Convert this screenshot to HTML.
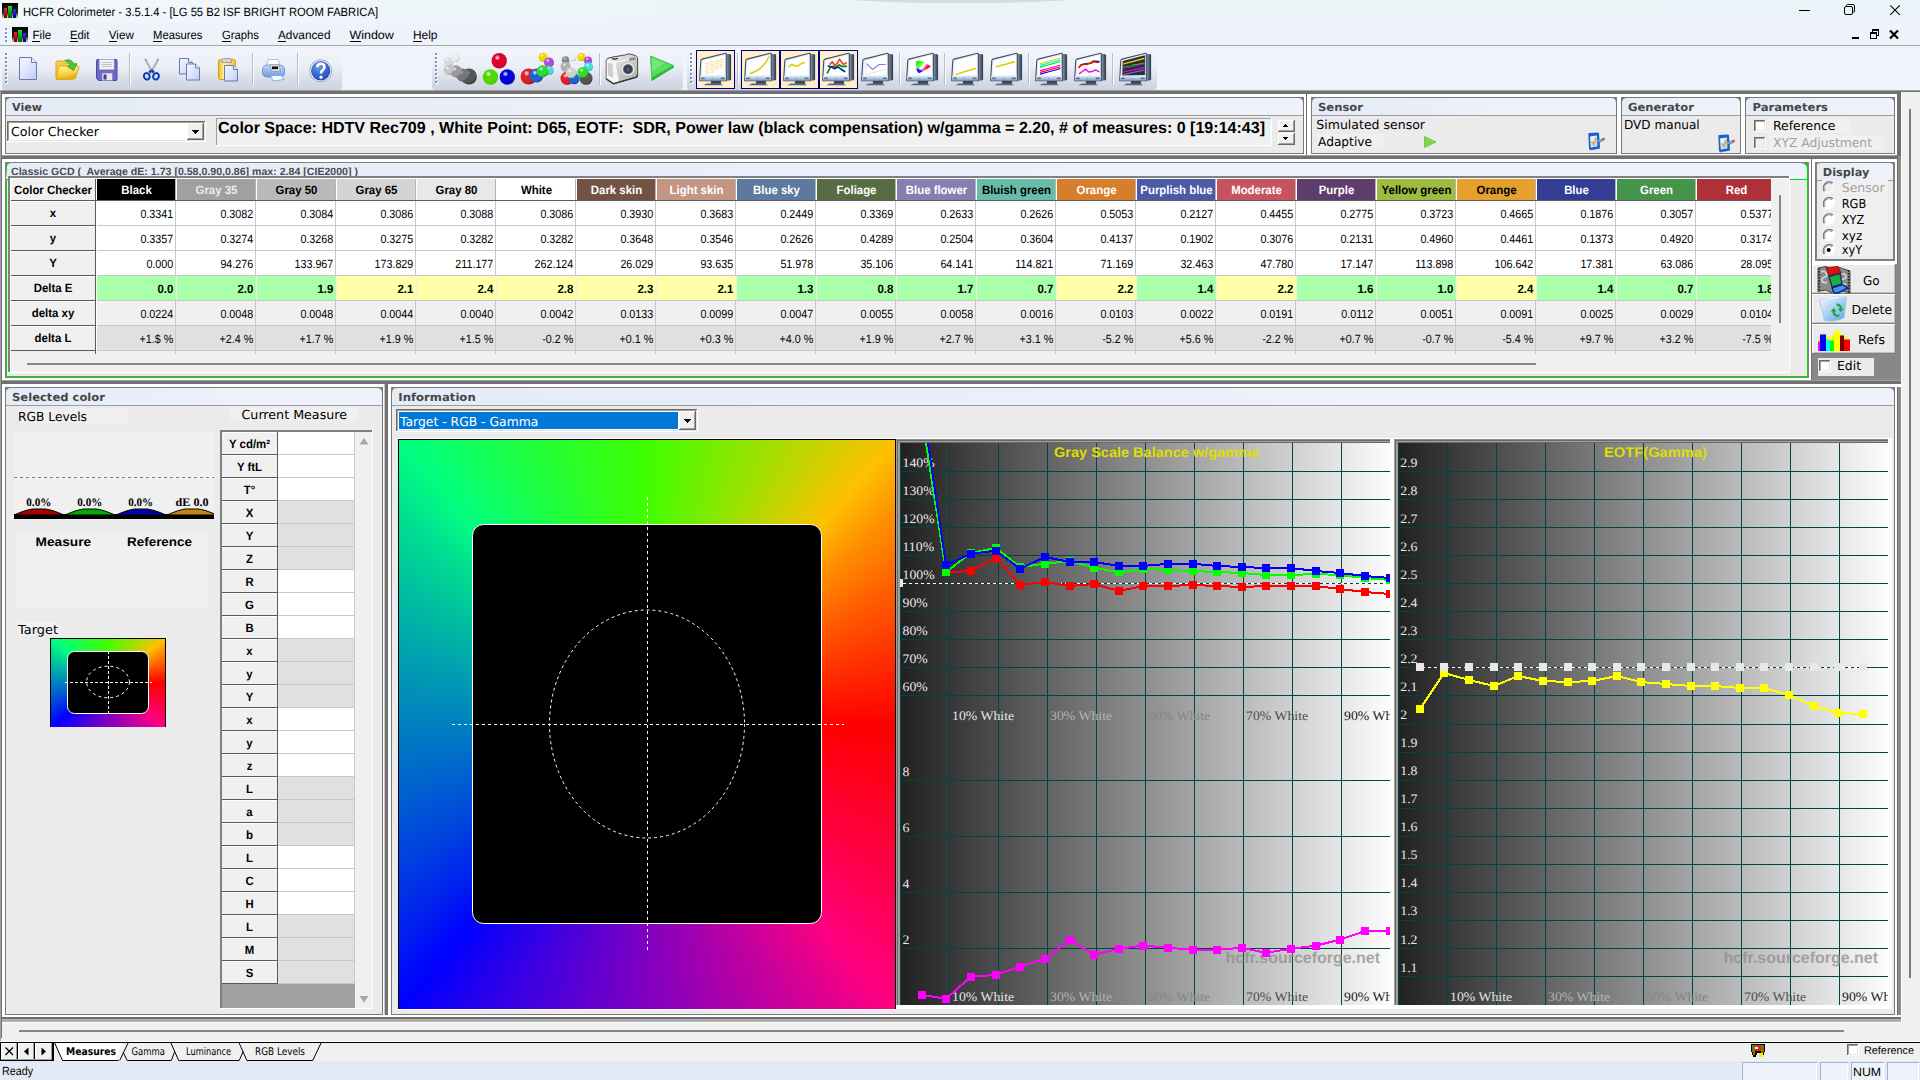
<!DOCTYPE html>
<html><head><meta charset="utf-8"><title>HCFR Colorimeter</title>
<style>
html,body{margin:0;padding:0;background:#f0f0f0;overflow:hidden}
svg{display:block}
text{white-space:pre}
</style></head><body>
<svg width="1920" height="1080" viewBox="0 0 1920 1080" shape-rendering="crispEdges" text-rendering="geometricPrecision">
<defs>
<linearGradient id="gTitle" x1="0" x2="1" y1="0" y2="0"><stop offset="0" stop-color="#f2f7fa"/><stop offset="0.5" stop-color="#eaf4f7"/><stop offset="1" stop-color="#ebf4f8"/></linearGradient>
<linearGradient id="gi2_3" x1="0" x2="0" y1="0" y2="1"><stop offset="0" stop-color="#000"/><stop offset="0.6" stop-color="#222"/><stop offset="1" stop-color="#fff"/></linearGradient>
<linearGradient id="gb2_3_0" x1="0" x2="0" y1="0" y2="1"><stop offset="0" stop-color="#ff2020"/><stop offset="1" stop-color="#700000"/></linearGradient>
<linearGradient id="gb2_3_1" x1="0" x2="0" y1="0" y2="1"><stop offset="0" stop-color="#20e020"/><stop offset="1" stop-color="#006000"/></linearGradient>
<linearGradient id="gb2_3_2" x1="0" x2="0" y1="0" y2="1"><stop offset="0" stop-color="#3030ff"/><stop offset="1" stop-color="#000080"/></linearGradient>
<linearGradient id="gi12_27" x1="0" x2="0" y1="0" y2="1"><stop offset="0" stop-color="#000"/><stop offset="0.6" stop-color="#222"/><stop offset="1" stop-color="#fff"/></linearGradient>
<linearGradient id="gb12_27_0" x1="0" x2="0" y1="0" y2="1"><stop offset="0" stop-color="#ff2020"/><stop offset="1" stop-color="#700000"/></linearGradient>
<linearGradient id="gb12_27_1" x1="0" x2="0" y1="0" y2="1"><stop offset="0" stop-color="#20e020"/><stop offset="1" stop-color="#006000"/></linearGradient>
<linearGradient id="gb12_27_2" x1="0" x2="0" y1="0" y2="1"><stop offset="0" stop-color="#3030ff"/><stop offset="1" stop-color="#000080"/></linearGradient>
<linearGradient id="gTb" x1="0" x2="0" y1="0" y2="1"><stop offset="0" stop-color="#f2f5fb"/><stop offset="0.45" stop-color="#eaeef6"/><stop offset="0.8" stop-color="#d6dbe6"/><stop offset="1" stop-color="#cdd3df"/></linearGradient>
<linearGradient id="gPage" x1="0" y1="0" x2="1" y2="1"><stop offset="0" stop-color="#f4f7ff"/><stop offset="0.5" stop-color="#dfe6fb"/><stop offset="1" stop-color="#b9cdf6"/></linearGradient>
<linearGradient id="gFold" x1="0" y1="0" x2="0.3" y2="1"><stop offset="0" stop-color="#fff3a8"/><stop offset="0.6" stop-color="#f9d84a"/><stop offset="1" stop-color="#e8ad10"/></linearGradient>
<linearGradient id="gClip" x1="0" y1="0" x2="1" y2="0"><stop offset="0" stop-color="#e8b820"/><stop offset="0.3" stop-color="#fdf0a0"/><stop offset="1" stop-color="#f0c840"/></linearGradient>
<linearGradient id="gPrn" x1="0" y1="0" x2="0" y2="1"><stop offset="0" stop-color="#c8d8f8"/><stop offset="1" stop-color="#6f98e0"/></linearGradient>
<radialGradient id="gHelp" cx="0.4" cy="0.3" r="0.8"><stop offset="0" stop-color="#6f9ae8"/><stop offset="0.6" stop-color="#2f62c8"/><stop offset="1" stop-color="#1f48a8"/></radialGradient>
<radialGradient id="gs0" cx="0.38" cy="0.3" r="0.75"><stop offset="0" stop-color="#fff"/><stop offset="0.25" stop-color="#555"/><stop offset="0.75" stop-color="#555"/><stop offset="1" stop-color="#2a2a2a"/></radialGradient>
<radialGradient id="gs1" cx="0.38" cy="0.3" r="0.75"><stop offset="0" stop-color="#fff"/><stop offset="0.25" stop-color="#777"/><stop offset="0.75" stop-color="#777"/><stop offset="1" stop-color="#444"/></radialGradient>
<radialGradient id="gs2" cx="0.38" cy="0.3" r="0.75"><stop offset="0" stop-color="#fff"/><stop offset="0.25" stop-color="#9a9a9a"/><stop offset="0.75" stop-color="#9a9a9a"/><stop offset="1" stop-color="#666"/></radialGradient>
<radialGradient id="gs3" cx="0.38" cy="0.3" r="0.75"><stop offset="0" stop-color="#fff"/><stop offset="0.25" stop-color="#c8c8c8"/><stop offset="0.75" stop-color="#c8c8c8"/><stop offset="1" stop-color="#888"/></radialGradient>
<radialGradient id="gs4" cx="0.38" cy="0.3" r="0.75"><stop offset="0" stop-color="#fff"/><stop offset="0.25" stop-color="#d8d8d8"/><stop offset="0.75" stop-color="#d8d8d8"/><stop offset="1" stop-color="#999"/></radialGradient>
<radialGradient id="gs5" cx="0.38" cy="0.3" r="0.75"><stop offset="0" stop-color="#fff"/><stop offset="0.25" stop-color="#ececec"/><stop offset="0.75" stop-color="#ececec"/><stop offset="1" stop-color="#aaa"/></radialGradient>
<radialGradient id="gs6" cx="0.38" cy="0.3" r="0.75"><stop offset="0" stop-color="#fff"/><stop offset="0.25" stop-color="#dc0030"/><stop offset="0.75" stop-color="#dc0030"/><stop offset="1" stop-color="#c00028"/></radialGradient>
<radialGradient id="gs7" cx="0.38" cy="0.3" r="0.75"><stop offset="0" stop-color="#fff"/><stop offset="0.25" stop-color="#50d800"/><stop offset="0.75" stop-color="#50d800"/><stop offset="1" stop-color="#40c000"/></radialGradient>
<radialGradient id="gs8" cx="0.38" cy="0.3" r="0.75"><stop offset="0" stop-color="#fff"/><stop offset="0.25" stop-color="#0000d8"/><stop offset="0.75" stop-color="#0000d8"/><stop offset="1" stop-color="#0000a8"/></radialGradient>
<radialGradient id="gs9" cx="0.38" cy="0.3" r="0.75"><stop offset="0" stop-color="#fff"/><stop offset="0.25" stop-color="#e02020"/><stop offset="0.75" stop-color="#e02020"/><stop offset="1" stop-color="#801010"/></radialGradient>
<radialGradient id="gs10" cx="0.38" cy="0.3" r="0.75"><stop offset="0" stop-color="#fff"/><stop offset="0.25" stop-color="#2060d8"/><stop offset="0.75" stop-color="#2060d8"/><stop offset="1" stop-color="#103890"/></radialGradient>
<radialGradient id="gs11" cx="0.38" cy="0.3" r="0.75"><stop offset="0" stop-color="#fff"/><stop offset="0.25" stop-color="#f0d800"/><stop offset="0.75" stop-color="#f0d800"/><stop offset="1" stop-color="#b09000"/></radialGradient>
<radialGradient id="gs12" cx="0.38" cy="0.3" r="0.75"><stop offset="0" stop-color="#fff"/><stop offset="0.25" stop-color="#b050d8"/><stop offset="0.75" stop-color="#b050d8"/><stop offset="1" stop-color="#703098"/></radialGradient>
<radialGradient id="gs13" cx="0.38" cy="0.3" r="0.75"><stop offset="0" stop-color="#fff"/><stop offset="0.25" stop-color="#40e0e0"/><stop offset="0.75" stop-color="#40e0e0"/><stop offset="1" stop-color="#20a0a0"/></radialGradient>
<radialGradient id="gs14" cx="0.38" cy="0.3" r="0.75"><stop offset="0" stop-color="#fff"/><stop offset="0.25" stop-color="#30d830"/><stop offset="0.75" stop-color="#30d830"/><stop offset="1" stop-color="#109010"/></radialGradient>
<radialGradient id="gs15" cx="0.38" cy="0.3" r="0.75"><stop offset="0" stop-color="#fff"/><stop offset="0.25" stop-color="#888"/><stop offset="0.75" stop-color="#888"/><stop offset="1" stop-color="#555"/></radialGradient>
<radialGradient id="gs16" cx="0.38" cy="0.3" r="0.75"><stop offset="0" stop-color="#fff"/><stop offset="0.25" stop-color="#b0b0b0"/><stop offset="0.75" stop-color="#b0b0b0"/><stop offset="1" stop-color="#777"/></radialGradient>
<radialGradient id="gs17" cx="0.38" cy="0.3" r="0.75"><stop offset="0" stop-color="#fff"/><stop offset="0.25" stop-color="#d0d0d0"/><stop offset="0.75" stop-color="#d0d0d0"/><stop offset="1" stop-color="#8a8a8a"/></radialGradient>
<radialGradient id="gs18" cx="0.38" cy="0.3" r="0.75"><stop offset="0" stop-color="#fff"/><stop offset="0.25" stop-color="#eee"/><stop offset="0.75" stop-color="#eee"/><stop offset="1" stop-color="#aaa"/></radialGradient>
<linearGradient id="gCam" x1="0" y1="0" x2="1" y2="1"><stop offset="0" stop-color="#f4f4f4"/><stop offset="0.5" stop-color="#d0d0d0"/><stop offset="1" stop-color="#a8a8a8"/></linearGradient>
<linearGradient id="gMonB" x1="0" y1="0" x2="0" y2="1"><stop offset="0" stop-color="#e8f0fa"/><stop offset="1" stop-color="#7f9fc8"/></linearGradient>
<linearGradient id="gMonR" x1="0" y1="0" x2="1" y2="0"><stop offset="0" stop-color="#8fa6c2"/><stop offset="1" stop-color="#2c3644"/></linearGradient>
<linearGradient id="gCie" x1="0" y1="0" x2="1" y2="1"><stop offset="0" stop-color="#00e000"/><stop offset="0.35" stop-color="#60ff40"/><stop offset="0.5" stop-color="#fff"/><stop offset="0.7" stop-color="#ff2080"/><stop offset="1" stop-color="#ff0000"/></linearGradient>
<linearGradient id="gHdr" x1="0" x2="1" y1="0" y2="0"><stop offset="0" stop-color="#e4ecf7"/><stop offset="0.6" stop-color="#ecf1fa"/><stop offset="1" stop-color="#eef3fb"/></linearGradient>
<linearGradient id="gCfg" x1="0" y1="0" x2="1" y2="1"><stop offset="0" stop-color="#ffffff"/><stop offset="1" stop-color="#a8d4fb"/></linearGradient>
<linearGradient id="gBin" x1="0" y1="0" x2="1" y2="1"><stop offset="0" stop-color="#f4faff"/><stop offset="0.5" stop-color="#a8d0f4"/><stop offset="1" stop-color="#5fa0e0"/></linearGradient>
<linearGradient id="gCh1" gradientUnits="userSpaceOnUse" x1="900" x2="1390" y1="0" y2="0"><stop offset="0" stop-color="#212121"/><stop offset="1" stop-color="#fcfcfc"/></linearGradient>
<linearGradient id="gCh2" gradientUnits="userSpaceOnUse" x1="1398" x2="1888" y1="0" y2="0"><stop offset="0" stop-color="#212121"/><stop offset="1" stop-color="#fcfcfc"/></linearGradient>
</defs>
<rect x="0" y="0" width="1920" height="1080" fill="#f0f0f0"/>
<rect x="0" y="0" width="1920" height="23" fill="url(#gTitle)"/>
<rect x="0" y="23" width="1920" height="23" fill="#eef2fa"/>
<ellipse cx="961" cy="-1.5" rx="112" ry="4.5" fill="#b8bcc0" opacity="0.45" shape-rendering="geometricPrecision"/>
<rect x="0" y="45" width="1920" height="1" fill="#a8a8a8"/>
<rect x="0" y="46" width="1920" height="44" fill="#eff3fa"/>
<rect x="2" y="3" width="16" height="16" fill="url(#gi2_3)"/>
<rect x="4.0" y="8.0" width="3.4" height="10.0" fill="url(#gb2_3_0)"/>
<rect x="8.3" y="6.0" width="3.4" height="12.0" fill="url(#gb2_3_1)"/>
<rect x="12.6" y="9.0" width="3.4" height="9.0" fill="url(#gb2_3_2)"/>
<text x="23" y="16" font-family="'Liberation Sans', sans-serif" font-size="12" fill="#000" textLength="355.0" lengthAdjust="spacingAndGlyphs">HCFR Colorimeter - 3.5.1.4 - [LG 55 B2 ISF BRIGHT ROOM FABRICA]</text>
<g stroke="#000" stroke-width="1" fill="none" shape-rendering="geometricPrecision">
<path d="M1799 10.5H1810"/>
<rect x="1844.5" y="6.5" width="8" height="8" rx="1.5"/><path d="M1846.5 6.5V5.5a1 1 0 0 1 1-1H1853a1.5 1.5 0 0 1 1.5 1.5V11a1 1 0 0 1-1 1H1852.5"/>
<path d="M1890.3 5.3L1899.8 14.8M1899.8 5.3L1890.3 14.8" stroke-width="1.1"/>
</g>
<rect x="1852" y="37" width="7" height="2" fill="#000"/>
<g fill="none" stroke="#000" shape-rendering="crispEdges"><path d="M1872.5 32.5V30.5H1878.5V35.5H1876.5" stroke-width="1"/><rect x="1870.5" y="33.5" width="6" height="5"/><path d="M1870 33H1877M1872 30H1879" stroke-width="2"/></g>
<path d="M1890 30.5L1898 38.5M1898 30.5L1890 38.5" stroke="#000" stroke-width="2.2" shape-rendering="geometricPrecision"/>
<rect x="6" y="29" width="2" height="2" fill="#fff"/>
<rect x="5" y="28" width="2" height="2" fill="#7b94b6"/>
<rect x="6" y="33" width="2" height="2" fill="#fff"/>
<rect x="5" y="32" width="2" height="2" fill="#7b94b6"/>
<rect x="6" y="37" width="2" height="2" fill="#fff"/>
<rect x="5" y="36" width="2" height="2" fill="#7b94b6"/>
<rect x="6" y="41" width="2" height="2" fill="#fff"/>
<rect x="5" y="40" width="2" height="2" fill="#7b94b6"/>
<rect x="12" y="27" width="16" height="16" fill="url(#gi12_27)"/>
<rect x="14.0" y="32.0" width="3.4" height="10.0" fill="url(#gb12_27_0)"/>
<rect x="18.3" y="30.0" width="3.4" height="12.0" fill="url(#gb12_27_1)"/>
<rect x="22.6" y="33.0" width="3.4" height="9.0" fill="url(#gb12_27_2)"/>
<text x="32.5" y="39" font-family="'Liberation Sans', sans-serif" font-size="12" fill="#000" textLength="18.8" lengthAdjust="spacingAndGlyphs">File</text>
<rect x="32" y="41" width="8" height="1" fill="#000"/>
<text x="70" y="39" font-family="'Liberation Sans', sans-serif" font-size="12" fill="#000" textLength="19.5" lengthAdjust="spacingAndGlyphs">Edit</text>
<rect x="70" y="41" width="8" height="1" fill="#000"/>
<text x="108.8" y="39" font-family="'Liberation Sans', sans-serif" font-size="12" fill="#000" textLength="25.0" lengthAdjust="spacingAndGlyphs">View</text>
<rect x="109" y="41" width="8" height="1" fill="#000"/>
<text x="153" y="39" font-family="'Liberation Sans', sans-serif" font-size="12" fill="#000" textLength="49.5" lengthAdjust="spacingAndGlyphs">Measures</text>
<rect x="153" y="41" width="9" height="1" fill="#000"/>
<text x="222" y="39" font-family="'Liberation Sans', sans-serif" font-size="12" fill="#000" textLength="36.8" lengthAdjust="spacingAndGlyphs">Graphs</text>
<rect x="222" y="41" width="9" height="1" fill="#000"/>
<text x="278" y="39" font-family="'Liberation Sans', sans-serif" font-size="12" fill="#000" textLength="52.5" lengthAdjust="spacingAndGlyphs">Advanced</text>
<rect x="278" y="41" width="8" height="1" fill="#000"/>
<text x="349.5" y="39" font-family="'Liberation Sans', sans-serif" font-size="12" fill="#000" textLength="44.3" lengthAdjust="spacingAndGlyphs">Window</text>
<rect x="350" y="41" width="11" height="1" fill="#000"/>
<text x="413" y="39" font-family="'Liberation Sans', sans-serif" font-size="12" fill="#000" textLength="24.5" lengthAdjust="spacingAndGlyphs">Help</text>
<rect x="413" y="41" width="9" height="1" fill="#000"/>
<path d="M2 48H338Q342 48 342 52V86Q342 90 338 90H5Q2 90 2 87Z" fill="url(#gTb)" shape-rendering="geometricPrecision"/>
<rect x="6" y="54" width="2" height="2" fill="#fff"/>
<rect x="5" y="53" width="2" height="2" fill="#7b94b6"/>
<rect x="6" y="58" width="2" height="2" fill="#fff"/>
<rect x="5" y="57" width="2" height="2" fill="#7b94b6"/>
<rect x="6" y="62" width="2" height="2" fill="#fff"/>
<rect x="5" y="61" width="2" height="2" fill="#7b94b6"/>
<rect x="6" y="66" width="2" height="2" fill="#fff"/>
<rect x="5" y="65" width="2" height="2" fill="#7b94b6"/>
<rect x="6" y="70" width="2" height="2" fill="#fff"/>
<rect x="5" y="69" width="2" height="2" fill="#7b94b6"/>
<rect x="6" y="74" width="2" height="2" fill="#fff"/>
<rect x="5" y="73" width="2" height="2" fill="#7b94b6"/>
<rect x="6" y="78" width="2" height="2" fill="#fff"/>
<rect x="5" y="77" width="2" height="2" fill="#7b94b6"/>
<rect x="6" y="82" width="2" height="2" fill="#fff"/>
<rect x="5" y="81" width="2" height="2" fill="#7b94b6"/>
<path d="M432 48H679Q683 48 683 52V86Q683 90 679 90H435Q432 90 432 87Z" fill="url(#gTb)" shape-rendering="geometricPrecision"/>
<rect x="436" y="54" width="2" height="2" fill="#fff"/>
<rect x="435" y="53" width="2" height="2" fill="#7b94b6"/>
<rect x="436" y="58" width="2" height="2" fill="#fff"/>
<rect x="435" y="57" width="2" height="2" fill="#7b94b6"/>
<rect x="436" y="62" width="2" height="2" fill="#fff"/>
<rect x="435" y="61" width="2" height="2" fill="#7b94b6"/>
<rect x="436" y="66" width="2" height="2" fill="#fff"/>
<rect x="435" y="65" width="2" height="2" fill="#7b94b6"/>
<rect x="436" y="70" width="2" height="2" fill="#fff"/>
<rect x="435" y="69" width="2" height="2" fill="#7b94b6"/>
<rect x="436" y="74" width="2" height="2" fill="#fff"/>
<rect x="435" y="73" width="2" height="2" fill="#7b94b6"/>
<rect x="436" y="78" width="2" height="2" fill="#fff"/>
<rect x="435" y="77" width="2" height="2" fill="#7b94b6"/>
<rect x="436" y="82" width="2" height="2" fill="#fff"/>
<rect x="435" y="81" width="2" height="2" fill="#7b94b6"/>
<path d="M687 48H1153Q1157 48 1157 52V86Q1157 90 1153 90H690Q687 90 687 87Z" fill="url(#gTb)" shape-rendering="geometricPrecision"/>
<rect x="691" y="54" width="2" height="2" fill="#fff"/>
<rect x="690" y="53" width="2" height="2" fill="#7b94b6"/>
<rect x="691" y="58" width="2" height="2" fill="#fff"/>
<rect x="690" y="57" width="2" height="2" fill="#7b94b6"/>
<rect x="691" y="62" width="2" height="2" fill="#fff"/>
<rect x="690" y="61" width="2" height="2" fill="#7b94b6"/>
<rect x="691" y="66" width="2" height="2" fill="#fff"/>
<rect x="690" y="65" width="2" height="2" fill="#7b94b6"/>
<rect x="691" y="70" width="2" height="2" fill="#fff"/>
<rect x="690" y="69" width="2" height="2" fill="#7b94b6"/>
<rect x="691" y="74" width="2" height="2" fill="#fff"/>
<rect x="690" y="73" width="2" height="2" fill="#7b94b6"/>
<rect x="691" y="78" width="2" height="2" fill="#fff"/>
<rect x="690" y="77" width="2" height="2" fill="#7b94b6"/>
<rect x="691" y="82" width="2" height="2" fill="#fff"/>
<rect x="690" y="81" width="2" height="2" fill="#7b94b6"/>
<rect x="129" y="53" width="1" height="32" fill="#b8bccb"/>
<rect x="130" y="53" width="1" height="32" fill="#fbfcff"/>
<rect x="252" y="53" width="1" height="32" fill="#b8bccb"/>
<rect x="253" y="53" width="1" height="32" fill="#fbfcff"/>
<rect x="297" y="53" width="1" height="32" fill="#b8bccb"/>
<rect x="298" y="53" width="1" height="32" fill="#fbfcff"/>
<rect x="599" y="53" width="1" height="32" fill="#b8bccb"/>
<rect x="600" y="53" width="1" height="32" fill="#fbfcff"/>
<rect x="737" y="53" width="1" height="32" fill="#b8bccb"/>
<rect x="738" y="53" width="1" height="32" fill="#fbfcff"/>
<rect x="899" y="53" width="1" height="32" fill="#b8bccb"/>
<rect x="900" y="53" width="1" height="32" fill="#fbfcff"/>
<rect x="944" y="53" width="1" height="32" fill="#b8bccb"/>
<rect x="945" y="53" width="1" height="32" fill="#fbfcff"/>
<rect x="1028" y="53" width="1" height="32" fill="#b8bccb"/>
<rect x="1029" y="53" width="1" height="32" fill="#fbfcff"/>
<rect x="1112" y="53" width="1" height="32" fill="#b8bccb"/>
<rect x="1113" y="53" width="1" height="32" fill="#fbfcff"/>
<g shape-rendering="geometricPrecision">
<path d="M19.5 57.5H31.5L36.5 62.5V79.5H19.5Z" fill="url(#gPage)" stroke="#6b78b4" stroke-width="1"/>
<path d="M31.5 57.5V62.5H36.5" fill="#eef2ff" stroke="#6b78b4" stroke-width="1"/>
<path d="M56 62.5Q56 61 57.5 61H63L65 63H74Q75.5 63 75.5 64.5V78H56Z" fill="#f5cf45" stroke="#d9a514" stroke-width="1"/>
<path d="M56.3 79.5L58.5 67.5Q58.8 66 60.5 66H77.5Q79.3 66 78.9 67.6L75.5 77.5Q75 79 73.5 79.2Z" fill="url(#gFold)" stroke="#dba915" stroke-width="1"/>
<path d="M64.5 60.5Q71.5 58 74 64.5L77 63.5L73.5 70.5L67.5 66.5L70.5 65.7Q69 62 64.5 60.5Z" fill="#4fc63c" stroke="#2e9a22" stroke-width="0.8"/>
<path d="M96.5 60.5Q96.5 59.5 97.5 59.5H116Q117 59.5 117 60.5V79.5Q117 80.5 116 80.5H98.5L96.5 78.5Z" fill="#6a68c8" stroke="#4a48a8" stroke-width="1"/>
<rect x="99.5" y="59.5" width="14.5" height="10" fill="#f4f4f6" stroke="#b8b8c8" stroke-width="0.6"/>
<path d="M101.5 62.5H112M101.5 64.5H112M101.5 66.5H112" stroke="#b0b0b8" stroke-width="0.8"/>
<rect x="102" y="73" width="10.5" height="7.5" fill="#e9e9ee" stroke="#8080a0" stroke-width="0.6"/><rect x="103.5" y="74.5" width="3" height="5" fill="#3b3aa0"/>
<path d="M145.5 59.5L153 73M158 59.5L150.5 73" stroke="#8d98aa" stroke-width="1.8" stroke-linecap="round"/>
<path d="M146.5 60L152 71M157 60L151.5 71" stroke="#e8ecf2" stroke-width="0.6"/>
<ellipse cx="146.8" cy="76.3" rx="2.8" ry="3.3" fill="none" stroke="#0b3db8" stroke-width="2" transform="rotate(-25 146.8 76.3)"/><ellipse cx="156" cy="76.3" rx="2.8" ry="3.3" fill="none" stroke="#0b3db8" stroke-width="2" transform="rotate(25 156 76.3)"/>
<path d="M149 72.5L151.7 70M154 72.5L151.7 70" stroke="#0b3db8" stroke-width="2"/>
<path d="M179.5 58.5H188.5L192.5 62.5V74.0H179.5Z" fill="url(#gPage)" stroke="#6b78b4" stroke-width="1"/>
<path d="M188.5 58.5V62.5H192.5" fill="#eef2ff" stroke="#6b78b4" stroke-width="1"/>
<path d="M186.5 64.0H195.5L199.5 68.0V80.0H186.5Z" fill="url(#gPage)" stroke="#6b78b4" stroke-width="1"/>
<path d="M195.5 64.0V68.0H199.5" fill="#eef2ff" stroke="#6b78b4" stroke-width="1"/>
<rect x="218.5" y="59.5" width="17" height="20" rx="2" fill="url(#gClip)" stroke="#d8a010" stroke-width="1"/>
<path d="M222 62.5V60Q222 58.5 223.5 58.5H230Q231.5 58.5 231.5 60V62.5Z" fill="#d6d6da" stroke="#909098" stroke-width="0.8"/>
<path d="M224.5 65.5H233.5L237.5 69.5V81.0H224.5Z" fill="url(#gPage)" stroke="#6b78b4" stroke-width="1"/>
<path d="M233.5 65.5V69.5H237.5" fill="#eef2ff" stroke="#6b78b4" stroke-width="1"/>
<path d="M266.5 67L268 59.5H278L280 67Z" fill="#fff" stroke="#a8b0c8" stroke-width="0.8"/>
<path d="M262.5 70Q262.5 65 268 65H279Q284.5 65 284.5 70V73Q284.5 77 279 77H268Q262.5 77 262.5 73Z" fill="url(#gPrn)" stroke="#5f86d0" stroke-width="0.8"/>
<path d="M270 64.5H279L280.5 71.5H271.5Z" fill="#d8d8d8" stroke="#888" stroke-width="0.5"/><rect x="272" y="66.5" width="6" height="2.6" fill="#111"/>
<path d="M270.5 75.5H281.5L284 79.5L273 81Z" fill="#f4faff" stroke="#58a8e8" stroke-width="0.8"/>
<circle cx="320.7" cy="70.8" r="11" fill="#fff" stroke="#8890a8" stroke-width="0.8"/><circle cx="320.7" cy="70.8" r="9.7" fill="url(#gHelp)"/>
<path d="M317.3 67.3Q317.3 63.8 320.9 63.8Q324.5 63.8 324.5 67Q324.5 69 322.5 70.3Q321 71.3 321 73.4" fill="none" stroke="#fff" stroke-width="2.6"/><circle cx="321" cy="77.2" r="1.6" fill="#fff"/>
<circle cx="468.9" cy="76.5" r="8" fill="url(#gs0)"/>
<circle cx="462.5" cy="75" r="6.5" fill="url(#gs1)"/>
<circle cx="456" cy="71.3" r="6" fill="url(#gs2)"/>
<circle cx="448.6" cy="70" r="5" fill="url(#gs3)"/>
<circle cx="448.6" cy="62" r="4.7" fill="url(#gs4)"/>
<circle cx="455.2" cy="57.2" r="4.5" fill="url(#gs5)"/>
<circle cx="499.2" cy="60.8" r="7.7" fill="url(#gs6)"/>
<circle cx="490.4" cy="77" r="7.7" fill="url(#gs7)"/>
<circle cx="507.3" cy="77" r="7.7" fill="url(#gs8)"/>
<circle cx="528.6" cy="76.5" r="8" fill="url(#gs9)"/>
<circle cx="536.5" cy="75.5" r="7" fill="url(#gs10)"/>
<circle cx="543" cy="57.2" r="4.5" fill="url(#gs11)"/>
<circle cx="549" cy="62.4" r="5" fill="url(#gs12)"/>
<circle cx="549.2" cy="70.5" r="4.5" fill="url(#gs13)"/>
<circle cx="542.6" cy="71.3" r="6" fill="url(#gs14)"/>
<circle cx="586" cy="78.3" r="6.5" fill="url(#gs0)"/>
<circle cx="567" cy="78.3" r="6.5" fill="url(#gs9)"/>
<circle cx="574" cy="78.8" r="5.5" fill="url(#gs10)"/>
<circle cx="565.6" cy="60" r="3.8" fill="url(#gs15)"/>
<circle cx="565.6" cy="66.8" r="5" fill="url(#gs16)"/>
<circle cx="571.2" cy="72.7" r="5.5" fill="url(#gs17)"/>
<circle cx="572.6" cy="57" r="4" fill="url(#gs18)"/>
<circle cx="581.5" cy="57" r="4" fill="url(#gs11)"/>
<circle cx="588" cy="60.5" r="4" fill="url(#gs12)"/>
<circle cx="588.5" cy="66.8" r="4.5" fill="url(#gs13)"/>
<circle cx="583" cy="72.4" r="5.5" fill="url(#gs14)"/>
<path d="M606.2 60.5L607.5 58.3L613 57L625.5 54.9L628 53.9L630.5 54.2L635 55.3L637.6 57.2V75L636.5 77.2L613.5 83.8L606.2 78.8Z" fill="url(#gCam)" stroke="#4a4a4a" stroke-width="1"/>
<path d="M606.7 60.5L615.6 62.3L619 81.5L613.5 83.3L606.7 78.5Z" fill="#f6f6f6"/>
<path d="M608.3 63.3L612 64L612.6 77L608.6 75.2Z" fill="#cfcfcf" stroke="#b4b4b4" stroke-width="0.5"/>
<path d="M607 60.3L616 62.2L637.2 57.3" fill="none" stroke="#fdfdfd" stroke-width="1.1"/>
<path d="M612 58.2Q614.5 60 617.8 58.2" fill="none" stroke="#2a2a2a" stroke-width="1.1"/>
<path d="M629 58.2L635.5 57L635.8 59.6L629.5 60.8Z" fill="#8a8a8a"/>
<path d="M616.5 66L618.3 66.3M616.8 69L618.6 69.3M617.2 72L619 72.3M617.6 75L619.4 75.3" stroke="#bdbdbd" stroke-width="0.8"/>
<path d="M606.2 78.8L613.5 83.8L636.5 77.2L637.6 75" fill="none" stroke="#3a3a3a" stroke-width="1.5"/>
<circle cx="628" cy="69.2" r="6.6" fill="#ececec" stroke="#bcbcbc" stroke-width="0.5"/><circle cx="628" cy="69.2" r="5" fill="#5a5a5a"/><circle cx="628" cy="69.2" r="4.1" fill="#2c2c2c" stroke="#7a7a7a" stroke-width="0.5"/><circle cx="628" cy="69.2" r="2.7" fill="#3a3a40" stroke="#6a6a6a" stroke-width="0.4"/><circle cx="628" cy="69.4" r="1.6" fill="#1670f0"/>
<path d="M650.5 56L673.5 65.5L652 80.5Z" fill="#58dc60" stroke="#3cc848" stroke-width="1" stroke-linejoin="round"/><path d="M651.5 77.5L673.5 65.5L674 67.5L652 80.8Z" fill="#28b838"/><path d="M652 58L664 63L652.5 72Z" fill="#8cec90" opacity="0.6"/>
<rect x="696.5" y="50.5" width="38" height="38" fill="#ffeec8" stroke="#000080" stroke-width="1" shape-rendering="crispEdges"/>
<g transform="translate(699.3,53)">
<path d="M4 32.3L7.5 30.6H20.5L24 32.3Z" fill="#56677c"/><path d="M11.8 27.5H21.5L22 30.8H11.5Z" fill="#3a4656"/>
<path d="M26.5 0.8L31.2 1.2Q31.8 1.3 31.8 2V26.2Q31.8 27 31 27.2L26.5 28Z" fill="url(#gMonR)"/>
<path d="M1.5 7.5Q1.7 6.4 2.8 6.1L26.2 0.3Q27 0.2 27 1V27.8H1Q0.2 27.8 0.4 26.8Z" fill="#e9eff8" stroke="#3f4f62" stroke-width="1.1"/>
<path d="M0.8 22.8H26.6V27.4H0.6Z" fill="url(#gMonB)"/>
<rect x="2" y="24.6" width="3.4" height="1.5" fill="#5a6a80"/><rect x="21.5" y="24.6" width="3.8" height="1.5" fill="#5a6a80"/><rect x="12.6" y="24.8" width="1.2" height="1.2" fill="#8a9ab0"/>
<path d="M3.4 7.9L25.6 2.3V21.9L3 22.6Z" fill="#fff"/>
<g transform="matrix(22.4,-5.6,0,14.6,3.3,7.9)" fill="none" stroke-linecap="round" stroke-linejoin="round">
<rect x="0.12" y="0.2" width="0.17" height="0.1" fill="#fbe3a8" stroke="none"/><rect x="0.12" y="0.37" width="0.17" height="0.1" fill="#fbe3a8" stroke="none"/><rect x="0.12" y="0.54" width="0.17" height="0.1" fill="#fbe3a8" stroke="none"/><rect x="0.12" y="0.71" width="0.17" height="0.1" fill="#fbe3a8" stroke="none"/><rect x="0.12" y="0.8800000000000001" width="0.17" height="0.1" fill="#fbe3a8" stroke="none"/><rect x="0.32999999999999996" y="0.2" width="0.17" height="0.1" fill="#fbe3a8" stroke="none"/><rect x="0.32999999999999996" y="0.37" width="0.17" height="0.1" fill="#fbe3a8" stroke="none"/><rect x="0.32999999999999996" y="0.54" width="0.17" height="0.1" fill="#fbe3a8" stroke="none"/><rect x="0.32999999999999996" y="0.71" width="0.17" height="0.1" fill="#fbe3a8" stroke="none"/><rect x="0.32999999999999996" y="0.8800000000000001" width="0.17" height="0.1" fill="#fbe3a8" stroke="none"/><rect x="0.54" y="0.2" width="0.17" height="0.1" fill="#fbe3a8" stroke="none"/><rect x="0.54" y="0.37" width="0.17" height="0.1" fill="#fbe3a8" stroke="none"/><rect x="0.54" y="0.54" width="0.17" height="0.1" fill="#fbe3a8" stroke="none"/><rect x="0.54" y="0.71" width="0.17" height="0.1" fill="#fbe3a8" stroke="none"/><rect x="0.75" y="0.2" width="0.17" height="0.1" fill="#fbe3a8" stroke="none"/><rect x="0.75" y="0.37" width="0.17" height="0.1" fill="#fbe3a8" stroke="none"/><rect x="0.75" y="0.54" width="0.17" height="0.1" fill="#fbe3a8" stroke="none"/><rect x="0.75" y="0.71" width="0.17" height="0.1" fill="#fbe3a8" stroke="none"/>
</g></g>
<rect x="741.5" y="50.5" width="38" height="38" fill="#ffeec8" stroke="#000080" stroke-width="1" shape-rendering="crispEdges"/>
<g transform="translate(744.3,53)">
<path d="M4 32.3L7.5 30.6H20.5L24 32.3Z" fill="#56677c"/><path d="M11.8 27.5H21.5L22 30.8H11.5Z" fill="#3a4656"/>
<path d="M26.5 0.8L31.2 1.2Q31.8 1.3 31.8 2V26.2Q31.8 27 31 27.2L26.5 28Z" fill="url(#gMonR)"/>
<path d="M1.5 7.5Q1.7 6.4 2.8 6.1L26.2 0.3Q27 0.2 27 1V27.8H1Q0.2 27.8 0.4 26.8Z" fill="#e9eff8" stroke="#3f4f62" stroke-width="1.1"/>
<path d="M0.8 22.8H26.6V27.4H0.6Z" fill="url(#gMonB)"/>
<rect x="2" y="24.6" width="3.4" height="1.5" fill="#5a6a80"/><rect x="21.5" y="24.6" width="3.8" height="1.5" fill="#5a6a80"/><rect x="12.6" y="24.8" width="1.2" height="1.2" fill="#8a9ab0"/>
<path d="M3.4 7.9L25.6 2.3V21.9L3 22.6Z" fill="#fff"/>
<g transform="matrix(22.4,-5.6,0,14.6,3.3,7.9)" fill="none" stroke-linecap="round" stroke-linejoin="round">
<path d="M0.1 0.92Q0.7 0.85 0.95 0.1" stroke="#d8d000" stroke-width="1.6" vector-effect="non-scaling-stroke"/>
</g></g>
<rect x="780.5" y="50.5" width="38" height="38" fill="#ffeec8" stroke="#000080" stroke-width="1" shape-rendering="crispEdges"/>
<g transform="translate(783.3,53)">
<path d="M4 32.3L7.5 30.6H20.5L24 32.3Z" fill="#56677c"/><path d="M11.8 27.5H21.5L22 30.8H11.5Z" fill="#3a4656"/>
<path d="M26.5 0.8L31.2 1.2Q31.8 1.3 31.8 2V26.2Q31.8 27 31 27.2L26.5 28Z" fill="url(#gMonR)"/>
<path d="M1.5 7.5Q1.7 6.4 2.8 6.1L26.2 0.3Q27 0.2 27 1V27.8H1Q0.2 27.8 0.4 26.8Z" fill="#e9eff8" stroke="#3f4f62" stroke-width="1.1"/>
<path d="M0.8 22.8H26.6V27.4H0.6Z" fill="url(#gMonB)"/>
<rect x="2" y="24.6" width="3.4" height="1.5" fill="#5a6a80"/><rect x="21.5" y="24.6" width="3.8" height="1.5" fill="#5a6a80"/><rect x="12.6" y="24.8" width="1.2" height="1.2" fill="#8a9ab0"/>
<path d="M3.4 7.9L25.6 2.3V21.9L3 22.6Z" fill="#fff"/>
<g transform="matrix(22.4,-5.6,0,14.6,3.3,7.9)" fill="none" stroke-linecap="round" stroke-linejoin="round">
<path d="M0.1 0.45Q0.2 0.25 0.32 0.42T0.55 0.5T0.8 0.42" stroke="#d8d000" stroke-width="1.6" vector-effect="non-scaling-stroke"/>
</g></g>
<rect x="819.5" y="50.5" width="38" height="38" fill="#ffeec8" stroke="#000080" stroke-width="1" shape-rendering="crispEdges"/>
<g transform="translate(822.3,53)">
<path d="M4 32.3L7.5 30.6H20.5L24 32.3Z" fill="#56677c"/><path d="M11.8 27.5H21.5L22 30.8H11.5Z" fill="#3a4656"/>
<path d="M26.5 0.8L31.2 1.2Q31.8 1.3 31.8 2V26.2Q31.8 27 31 27.2L26.5 28Z" fill="url(#gMonR)"/>
<path d="M1.5 7.5Q1.7 6.4 2.8 6.1L26.2 0.3Q27 0.2 27 1V27.8H1Q0.2 27.8 0.4 26.8Z" fill="#e9eff8" stroke="#3f4f62" stroke-width="1.1"/>
<path d="M0.8 22.8H26.6V27.4H0.6Z" fill="url(#gMonB)"/>
<rect x="2" y="24.6" width="3.4" height="1.5" fill="#5a6a80"/><rect x="21.5" y="24.6" width="3.8" height="1.5" fill="#5a6a80"/><rect x="12.6" y="24.8" width="1.2" height="1.2" fill="#8a9ab0"/>
<path d="M3.4 7.9L25.6 2.3V21.9L3 22.6Z" fill="#fff"/>
<g transform="matrix(22.4,-5.6,0,14.6,3.3,7.9)" fill="none" stroke-linecap="round" stroke-linejoin="round">
<path d="M0.08 0.85L0.2 0.55L0.32 0.5L0.45 0.62L0.6 0.5L0.75 0.68L0.92 0.72" stroke="#1a8a1a" stroke-width="1.8" vector-effect="non-scaling-stroke"/><path d="M0.12 0.4L0.25 0.5L0.4 0.68L0.55 0.62L0.7 0.85L0.85 1.05" stroke="#1030a0" stroke-width="1.8" vector-effect="non-scaling-stroke"/><path d="M0.2 0.3L0.3 0.18L0.42 0.5L0.55 0.3L0.62 0.12L0.8 0.55L0.92 0.5" stroke="#e85020" stroke-width="1.8" vector-effect="non-scaling-stroke"/>
</g></g>
<g transform="translate(861.3,53)">
<path d="M4 32.3L7.5 30.6H20.5L24 32.3Z" fill="#56677c"/><path d="M11.8 27.5H21.5L22 30.8H11.5Z" fill="#3a4656"/>
<path d="M26.5 0.8L31.2 1.2Q31.8 1.3 31.8 2V26.2Q31.8 27 31 27.2L26.5 28Z" fill="url(#gMonR)"/>
<path d="M1.5 7.5Q1.7 6.4 2.8 6.1L26.2 0.3Q27 0.2 27 1V27.8H1Q0.2 27.8 0.4 26.8Z" fill="#e9eff8" stroke="#3f4f62" stroke-width="1.1"/>
<path d="M0.8 22.8H26.6V27.4H0.6Z" fill="url(#gMonB)"/>
<rect x="2" y="24.6" width="3.4" height="1.5" fill="#5a6a80"/><rect x="21.5" y="24.6" width="3.8" height="1.5" fill="#5a6a80"/><rect x="12.6" y="24.8" width="1.2" height="1.2" fill="#8a9ab0"/>
<path d="M3.4 7.9L25.6 2.3V21.9L3 22.6Z" fill="#fff"/>
<g transform="matrix(22.4,-5.6,0,14.6,3.3,7.9)" fill="none" stroke-linecap="round" stroke-linejoin="round">
<path d="M0.1 0.25L0.35 0.72L0.65 0.5L0.92 0.6" stroke="#8878e0" stroke-width="1.1" vector-effect="non-scaling-stroke"/><path d="M0.06 0.1V0.95H0.95" stroke="#d8d8d8" stroke-width="0.7" vector-effect="non-scaling-stroke"/>
</g></g>
<g transform="translate(906.3,53)">
<path d="M4 32.3L7.5 30.6H20.5L24 32.3Z" fill="#56677c"/><path d="M11.8 27.5H21.5L22 30.8H11.5Z" fill="#3a4656"/>
<path d="M26.5 0.8L31.2 1.2Q31.8 1.3 31.8 2V26.2Q31.8 27 31 27.2L26.5 28Z" fill="url(#gMonR)"/>
<path d="M1.5 7.5Q1.7 6.4 2.8 6.1L26.2 0.3Q27 0.2 27 1V27.8H1Q0.2 27.8 0.4 26.8Z" fill="#e9eff8" stroke="#3f4f62" stroke-width="1.1"/>
<path d="M0.8 22.8H26.6V27.4H0.6Z" fill="url(#gMonB)"/>
<rect x="2" y="24.6" width="3.4" height="1.5" fill="#5a6a80"/><rect x="21.5" y="24.6" width="3.8" height="1.5" fill="#5a6a80"/><rect x="12.6" y="24.8" width="1.2" height="1.2" fill="#8a9ab0"/>
<path d="M3.4 7.9L25.6 2.3V21.9L3 22.6Z" fill="#fff"/>
<g transform="matrix(22.4,-5.6,0,14.6,3.3,7.9)" fill="none" stroke-linecap="round" stroke-linejoin="round">
<path d="M0.3 0.12Q0.25 0.5 0.42 1.0L0.95 0.75Q0.6 0.15 0.3 0.12Z" fill="url(#gCie)" stroke="none"/><path d="M0.3 0.6Q0.3 0.85 0.42 1.0L0.6 0.92Z" fill="#2020ff" stroke="none"/><path d="M0.95 0.75L0.75 0.62L0.7 0.87Z" fill="#ff1010" stroke="none"/>
</g></g>
<g transform="translate(951.3,53)">
<path d="M4 32.3L7.5 30.6H20.5L24 32.3Z" fill="#56677c"/><path d="M11.8 27.5H21.5L22 30.8H11.5Z" fill="#3a4656"/>
<path d="M26.5 0.8L31.2 1.2Q31.8 1.3 31.8 2V26.2Q31.8 27 31 27.2L26.5 28Z" fill="url(#gMonR)"/>
<path d="M1.5 7.5Q1.7 6.4 2.8 6.1L26.2 0.3Q27 0.2 27 1V27.8H1Q0.2 27.8 0.4 26.8Z" fill="#e9eff8" stroke="#3f4f62" stroke-width="1.1"/>
<path d="M0.8 22.8H26.6V27.4H0.6Z" fill="url(#gMonB)"/>
<rect x="2" y="24.6" width="3.4" height="1.5" fill="#5a6a80"/><rect x="21.5" y="24.6" width="3.8" height="1.5" fill="#5a6a80"/><rect x="12.6" y="24.8" width="1.2" height="1.2" fill="#8a9ab0"/>
<path d="M3.4 7.9L25.6 2.3V21.9L3 22.6Z" fill="#fff"/>
<g transform="matrix(22.4,-5.6,0,14.6,3.3,7.9)" fill="none" stroke-linecap="round" stroke-linejoin="round">
<path d="M0.08 0.95L0.92 0.88" stroke="#d8d000" stroke-width="1.6" vector-effect="non-scaling-stroke"/>
</g></g>
<g transform="translate(990.3,53)">
<path d="M4 32.3L7.5 30.6H20.5L24 32.3Z" fill="#56677c"/><path d="M11.8 27.5H21.5L22 30.8H11.5Z" fill="#3a4656"/>
<path d="M26.5 0.8L31.2 1.2Q31.8 1.3 31.8 2V26.2Q31.8 27 31 27.2L26.5 28Z" fill="url(#gMonR)"/>
<path d="M1.5 7.5Q1.7 6.4 2.8 6.1L26.2 0.3Q27 0.2 27 1V27.8H1Q0.2 27.8 0.4 26.8Z" fill="#e9eff8" stroke="#3f4f62" stroke-width="1.1"/>
<path d="M0.8 22.8H26.6V27.4H0.6Z" fill="url(#gMonB)"/>
<rect x="2" y="24.6" width="3.4" height="1.5" fill="#5a6a80"/><rect x="21.5" y="24.6" width="3.8" height="1.5" fill="#5a6a80"/><rect x="12.6" y="24.8" width="1.2" height="1.2" fill="#8a9ab0"/>
<path d="M3.4 7.9L25.6 2.3V21.9L3 22.6Z" fill="#fff"/>
<g transform="matrix(22.4,-5.6,0,14.6,3.3,7.9)" fill="none" stroke-linecap="round" stroke-linejoin="round">
<path d="M0.12 0.45L0.92 0.42" stroke="#d8d000" stroke-width="1.6" vector-effect="non-scaling-stroke"/>
</g></g>
<g transform="translate(1035.3,53)">
<path d="M4 32.3L7.5 30.6H20.5L24 32.3Z" fill="#56677c"/><path d="M11.8 27.5H21.5L22 30.8H11.5Z" fill="#3a4656"/>
<path d="M26.5 0.8L31.2 1.2Q31.8 1.3 31.8 2V26.2Q31.8 27 31 27.2L26.5 28Z" fill="url(#gMonR)"/>
<path d="M1.5 7.5Q1.7 6.4 2.8 6.1L26.2 0.3Q27 0.2 27 1V27.8H1Q0.2 27.8 0.4 26.8Z" fill="#e9eff8" stroke="#3f4f62" stroke-width="1.1"/>
<path d="M0.8 22.8H26.6V27.4H0.6Z" fill="url(#gMonB)"/>
<rect x="2" y="24.6" width="3.4" height="1.5" fill="#5a6a80"/><rect x="21.5" y="24.6" width="3.8" height="1.5" fill="#5a6a80"/><rect x="12.6" y="24.8" width="1.2" height="1.2" fill="#8a9ab0"/>
<path d="M3.4 7.9L25.6 2.3V21.9L3 22.6Z" fill="#fff"/>
<g transform="matrix(22.4,-5.6,0,14.6,3.3,7.9)" fill="none" stroke-linecap="round" stroke-linejoin="round">
<path d="M0.08 0.22L0.5 0.2L0.95 0.18" stroke="#e0d000" stroke-width="1.2" vector-effect="non-scaling-stroke"/><path d="M0.08 0.34L0.5 0.32L0.95 0.30000000000000004" stroke="#00f0f0" stroke-width="1.2" vector-effect="non-scaling-stroke"/><path d="M0.08 0.46L0.5 0.44L0.95 0.42000000000000004" stroke="#00e800" stroke-width="1.2" vector-effect="non-scaling-stroke"/><path d="M0.08 0.7L0.5 0.6799999999999999L0.95 0.6599999999999999" stroke="#ff00e0" stroke-width="1.2" vector-effect="non-scaling-stroke"/><path d="M0.08 0.82L0.5 0.7999999999999999L0.95 0.7799999999999999" stroke="#ff0000" stroke-width="1.2" vector-effect="non-scaling-stroke"/><path d="M0.08 0.94L0.5 0.9199999999999999L0.95 0.8999999999999999" stroke="#0000ff" stroke-width="1.2" vector-effect="non-scaling-stroke"/>
</g></g>
<g transform="translate(1074.3,53)">
<path d="M4 32.3L7.5 30.6H20.5L24 32.3Z" fill="#56677c"/><path d="M11.8 27.5H21.5L22 30.8H11.5Z" fill="#3a4656"/>
<path d="M26.5 0.8L31.2 1.2Q31.8 1.3 31.8 2V26.2Q31.8 27 31 27.2L26.5 28Z" fill="url(#gMonR)"/>
<path d="M1.5 7.5Q1.7 6.4 2.8 6.1L26.2 0.3Q27 0.2 27 1V27.8H1Q0.2 27.8 0.4 26.8Z" fill="#e9eff8" stroke="#3f4f62" stroke-width="1.1"/>
<path d="M0.8 22.8H26.6V27.4H0.6Z" fill="url(#gMonB)"/>
<rect x="2" y="24.6" width="3.4" height="1.5" fill="#5a6a80"/><rect x="21.5" y="24.6" width="3.8" height="1.5" fill="#5a6a80"/><rect x="12.6" y="24.8" width="1.2" height="1.2" fill="#8a9ab0"/>
<path d="M3.4 7.9L25.6 2.3V21.9L3 22.6Z" fill="#fff"/>
<g transform="matrix(22.4,-5.6,0,14.6,3.3,7.9)" fill="none" stroke-linecap="round" stroke-linejoin="round">
<path d="M0.08 0.42L0.25 0.32L0.5 0.36L0.7 0.28L0.95 0.42" stroke="#00d000" stroke-width="1.5" vector-effect="non-scaling-stroke"/><path d="M0.3 0.33L0.45 0.38M0.68 0.3L0.95 0.4" stroke="#0000ff" stroke-width="1.5" vector-effect="non-scaling-stroke"/><path d="M0.06 0.48L0.15 0.32L0.35 0.36L0.6 0.4L0.72 0.32L0.9 0.45" stroke="#ff0000" stroke-width="1.5" vector-effect="non-scaling-stroke"/><path d="M0.08 0.9L0.2 0.82L0.35 0.7L0.5 0.95L0.65 0.98L0.8 0.92L0.95 1.1" stroke="#ff00e0" stroke-width="1.4" vector-effect="non-scaling-stroke"/>
</g></g>
<g transform="translate(1119.3,53)">
<path d="M4 32.3L7.5 30.6H20.5L24 32.3Z" fill="#56677c"/><path d="M11.8 27.5H21.5L22 30.8H11.5Z" fill="#3a4656"/>
<path d="M26.5 0.8L31.2 1.2Q31.8 1.3 31.8 2V26.2Q31.8 27 31 27.2L26.5 28Z" fill="url(#gMonR)"/>
<path d="M1.5 7.5Q1.7 6.4 2.8 6.1L26.2 0.3Q27 0.2 27 1V27.8H1Q0.2 27.8 0.4 26.8Z" fill="#e9eff8" stroke="#3f4f62" stroke-width="1.1"/>
<path d="M0.8 22.8H26.6V27.4H0.6Z" fill="url(#gMonB)"/>
<rect x="2" y="24.6" width="3.4" height="1.5" fill="#5a6a80"/><rect x="21.5" y="24.6" width="3.8" height="1.5" fill="#5a6a80"/><rect x="12.6" y="24.8" width="1.2" height="1.2" fill="#8a9ab0"/>
<path d="M3.4 7.9L25.6 2.3V21.9L3 22.6Z" fill="#2a2c34"/>
<g transform="matrix(22.4,-5.6,0,14.6,3.3,7.9)" fill="none" stroke-linecap="round" stroke-linejoin="round">
<path d="M0.05 0.22L0.95 0.2" stroke="#e0d000" stroke-width="1.3" vector-effect="non-scaling-stroke"/><path d="M0.05 0.52L0.2 0.45L0.35 0.5L0.5 0.42L0.65 0.52L0.8 0.48L0.95 0.52" stroke="#00c000" stroke-width="1.2" vector-effect="non-scaling-stroke"/><path d="M0.05 0.45L0.25 0.52L0.45 0.55L0.7 0.5L0.95 0.58" stroke="#e86020" stroke-width="1.2" vector-effect="non-scaling-stroke"/><path d="M0.05 0.5L0.95 0.6" stroke="#2040d0" stroke-width="1.0" vector-effect="non-scaling-stroke"/><path d="M0.05 0.78L0.95 0.82" stroke="#ff00e0" stroke-width="1.2" vector-effect="non-scaling-stroke"/><path d="M0.05 0.95L0.95 1.0" stroke="#7070e0" stroke-width="1.2" vector-effect="non-scaling-stroke"/>
</g></g>
</g>
<rect x="0" y="90" width="1920" height="1" fill="#a0a0a0"/>
<rect x="0" y="91" width="1920" height="3" fill="#707070"/>
<rect x="0" y="94" width="1920" height="948" fill="#ebebeb"/>
<rect x="2" y="94" width="1895" height="923" fill="#fff"/>
<rect x="0" y="91" width="1" height="951" fill="#a0a0a0"/>
<rect x="1" y="91" width="1" height="949" fill="#707070"/>
<rect x="2" y="94" width="3" height="946" fill="#fff"/>
<rect x="4" y="96" width="1301" height="59" fill="#fff"/>
<path d="M5 102Q5 97 10 97H1299Q1304 97 1304 102V154H5Z" fill="#7a7a7a" shape-rendering="geometricPrecision"/>
<path d="M5 97h6l-6 6zM1304 97h-6l6 6z" fill="#7a7a7a" shape-rendering="geometricPrecision"/>
<path d="M6 103Q6 98 11 98H1298Q1303 98 1303 103V115H6Z" fill="url(#gHdr)" shape-rendering="geometricPrecision"/>
<rect x="6" y="115" width="1297" height="1" fill="#9c9c9c"/>
<rect x="6" y="116" width="1297" height="37" fill="#ebebeb"/>
<text x="12" y="111" font-family="'DejaVu Sans', sans-serif" font-size="11" font-weight="bold" fill="#464646" textLength="30.0" lengthAdjust="spacingAndGlyphs">View</text>
<rect x="1310" y="96" width="308" height="59" fill="#fff"/>
<path d="M1311 102Q1311 97 1316 97H1612Q1617 97 1617 102V154H1311Z" fill="#7a7a7a" shape-rendering="geometricPrecision"/>
<path d="M1311 97h6l-6 6zM1617 97h-6l6 6z" fill="#7a7a7a" shape-rendering="geometricPrecision"/>
<path d="M1312 103Q1312 98 1317 98H1611Q1616 98 1616 103V115H1312Z" fill="url(#gHdr)" shape-rendering="geometricPrecision"/>
<rect x="1312" y="115" width="304" height="1" fill="#9c9c9c"/>
<rect x="1312" y="116" width="304" height="37" fill="#ebebeb"/>
<text x="1318" y="111" font-family="'DejaVu Sans', sans-serif" font-size="11" font-weight="bold" fill="#464646" textLength="45.0" lengthAdjust="spacingAndGlyphs">Sensor</text>
<rect x="1620" y="96" width="122" height="59" fill="#fff"/>
<path d="M1621 102Q1621 97 1626 97H1736Q1741 97 1741 102V154H1621Z" fill="#7a7a7a" shape-rendering="geometricPrecision"/>
<path d="M1621 97h6l-6 6zM1741 97h-6l6 6z" fill="#7a7a7a" shape-rendering="geometricPrecision"/>
<path d="M1622 103Q1622 98 1627 98H1735Q1740 98 1740 103V115H1622Z" fill="url(#gHdr)" shape-rendering="geometricPrecision"/>
<rect x="1622" y="115" width="118" height="1" fill="#9c9c9c"/>
<rect x="1622" y="116" width="118" height="37" fill="#ebebeb"/>
<text x="1628" y="111" font-family="'DejaVu Sans', sans-serif" font-size="11" font-weight="bold" fill="#464646" textLength="66.0" lengthAdjust="spacingAndGlyphs">Generator</text>
<rect x="1744" y="96" width="152" height="59" fill="#fff"/>
<path d="M1745 102Q1745 97 1750 97H1890Q1895 97 1895 102V154H1745Z" fill="#7a7a7a" shape-rendering="geometricPrecision"/>
<path d="M1745 97h6l-6 6zM1895 97h-6l6 6z" fill="#7a7a7a" shape-rendering="geometricPrecision"/>
<path d="M1746 103Q1746 98 1751 98H1889Q1894 98 1894 103V115H1746Z" fill="url(#gHdr)" shape-rendering="geometricPrecision"/>
<rect x="1746" y="115" width="148" height="1" fill="#9c9c9c"/>
<rect x="1746" y="116" width="148" height="37" fill="#ebebeb"/>
<text x="1752.5" y="111" font-family="'DejaVu Sans', sans-serif" font-size="11" font-weight="bold" fill="#464646" textLength="75.5" lengthAdjust="spacingAndGlyphs">Parameters</text>
<rect x="1306" y="94" width="1" height="61" fill="#696969"/>
<rect x="2" y="155" width="1899" height="1" fill="#a0a0a0"/>
<rect x="2" y="156" width="1899" height="3" fill="#707070"/>
<rect x="2" y="159" width="1899" height="3" fill="#fff"/>
<rect x="1897" y="94" width="4" height="62" fill="#707070"/>
<rect x="1897" y="156" width="1" height="863" fill="#696969"/>
<rect x="1898" y="156" width="3" height="866" fill="#8c8c8c"/>
<rect x="1901" y="92" width="19" height="950" fill="#f0f0f0"/>
<rect x="1901" y="92" width="1" height="930" fill="#fff"/>
<rect x="1909" y="109" width="2" height="869" fill="#7c7c7c"/>
<rect x="7" y="121" width="199" height="21" fill="#fff"/>
<rect x="7" y="121" width="199" height="1" fill="#696969"/>
<rect x="7" y="121" width="1" height="21" fill="#696969"/>
<rect x="8" y="122" width="197" height="1" fill="#a0a0a0"/>
<rect x="8" y="122" width="1" height="19" fill="#a0a0a0"/>
<rect x="7" y="141" width="199" height="1" fill="#fff"/>
<rect x="205" y="121" width="1" height="21" fill="#fff"/>
<rect x="8" y="140" width="197" height="1" fill="#e3e3e3"/>
<rect x="204" y="122" width="1" height="19" fill="#e3e3e3"/>
<rect x="187" y="123" width="17" height="17" fill="#f0f0f0"/>
<rect x="187" y="123" width="17" height="1" fill="#fff"/>
<rect x="187" y="123" width="1" height="17" fill="#fff"/>
<rect x="187" y="139" width="17" height="1" fill="#696969"/>
<rect x="203" y="123" width="1" height="17" fill="#696969"/>
<rect x="188" y="138" width="15" height="1" fill="#a0a0a0"/>
<rect x="202" y="124" width="1" height="15" fill="#a0a0a0"/>
<rect x="192" y="130" width="7" height="1" fill="#000"/>
<rect x="193" y="131" width="5" height="1" fill="#000"/>
<rect x="194" y="132" width="3" height="1" fill="#000"/>
<rect x="195" y="133" width="1" height="1" fill="#000"/>
<text x="11" y="136" font-family="'DejaVu Sans', sans-serif" font-size="12.5" fill="#000" textLength="88.0" lengthAdjust="spacingAndGlyphs">Color Checker</text>
<rect x="216" y="118" width="1056" height="28" fill="#f0f0f0"/>
<rect x="216" y="118" width="1056" height="1" fill="#a0a0a0"/>
<rect x="216" y="118" width="1" height="28" fill="#a0a0a0"/>
<rect x="216" y="145" width="1056" height="1" fill="#fff"/>
<rect x="1271" y="118" width="1" height="28" fill="#fff"/>
<text x="218" y="133" font-family="'Liberation Sans', sans-serif" font-size="16" font-weight="bold" fill="#000" textLength="1047.0" lengthAdjust="spacingAndGlyphs">Color Space: HDTV Rec709 , White Point: D65, EOTF:  SDR, Power law (black compensation) w/gamma = 2.20, # of measures: 0 [19:14:43]</text>
<rect x="1278" y="120" width="17" height="12" fill="#f0f0f0"/>
<rect x="1278" y="120" width="16" height="1" fill="#fff"/>
<rect x="1278" y="120" width="1" height="11" fill="#fff"/>
<rect x="1278" y="131" width="17" height="1" fill="#696969"/>
<rect x="1294" y="120" width="1" height="12" fill="#696969"/>
<rect x="1279" y="130" width="15" height="1" fill="#a0a0a0"/>
<rect x="1293" y="121" width="1" height="10" fill="#a0a0a0"/>
<rect x="1278" y="133" width="17" height="12" fill="#f0f0f0"/>
<rect x="1278" y="133" width="16" height="1" fill="#fff"/>
<rect x="1278" y="133" width="1" height="11" fill="#fff"/>
<rect x="1278" y="144" width="17" height="1" fill="#696969"/>
<rect x="1294" y="133" width="1" height="12" fill="#696969"/>
<rect x="1279" y="143" width="15" height="1" fill="#a0a0a0"/>
<rect x="1293" y="134" width="1" height="10" fill="#a0a0a0"/>
<rect x="1285" y="124" width="1" height="1" fill="#000"/>
<rect x="1284" y="125" width="3" height="1" fill="#000"/>
<rect x="1283" y="126" width="5" height="1" fill="#000"/>
<rect x="1283" y="137" width="5" height="1" fill="#000"/>
<rect x="1284" y="138" width="3" height="1" fill="#000"/>
<rect x="1285" y="139" width="1" height="1" fill="#000"/>
<text x="1316.3" y="128.7" font-family="'DejaVu Sans', sans-serif" font-size="12.5" fill="#000" textLength="108.7" lengthAdjust="spacingAndGlyphs">Simulated sensor</text>
<rect x="1317" y="134" width="67" height="14" fill="#f0f0f0"/>
<text x="1318" y="145.8" font-family="'DejaVu Sans', sans-serif" font-size="12.5" fill="#000" textLength="54.0" lengthAdjust="spacingAndGlyphs">Adaptive</text>
<path d="M1424.5 136.5L1436 142L1424.5 147.5Z" fill="#86d44a" stroke="#6fbf3a" stroke-width="0.8" shape-rendering="geometricPrecision"/>
<g shape-rendering="geometricPrecision" transform="translate(1588,132.2)"><path d="M1 2.2L11 0.8L12.2 16.4L2 18.2Z" fill="#1c2c48" opacity="0.55"/><path d="M0.3 1.6Q0.3 1 1 0.9L10 0.2Q10.8 0.2 10.9 1L11.6 15.6Q11.6 16.4 10.8 16.5L1.8 17.6Q1 17.6 1 16.8Z" fill="#1b62d0"/><path d="M2.1 4.3L8.9 3.4L9.5 14.3L2.8 15.3Z" fill="url(#gCfg)"/><path d="M3.6 9.2L5.8 12.4L8 5.2" stroke="#d9ad3a" stroke-width="1.7" fill="none"/><path d="M9 10.2L15 7.6" stroke="#1c2c48" stroke-width="2.6" opacity="0.45"/><path d="M8.8 9.6L15 7" stroke="#6aa8f0" stroke-width="1.9"/><circle cx="15.5" cy="6.9" r="1.4" fill="#d2492c"/></g>
<g shape-rendering="geometricPrecision" transform="translate(1718,134.2)"><path d="M1 2.2L11 0.8L12.2 16.4L2 18.2Z" fill="#1c2c48" opacity="0.55"/><path d="M0.3 1.6Q0.3 1 1 0.9L10 0.2Q10.8 0.2 10.9 1L11.6 15.6Q11.6 16.4 10.8 16.5L1.8 17.6Q1 17.6 1 16.8Z" fill="#1b62d0"/><path d="M2.1 4.3L8.9 3.4L9.5 14.3L2.8 15.3Z" fill="url(#gCfg)"/><path d="M3.6 9.2L5.8 12.4L8 5.2" stroke="#d9ad3a" stroke-width="1.7" fill="none"/><path d="M9 10.2L15 7.6" stroke="#1c2c48" stroke-width="2.6" opacity="0.45"/><path d="M8.8 9.6L15 7" stroke="#6aa8f0" stroke-width="1.9"/><circle cx="15.5" cy="6.9" r="1.4" fill="#d2492c"/></g>
<text x="1624" y="128.7" font-family="'DejaVu Sans', sans-serif" font-size="12.5" fill="#000" textLength="75.7" lengthAdjust="spacingAndGlyphs">DVD manual</text>
<rect x="1769" y="118" width="81" height="15" fill="#f0f0f0"/>
<rect x="1769" y="135" width="115" height="15" fill="#f0f0f0"/>
<rect x="1754" y="120" width="12" height="12" fill="#fff"/>
<rect x="1754" y="120" width="12" height="1" fill="#696969"/>
<rect x="1754" y="120" width="1" height="12" fill="#696969"/>
<rect x="1755" y="121" width="10" height="1" fill="#a0a0a0"/>
<rect x="1755" y="121" width="1" height="10" fill="#a0a0a0"/>
<rect x="1754" y="131" width="12" height="1" fill="#fff"/>
<rect x="1765" y="120" width="1" height="12" fill="#fff"/>
<rect x="1755" y="130" width="10" height="1" fill="#e3e3e3"/>
<rect x="1764" y="121" width="1" height="10" fill="#e3e3e3"/>
<rect x="1754" y="137" width="12" height="12" fill="#f0f0f0"/>
<rect x="1754" y="137" width="12" height="1" fill="#696969"/>
<rect x="1754" y="137" width="1" height="12" fill="#696969"/>
<rect x="1755" y="138" width="10" height="1" fill="#a0a0a0"/>
<rect x="1755" y="138" width="1" height="10" fill="#a0a0a0"/>
<rect x="1754" y="148" width="12" height="1" fill="#fff"/>
<rect x="1765" y="137" width="1" height="12" fill="#fff"/>
<rect x="1755" y="147" width="10" height="1" fill="#e3e3e3"/>
<rect x="1764" y="138" width="1" height="10" fill="#e3e3e3"/>
<text x="1773" y="129.7" font-family="'DejaVu Sans', sans-serif" font-size="12.5" fill="#000" textLength="62.5" lengthAdjust="spacingAndGlyphs">Reference</text>
<text x="1773" y="146.7" font-family="'DejaVu Sans', sans-serif" font-size="12.5" fill="#a0a0a0" textLength="99.0" lengthAdjust="spacingAndGlyphs">XYZ Adjustment</text>
<rect x="4" y="161" width="1806" height="218" fill="#fff"/>
<path d="M5 167Q5 162 10 162H1804Q1809 162 1809 167V378H5Z" fill="#808080" shape-rendering="geometricPrecision"/>
<path d="M5 162h6l-6 6zM1809 162h-6l6 6z" fill="#808080" shape-rendering="geometricPrecision"/>
<path d="M6 168Q6 163 11 163H1803Q1808 163 1808 168V377H6Z" fill="#00e000" shape-rendering="geometricPrecision"/>
<path d="M7 169Q6 163 12 163H1801Q1807 164 1807 169V179H6Z" fill="url(#gHdr)" shape-rendering="geometricPrecision"/>
<rect x="5" y="168" width="1" height="11" fill="#808080"/>
<rect x="6" y="179" width="1802" height="1" fill="#00e000"/>
<rect x="7" y="180" width="1800" height="196" fill="#ebebeb"/>
<text x="11" y="174.6" font-family="'Liberation Sans', sans-serif" font-size="10.5" font-weight="bold" fill="#4a4a50" textLength="347.0" lengthAdjust="spacingAndGlyphs">Classic GCD (  Average dE: 1.73 [0.58,0.90,0.86] max: 2.84 [CIE2000] )</text>
<rect x="8" y="176" width="1782" height="197" fill="#f0f0f0"/>
<rect x="8" y="176" width="1782" height="2" fill="#808080"/>
<rect x="8" y="176" width="2" height="196" fill="#808080"/>
<rect x="10" y="178" width="1780" height="1" fill="#fff"/>
<rect x="10" y="178" width="1" height="194" fill="#fff"/>
<rect x="8" y="372" width="1782" height="1" fill="#fff"/>
<rect x="1789" y="176" width="1" height="197" fill="#fff"/>
<clipPath id="clipGrid"><rect x="11" y="179" width="1760" height="175"/></clipPath>
<g clip-path="url(#clipGrid)">
<rect x="11" y="179" width="84" height="176" fill="#f0f0f0"/>
<rect x="95" y="179" width="1" height="176" fill="#5a5a5a"/>
<rect x="96" y="179" width="1" height="176" fill="#fff"/>
<text x="53" y="194" font-family="'Liberation Sans', sans-serif" font-size="12" font-weight="bold" fill="#000" text-anchor="middle" textLength="78.0" lengthAdjust="spacingAndGlyphs">Color Checker</text>
<rect x="11" y="200" width="1761" height="1" fill="#5a5a5a"/>
<text x="53" y="217.2" font-family="'Liberation Sans', sans-serif" font-size="12" font-weight="bold" fill="#000" text-anchor="middle" textLength="6.3" lengthAdjust="spacingAndGlyphs">x</text>
<rect x="11" y="225" width="84" height="1" fill="#5a5a5a"/>
<rect x="11" y="201" width="84" height="1" fill="#fff"/>
<rect x="97" y="201" width="1680" height="24" fill="#fff"/>
<rect x="97" y="225" width="1675" height="1" fill="#c8c8c8"/>
<text x="53" y="242.2" font-family="'Liberation Sans', sans-serif" font-size="12" font-weight="bold" fill="#000" text-anchor="middle" textLength="6.3" lengthAdjust="spacingAndGlyphs">y</text>
<rect x="11" y="250" width="84" height="1" fill="#5a5a5a"/>
<rect x="11" y="226" width="84" height="1" fill="#fff"/>
<rect x="97" y="226" width="1680" height="24" fill="#fff"/>
<rect x="97" y="250" width="1675" height="1" fill="#c8c8c8"/>
<text x="53" y="267.2" font-family="'Liberation Sans', sans-serif" font-size="12" font-weight="bold" fill="#000" text-anchor="middle" textLength="7.6" lengthAdjust="spacingAndGlyphs">Y</text>
<rect x="11" y="275" width="84" height="1" fill="#5a5a5a"/>
<rect x="11" y="251" width="84" height="1" fill="#fff"/>
<rect x="97" y="251" width="1680" height="24" fill="#fff"/>
<rect x="97" y="275" width="1675" height="1" fill="#c8c8c8"/>
<text x="53" y="292.2" font-family="'Liberation Sans', sans-serif" font-size="12" font-weight="bold" fill="#000" text-anchor="middle" textLength="38.7" lengthAdjust="spacingAndGlyphs">Delta E</text>
<rect x="11" y="300" width="84" height="1" fill="#5a5a5a"/>
<rect x="11" y="276" width="84" height="1" fill="#fff"/>
<rect x="97" y="300" width="1675" height="1" fill="#c8c8c8"/>
<text x="53" y="317.2" font-family="'Liberation Sans', sans-serif" font-size="12" font-weight="bold" fill="#000" text-anchor="middle" textLength="42.5" lengthAdjust="spacingAndGlyphs">delta xy</text>
<rect x="11" y="325" width="84" height="1" fill="#5a5a5a"/>
<rect x="11" y="301" width="84" height="1" fill="#fff"/>
<rect x="97" y="301" width="1680" height="24" fill="#f0f0f0"/>
<rect x="97" y="325" width="1675" height="1" fill="#c8c8c8"/>
<text x="53" y="342.2" font-family="'Liberation Sans', sans-serif" font-size="12" font-weight="bold" fill="#000" text-anchor="middle" textLength="36.8" lengthAdjust="spacingAndGlyphs">delta L</text>
<rect x="11" y="350" width="84" height="1" fill="#5a5a5a"/>
<rect x="11" y="326" width="84" height="1" fill="#fff"/>
<rect x="97" y="326" width="1680" height="24" fill="#e0e0e0"/>
<rect x="97" y="350" width="1675" height="1" fill="#c8c8c8"/>
<rect x="97" y="351" width="1680" height="4" fill="#f0f0f0"/>
<rect x="97" y="179" width="78" height="21" fill="#000"/>
<rect x="175" y="179" width="1" height="21" fill="#b4b4b4"/>
<rect x="176" y="179" width="1" height="21" fill="#fff"/>
<text x="136.5" y="194" font-family="'Liberation Sans', sans-serif" font-size="12" font-weight="bold" fill="#fff" text-anchor="middle" textLength="30.5" lengthAdjust="spacingAndGlyphs">Black</text>
<rect x="175" y="201" width="1" height="154" fill="#c8c8c8"/>
<text x="173.3" y="217.5" font-family="'Liberation Sans', sans-serif" font-size="12" fill="#000" text-anchor="end" textLength="32.9" lengthAdjust="spacingAndGlyphs">0.3341</text>
<text x="173.3" y="242.5" font-family="'Liberation Sans', sans-serif" font-size="12" fill="#000" text-anchor="end" textLength="32.9" lengthAdjust="spacingAndGlyphs">0.3357</text>
<text x="173.3" y="267.5" font-family="'Liberation Sans', sans-serif" font-size="12" fill="#000" text-anchor="end" textLength="26.9" lengthAdjust="spacingAndGlyphs">0.000</text>
<rect x="97" y="276" width="79" height="24" fill="#aaffaa"/>
<text x="173.3" y="292.5" font-family="'Liberation Sans', sans-serif" font-size="12" font-weight="bold" fill="#000" text-anchor="end" textLength="15.9" lengthAdjust="spacingAndGlyphs">0.0</text>
<text x="173.3" y="317.5" font-family="'Liberation Sans', sans-serif" font-size="12" fill="#000" text-anchor="end" textLength="32.9" lengthAdjust="spacingAndGlyphs">0.0224</text>
<text x="173.3" y="342.5" font-family="'Liberation Sans', sans-serif" font-size="12" fill="#000" text-anchor="end" textLength="33.7" lengthAdjust="spacingAndGlyphs">+1.$ %</text>
<rect x="177" y="179" width="78" height="21" fill="#a0a0a0"/>
<rect x="255" y="179" width="1" height="21" fill="#b4b4b4"/>
<rect x="256" y="179" width="1" height="21" fill="#fff"/>
<text x="216.5" y="194" font-family="'Liberation Sans', sans-serif" font-size="12" font-weight="bold" fill="#ececec" text-anchor="middle" textLength="41.9" lengthAdjust="spacingAndGlyphs">Gray 35</text>
<rect x="255" y="201" width="1" height="154" fill="#c8c8c8"/>
<text x="253.3" y="217.5" font-family="'Liberation Sans', sans-serif" font-size="12" fill="#000" text-anchor="end" textLength="32.9" lengthAdjust="spacingAndGlyphs">0.3082</text>
<text x="253.3" y="242.5" font-family="'Liberation Sans', sans-serif" font-size="12" fill="#000" text-anchor="end" textLength="32.9" lengthAdjust="spacingAndGlyphs">0.3274</text>
<text x="253.3" y="267.5" font-family="'Liberation Sans', sans-serif" font-size="12" fill="#000" text-anchor="end" textLength="32.9" lengthAdjust="spacingAndGlyphs">94.276</text>
<rect x="177" y="276" width="79" height="24" fill="#aaffaa"/>
<text x="253.3" y="292.5" font-family="'Liberation Sans', sans-serif" font-size="12" font-weight="bold" fill="#000" text-anchor="end" textLength="15.9" lengthAdjust="spacingAndGlyphs">2.0</text>
<text x="253.3" y="317.5" font-family="'Liberation Sans', sans-serif" font-size="12" fill="#000" text-anchor="end" textLength="32.9" lengthAdjust="spacingAndGlyphs">0.0048</text>
<text x="253.3" y="342.5" font-family="'Liberation Sans', sans-serif" font-size="12" fill="#000" text-anchor="end" textLength="33.7" lengthAdjust="spacingAndGlyphs">+2.4 %</text>
<rect x="257" y="179" width="78" height="21" fill="#bababa"/>
<rect x="335" y="179" width="1" height="21" fill="#b4b4b4"/>
<rect x="336" y="179" width="1" height="21" fill="#fff"/>
<text x="296.5" y="194" font-family="'Liberation Sans', sans-serif" font-size="12" font-weight="bold" fill="#000" text-anchor="middle" textLength="41.9" lengthAdjust="spacingAndGlyphs">Gray 50</text>
<rect x="335" y="201" width="1" height="154" fill="#c8c8c8"/>
<text x="333.3" y="217.5" font-family="'Liberation Sans', sans-serif" font-size="12" fill="#000" text-anchor="end" textLength="32.9" lengthAdjust="spacingAndGlyphs">0.3084</text>
<text x="333.3" y="242.5" font-family="'Liberation Sans', sans-serif" font-size="12" fill="#000" text-anchor="end" textLength="32.9" lengthAdjust="spacingAndGlyphs">0.3268</text>
<text x="333.3" y="267.5" font-family="'Liberation Sans', sans-serif" font-size="12" fill="#000" text-anchor="end" textLength="38.8" lengthAdjust="spacingAndGlyphs">133.967</text>
<rect x="257" y="276" width="79" height="24" fill="#aaffaa"/>
<text x="333.3" y="292.5" font-family="'Liberation Sans', sans-serif" font-size="12" font-weight="bold" fill="#000" text-anchor="end" textLength="15.9" lengthAdjust="spacingAndGlyphs">1.9</text>
<text x="333.3" y="317.5" font-family="'Liberation Sans', sans-serif" font-size="12" fill="#000" text-anchor="end" textLength="32.9" lengthAdjust="spacingAndGlyphs">0.0048</text>
<text x="333.3" y="342.5" font-family="'Liberation Sans', sans-serif" font-size="12" fill="#000" text-anchor="end" textLength="33.7" lengthAdjust="spacingAndGlyphs">+1.7 %</text>
<rect x="337" y="179" width="78" height="21" fill="#d4d4d4"/>
<rect x="415" y="179" width="1" height="21" fill="#b4b4b4"/>
<rect x="416" y="179" width="1" height="21" fill="#fff"/>
<text x="376.5" y="194" font-family="'Liberation Sans', sans-serif" font-size="12" font-weight="bold" fill="#000" text-anchor="middle" textLength="41.9" lengthAdjust="spacingAndGlyphs">Gray 65</text>
<rect x="415" y="201" width="1" height="154" fill="#c8c8c8"/>
<text x="413.3" y="217.5" font-family="'Liberation Sans', sans-serif" font-size="12" fill="#000" text-anchor="end" textLength="32.9" lengthAdjust="spacingAndGlyphs">0.3086</text>
<text x="413.3" y="242.5" font-family="'Liberation Sans', sans-serif" font-size="12" fill="#000" text-anchor="end" textLength="32.9" lengthAdjust="spacingAndGlyphs">0.3275</text>
<text x="413.3" y="267.5" font-family="'Liberation Sans', sans-serif" font-size="12" fill="#000" text-anchor="end" textLength="38.8" lengthAdjust="spacingAndGlyphs">173.829</text>
<rect x="337" y="276" width="79" height="24" fill="#ffffaa"/>
<text x="413.3" y="292.5" font-family="'Liberation Sans', sans-serif" font-size="12" font-weight="bold" fill="#000" text-anchor="end" textLength="15.9" lengthAdjust="spacingAndGlyphs">2.1</text>
<text x="413.3" y="317.5" font-family="'Liberation Sans', sans-serif" font-size="12" fill="#000" text-anchor="end" textLength="32.9" lengthAdjust="spacingAndGlyphs">0.0044</text>
<text x="413.3" y="342.5" font-family="'Liberation Sans', sans-serif" font-size="12" fill="#000" text-anchor="end" textLength="33.7" lengthAdjust="spacingAndGlyphs">+1.9 %</text>
<rect x="417" y="179" width="78" height="21" fill="#e8e8e8"/>
<rect x="495" y="179" width="1" height="21" fill="#b4b4b4"/>
<rect x="496" y="179" width="1" height="21" fill="#fff"/>
<text x="456.5" y="194" font-family="'Liberation Sans', sans-serif" font-size="12" font-weight="bold" fill="#000" text-anchor="middle" textLength="41.9" lengthAdjust="spacingAndGlyphs">Gray 80</text>
<rect x="495" y="201" width="1" height="154" fill="#c8c8c8"/>
<text x="493.3" y="217.5" font-family="'Liberation Sans', sans-serif" font-size="12" fill="#000" text-anchor="end" textLength="32.9" lengthAdjust="spacingAndGlyphs">0.3088</text>
<text x="493.3" y="242.5" font-family="'Liberation Sans', sans-serif" font-size="12" fill="#000" text-anchor="end" textLength="32.9" lengthAdjust="spacingAndGlyphs">0.3282</text>
<text x="493.3" y="267.5" font-family="'Liberation Sans', sans-serif" font-size="12" fill="#000" text-anchor="end" textLength="38.0" lengthAdjust="spacingAndGlyphs">211.177</text>
<rect x="417" y="276" width="79" height="24" fill="#ffffaa"/>
<text x="493.3" y="292.5" font-family="'Liberation Sans', sans-serif" font-size="12" font-weight="bold" fill="#000" text-anchor="end" textLength="15.9" lengthAdjust="spacingAndGlyphs">2.4</text>
<text x="493.3" y="317.5" font-family="'Liberation Sans', sans-serif" font-size="12" fill="#000" text-anchor="end" textLength="32.9" lengthAdjust="spacingAndGlyphs">0.0040</text>
<text x="493.3" y="342.5" font-family="'Liberation Sans', sans-serif" font-size="12" fill="#000" text-anchor="end" textLength="33.7" lengthAdjust="spacingAndGlyphs">+1.5 %</text>
<rect x="497" y="179" width="78" height="21" fill="#fff"/>
<rect x="575" y="179" width="1" height="21" fill="#b4b4b4"/>
<rect x="576" y="179" width="1" height="21" fill="#fff"/>
<text x="536.5" y="194" font-family="'Liberation Sans', sans-serif" font-size="12" font-weight="bold" fill="#000" text-anchor="middle" textLength="31.1" lengthAdjust="spacingAndGlyphs">White</text>
<rect x="575" y="201" width="1" height="154" fill="#c8c8c8"/>
<text x="573.3" y="217.5" font-family="'Liberation Sans', sans-serif" font-size="12" fill="#000" text-anchor="end" textLength="32.9" lengthAdjust="spacingAndGlyphs">0.3086</text>
<text x="573.3" y="242.5" font-family="'Liberation Sans', sans-serif" font-size="12" fill="#000" text-anchor="end" textLength="32.9" lengthAdjust="spacingAndGlyphs">0.3282</text>
<text x="573.3" y="267.5" font-family="'Liberation Sans', sans-serif" font-size="12" fill="#000" text-anchor="end" textLength="38.8" lengthAdjust="spacingAndGlyphs">262.124</text>
<rect x="497" y="276" width="79" height="24" fill="#ffffaa"/>
<text x="573.3" y="292.5" font-family="'Liberation Sans', sans-serif" font-size="12" font-weight="bold" fill="#000" text-anchor="end" textLength="15.9" lengthAdjust="spacingAndGlyphs">2.8</text>
<text x="573.3" y="317.5" font-family="'Liberation Sans', sans-serif" font-size="12" fill="#000" text-anchor="end" textLength="32.9" lengthAdjust="spacingAndGlyphs">0.0042</text>
<text x="573.3" y="342.5" font-family="'Liberation Sans', sans-serif" font-size="12" fill="#000" text-anchor="end" textLength="31.0" lengthAdjust="spacingAndGlyphs">-0.2 %</text>
<rect x="577" y="179" width="78" height="21" fill="#735244"/>
<rect x="655" y="179" width="1" height="21" fill="#b4b4b4"/>
<rect x="656" y="179" width="1" height="21" fill="#fff"/>
<text x="616.5" y="194" font-family="'Liberation Sans', sans-serif" font-size="12" font-weight="bold" fill="#fff" text-anchor="middle" textLength="51.4" lengthAdjust="spacingAndGlyphs">Dark skin</text>
<rect x="655" y="201" width="1" height="154" fill="#c8c8c8"/>
<text x="653.3" y="217.5" font-family="'Liberation Sans', sans-serif" font-size="12" fill="#000" text-anchor="end" textLength="32.9" lengthAdjust="spacingAndGlyphs">0.3930</text>
<text x="653.3" y="242.5" font-family="'Liberation Sans', sans-serif" font-size="12" fill="#000" text-anchor="end" textLength="32.9" lengthAdjust="spacingAndGlyphs">0.3648</text>
<text x="653.3" y="267.5" font-family="'Liberation Sans', sans-serif" font-size="12" fill="#000" text-anchor="end" textLength="32.9" lengthAdjust="spacingAndGlyphs">26.029</text>
<rect x="577" y="276" width="79" height="24" fill="#ffffaa"/>
<text x="653.3" y="292.5" font-family="'Liberation Sans', sans-serif" font-size="12" font-weight="bold" fill="#000" text-anchor="end" textLength="15.9" lengthAdjust="spacingAndGlyphs">2.3</text>
<text x="653.3" y="317.5" font-family="'Liberation Sans', sans-serif" font-size="12" fill="#000" text-anchor="end" textLength="32.9" lengthAdjust="spacingAndGlyphs">0.0133</text>
<text x="653.3" y="342.5" font-family="'Liberation Sans', sans-serif" font-size="12" fill="#000" text-anchor="end" textLength="33.7" lengthAdjust="spacingAndGlyphs">+0.1 %</text>
<rect x="657" y="179" width="78" height="21" fill="#c29682"/>
<rect x="735" y="179" width="1" height="21" fill="#b4b4b4"/>
<rect x="736" y="179" width="1" height="21" fill="#fff"/>
<text x="696.5" y="194" font-family="'Liberation Sans', sans-serif" font-size="12" font-weight="bold" fill="#fff" text-anchor="middle" textLength="53.9" lengthAdjust="spacingAndGlyphs">Light skin</text>
<rect x="735" y="201" width="1" height="154" fill="#c8c8c8"/>
<text x="733.3" y="217.5" font-family="'Liberation Sans', sans-serif" font-size="12" fill="#000" text-anchor="end" textLength="32.9" lengthAdjust="spacingAndGlyphs">0.3683</text>
<text x="733.3" y="242.5" font-family="'Liberation Sans', sans-serif" font-size="12" fill="#000" text-anchor="end" textLength="32.9" lengthAdjust="spacingAndGlyphs">0.3546</text>
<text x="733.3" y="267.5" font-family="'Liberation Sans', sans-serif" font-size="12" fill="#000" text-anchor="end" textLength="32.9" lengthAdjust="spacingAndGlyphs">93.635</text>
<rect x="657" y="276" width="79" height="24" fill="#ffffaa"/>
<text x="733.3" y="292.5" font-family="'Liberation Sans', sans-serif" font-size="12" font-weight="bold" fill="#000" text-anchor="end" textLength="15.9" lengthAdjust="spacingAndGlyphs">2.1</text>
<text x="733.3" y="317.5" font-family="'Liberation Sans', sans-serif" font-size="12" fill="#000" text-anchor="end" textLength="32.9" lengthAdjust="spacingAndGlyphs">0.0099</text>
<text x="733.3" y="342.5" font-family="'Liberation Sans', sans-serif" font-size="12" fill="#000" text-anchor="end" textLength="33.7" lengthAdjust="spacingAndGlyphs">+0.3 %</text>
<rect x="737" y="179" width="78" height="21" fill="#5d7a9e"/>
<rect x="815" y="179" width="1" height="21" fill="#b4b4b4"/>
<rect x="816" y="179" width="1" height="21" fill="#fff"/>
<text x="776.5" y="194" font-family="'Liberation Sans', sans-serif" font-size="12" font-weight="bold" fill="#fff" text-anchor="middle" textLength="46.9" lengthAdjust="spacingAndGlyphs">Blue sky</text>
<rect x="815" y="201" width="1" height="154" fill="#c8c8c8"/>
<text x="813.3" y="217.5" font-family="'Liberation Sans', sans-serif" font-size="12" fill="#000" text-anchor="end" textLength="32.9" lengthAdjust="spacingAndGlyphs">0.2449</text>
<text x="813.3" y="242.5" font-family="'Liberation Sans', sans-serif" font-size="12" fill="#000" text-anchor="end" textLength="32.9" lengthAdjust="spacingAndGlyphs">0.2626</text>
<text x="813.3" y="267.5" font-family="'Liberation Sans', sans-serif" font-size="12" fill="#000" text-anchor="end" textLength="32.9" lengthAdjust="spacingAndGlyphs">51.978</text>
<rect x="737" y="276" width="79" height="24" fill="#aaffaa"/>
<text x="813.3" y="292.5" font-family="'Liberation Sans', sans-serif" font-size="12" font-weight="bold" fill="#000" text-anchor="end" textLength="15.9" lengthAdjust="spacingAndGlyphs">1.3</text>
<text x="813.3" y="317.5" font-family="'Liberation Sans', sans-serif" font-size="12" fill="#000" text-anchor="end" textLength="32.9" lengthAdjust="spacingAndGlyphs">0.0047</text>
<text x="813.3" y="342.5" font-family="'Liberation Sans', sans-serif" font-size="12" fill="#000" text-anchor="end" textLength="33.7" lengthAdjust="spacingAndGlyphs">+4.0 %</text>
<rect x="817" y="179" width="78" height="21" fill="#576c43"/>
<rect x="895" y="179" width="1" height="21" fill="#b4b4b4"/>
<rect x="896" y="179" width="1" height="21" fill="#fff"/>
<text x="856.5" y="194" font-family="'Liberation Sans', sans-serif" font-size="12" font-weight="bold" fill="#fff" text-anchor="middle" textLength="39.9" lengthAdjust="spacingAndGlyphs">Foliage</text>
<rect x="895" y="201" width="1" height="154" fill="#c8c8c8"/>
<text x="893.3" y="217.5" font-family="'Liberation Sans', sans-serif" font-size="12" fill="#000" text-anchor="end" textLength="32.9" lengthAdjust="spacingAndGlyphs">0.3369</text>
<text x="893.3" y="242.5" font-family="'Liberation Sans', sans-serif" font-size="12" fill="#000" text-anchor="end" textLength="32.9" lengthAdjust="spacingAndGlyphs">0.4289</text>
<text x="893.3" y="267.5" font-family="'Liberation Sans', sans-serif" font-size="12" fill="#000" text-anchor="end" textLength="32.9" lengthAdjust="spacingAndGlyphs">35.106</text>
<rect x="817" y="276" width="79" height="24" fill="#aaffaa"/>
<text x="893.3" y="292.5" font-family="'Liberation Sans', sans-serif" font-size="12" font-weight="bold" fill="#000" text-anchor="end" textLength="15.9" lengthAdjust="spacingAndGlyphs">0.8</text>
<text x="893.3" y="317.5" font-family="'Liberation Sans', sans-serif" font-size="12" fill="#000" text-anchor="end" textLength="32.9" lengthAdjust="spacingAndGlyphs">0.0055</text>
<text x="893.3" y="342.5" font-family="'Liberation Sans', sans-serif" font-size="12" fill="#000" text-anchor="end" textLength="33.7" lengthAdjust="spacingAndGlyphs">+1.9 %</text>
<rect x="897" y="179" width="78" height="21" fill="#8580b1"/>
<rect x="975" y="179" width="1" height="21" fill="#b4b4b4"/>
<rect x="976" y="179" width="1" height="21" fill="#fff"/>
<text x="936.5" y="194" font-family="'Liberation Sans', sans-serif" font-size="12" font-weight="bold" fill="#fff" text-anchor="middle" textLength="61.5" lengthAdjust="spacingAndGlyphs">Blue flower</text>
<rect x="975" y="201" width="1" height="154" fill="#c8c8c8"/>
<text x="973.3" y="217.5" font-family="'Liberation Sans', sans-serif" font-size="12" fill="#000" text-anchor="end" textLength="32.9" lengthAdjust="spacingAndGlyphs">0.2633</text>
<text x="973.3" y="242.5" font-family="'Liberation Sans', sans-serif" font-size="12" fill="#000" text-anchor="end" textLength="32.9" lengthAdjust="spacingAndGlyphs">0.2504</text>
<text x="973.3" y="267.5" font-family="'Liberation Sans', sans-serif" font-size="12" fill="#000" text-anchor="end" textLength="32.9" lengthAdjust="spacingAndGlyphs">64.141</text>
<rect x="897" y="276" width="79" height="24" fill="#aaffaa"/>
<text x="973.3" y="292.5" font-family="'Liberation Sans', sans-serif" font-size="12" font-weight="bold" fill="#000" text-anchor="end" textLength="15.9" lengthAdjust="spacingAndGlyphs">1.7</text>
<text x="973.3" y="317.5" font-family="'Liberation Sans', sans-serif" font-size="12" fill="#000" text-anchor="end" textLength="32.9" lengthAdjust="spacingAndGlyphs">0.0058</text>
<text x="973.3" y="342.5" font-family="'Liberation Sans', sans-serif" font-size="12" fill="#000" text-anchor="end" textLength="33.7" lengthAdjust="spacingAndGlyphs">+2.7 %</text>
<rect x="977" y="179" width="78" height="21" fill="#67bdaa"/>
<rect x="1055" y="179" width="1" height="21" fill="#b4b4b4"/>
<rect x="1056" y="179" width="1" height="21" fill="#fff"/>
<text x="1016.5" y="194" font-family="'Liberation Sans', sans-serif" font-size="12" font-weight="bold" fill="#000" text-anchor="middle" textLength="69.1" lengthAdjust="spacingAndGlyphs">Bluish green</text>
<rect x="1055" y="201" width="1" height="154" fill="#c8c8c8"/>
<text x="1053.3" y="217.5" font-family="'Liberation Sans', sans-serif" font-size="12" fill="#000" text-anchor="end" textLength="32.9" lengthAdjust="spacingAndGlyphs">0.2626</text>
<text x="1053.3" y="242.5" font-family="'Liberation Sans', sans-serif" font-size="12" fill="#000" text-anchor="end" textLength="32.9" lengthAdjust="spacingAndGlyphs">0.3604</text>
<text x="1053.3" y="267.5" font-family="'Liberation Sans', sans-serif" font-size="12" fill="#000" text-anchor="end" textLength="38.0" lengthAdjust="spacingAndGlyphs">114.821</text>
<rect x="977" y="276" width="79" height="24" fill="#aaffaa"/>
<text x="1053.3" y="292.5" font-family="'Liberation Sans', sans-serif" font-size="12" font-weight="bold" fill="#000" text-anchor="end" textLength="15.9" lengthAdjust="spacingAndGlyphs">0.7</text>
<text x="1053.3" y="317.5" font-family="'Liberation Sans', sans-serif" font-size="12" fill="#000" text-anchor="end" textLength="32.9" lengthAdjust="spacingAndGlyphs">0.0016</text>
<text x="1053.3" y="342.5" font-family="'Liberation Sans', sans-serif" font-size="12" fill="#000" text-anchor="end" textLength="33.7" lengthAdjust="spacingAndGlyphs">+3.1 %</text>
<rect x="1057" y="179" width="78" height="21" fill="#d67e2c"/>
<rect x="1135" y="179" width="1" height="21" fill="#b4b4b4"/>
<rect x="1136" y="179" width="1" height="21" fill="#fff"/>
<text x="1096.5" y="194" font-family="'Liberation Sans', sans-serif" font-size="12" font-weight="bold" fill="#fff" text-anchor="middle" textLength="40.0" lengthAdjust="spacingAndGlyphs">Orange</text>
<rect x="1135" y="201" width="1" height="154" fill="#c8c8c8"/>
<text x="1133.3" y="217.5" font-family="'Liberation Sans', sans-serif" font-size="12" fill="#000" text-anchor="end" textLength="32.9" lengthAdjust="spacingAndGlyphs">0.5053</text>
<text x="1133.3" y="242.5" font-family="'Liberation Sans', sans-serif" font-size="12" fill="#000" text-anchor="end" textLength="32.9" lengthAdjust="spacingAndGlyphs">0.4137</text>
<text x="1133.3" y="267.5" font-family="'Liberation Sans', sans-serif" font-size="12" fill="#000" text-anchor="end" textLength="32.9" lengthAdjust="spacingAndGlyphs">71.169</text>
<rect x="1057" y="276" width="79" height="24" fill="#ffffaa"/>
<text x="1133.3" y="292.5" font-family="'Liberation Sans', sans-serif" font-size="12" font-weight="bold" fill="#000" text-anchor="end" textLength="15.9" lengthAdjust="spacingAndGlyphs">2.2</text>
<text x="1133.3" y="317.5" font-family="'Liberation Sans', sans-serif" font-size="12" fill="#000" text-anchor="end" textLength="32.9" lengthAdjust="spacingAndGlyphs">0.0103</text>
<text x="1133.3" y="342.5" font-family="'Liberation Sans', sans-serif" font-size="12" fill="#000" text-anchor="end" textLength="31.0" lengthAdjust="spacingAndGlyphs">-5.2 %</text>
<rect x="1137" y="179" width="78" height="21" fill="#4a5aa5"/>
<rect x="1215" y="179" width="1" height="21" fill="#b4b4b4"/>
<rect x="1216" y="179" width="1" height="21" fill="#fff"/>
<text x="1176.5" y="194" font-family="'Liberation Sans', sans-serif" font-size="12" font-weight="bold" fill="#fff" text-anchor="middle" textLength="72.3" lengthAdjust="spacingAndGlyphs">Purplish blue</text>
<rect x="1215" y="201" width="1" height="154" fill="#c8c8c8"/>
<text x="1213.3" y="217.5" font-family="'Liberation Sans', sans-serif" font-size="12" fill="#000" text-anchor="end" textLength="32.9" lengthAdjust="spacingAndGlyphs">0.2127</text>
<text x="1213.3" y="242.5" font-family="'Liberation Sans', sans-serif" font-size="12" fill="#000" text-anchor="end" textLength="32.9" lengthAdjust="spacingAndGlyphs">0.1902</text>
<text x="1213.3" y="267.5" font-family="'Liberation Sans', sans-serif" font-size="12" fill="#000" text-anchor="end" textLength="32.9" lengthAdjust="spacingAndGlyphs">32.463</text>
<rect x="1137" y="276" width="79" height="24" fill="#aaffaa"/>
<text x="1213.3" y="292.5" font-family="'Liberation Sans', sans-serif" font-size="12" font-weight="bold" fill="#000" text-anchor="end" textLength="15.9" lengthAdjust="spacingAndGlyphs">1.4</text>
<text x="1213.3" y="317.5" font-family="'Liberation Sans', sans-serif" font-size="12" fill="#000" text-anchor="end" textLength="32.9" lengthAdjust="spacingAndGlyphs">0.0022</text>
<text x="1213.3" y="342.5" font-family="'Liberation Sans', sans-serif" font-size="12" fill="#000" text-anchor="end" textLength="33.7" lengthAdjust="spacingAndGlyphs">+5.6 %</text>
<rect x="1217" y="179" width="78" height="21" fill="#c5545f"/>
<rect x="1295" y="179" width="1" height="21" fill="#b4b4b4"/>
<rect x="1296" y="179" width="1" height="21" fill="#fff"/>
<text x="1256.5" y="194" font-family="'Liberation Sans', sans-serif" font-size="12" font-weight="bold" fill="#fff" text-anchor="middle" textLength="50.7" lengthAdjust="spacingAndGlyphs">Moderate</text>
<rect x="1295" y="201" width="1" height="154" fill="#c8c8c8"/>
<text x="1293.3" y="217.5" font-family="'Liberation Sans', sans-serif" font-size="12" fill="#000" text-anchor="end" textLength="32.9" lengthAdjust="spacingAndGlyphs">0.4455</text>
<text x="1293.3" y="242.5" font-family="'Liberation Sans', sans-serif" font-size="12" fill="#000" text-anchor="end" textLength="32.9" lengthAdjust="spacingAndGlyphs">0.3076</text>
<text x="1293.3" y="267.5" font-family="'Liberation Sans', sans-serif" font-size="12" fill="#000" text-anchor="end" textLength="32.9" lengthAdjust="spacingAndGlyphs">47.780</text>
<rect x="1217" y="276" width="79" height="24" fill="#ffffaa"/>
<text x="1293.3" y="292.5" font-family="'Liberation Sans', sans-serif" font-size="12" font-weight="bold" fill="#000" text-anchor="end" textLength="15.9" lengthAdjust="spacingAndGlyphs">2.2</text>
<text x="1293.3" y="317.5" font-family="'Liberation Sans', sans-serif" font-size="12" fill="#000" text-anchor="end" textLength="32.9" lengthAdjust="spacingAndGlyphs">0.0191</text>
<text x="1293.3" y="342.5" font-family="'Liberation Sans', sans-serif" font-size="12" fill="#000" text-anchor="end" textLength="31.0" lengthAdjust="spacingAndGlyphs">-2.2 %</text>
<rect x="1297" y="179" width="78" height="21" fill="#5e3c6c"/>
<rect x="1375" y="179" width="1" height="21" fill="#b4b4b4"/>
<rect x="1376" y="179" width="1" height="21" fill="#fff"/>
<text x="1336.5" y="194" font-family="'Liberation Sans', sans-serif" font-size="12" font-weight="bold" fill="#fff" text-anchor="middle" textLength="35.5" lengthAdjust="spacingAndGlyphs">Purple</text>
<rect x="1375" y="201" width="1" height="154" fill="#c8c8c8"/>
<text x="1373.3" y="217.5" font-family="'Liberation Sans', sans-serif" font-size="12" fill="#000" text-anchor="end" textLength="32.9" lengthAdjust="spacingAndGlyphs">0.2775</text>
<text x="1373.3" y="242.5" font-family="'Liberation Sans', sans-serif" font-size="12" fill="#000" text-anchor="end" textLength="32.9" lengthAdjust="spacingAndGlyphs">0.2131</text>
<text x="1373.3" y="267.5" font-family="'Liberation Sans', sans-serif" font-size="12" fill="#000" text-anchor="end" textLength="32.9" lengthAdjust="spacingAndGlyphs">17.147</text>
<rect x="1297" y="276" width="79" height="24" fill="#aaffaa"/>
<text x="1373.3" y="292.5" font-family="'Liberation Sans', sans-serif" font-size="12" font-weight="bold" fill="#000" text-anchor="end" textLength="15.9" lengthAdjust="spacingAndGlyphs">1.6</text>
<text x="1373.3" y="317.5" font-family="'Liberation Sans', sans-serif" font-size="12" fill="#000" text-anchor="end" textLength="32.1" lengthAdjust="spacingAndGlyphs">0.0112</text>
<text x="1373.3" y="342.5" font-family="'Liberation Sans', sans-serif" font-size="12" fill="#000" text-anchor="end" textLength="33.7" lengthAdjust="spacingAndGlyphs">+0.7 %</text>
<rect x="1377" y="179" width="78" height="21" fill="#9dbc40"/>
<rect x="1455" y="179" width="1" height="21" fill="#b4b4b4"/>
<rect x="1456" y="179" width="1" height="21" fill="#fff"/>
<text x="1416.5" y="194" font-family="'Liberation Sans', sans-serif" font-size="12" font-weight="bold" fill="#000" text-anchor="middle" textLength="69.8" lengthAdjust="spacingAndGlyphs">Yellow green</text>
<rect x="1455" y="201" width="1" height="154" fill="#c8c8c8"/>
<text x="1453.3" y="217.5" font-family="'Liberation Sans', sans-serif" font-size="12" fill="#000" text-anchor="end" textLength="32.9" lengthAdjust="spacingAndGlyphs">0.3723</text>
<text x="1453.3" y="242.5" font-family="'Liberation Sans', sans-serif" font-size="12" fill="#000" text-anchor="end" textLength="32.9" lengthAdjust="spacingAndGlyphs">0.4960</text>
<text x="1453.3" y="267.5" font-family="'Liberation Sans', sans-serif" font-size="12" fill="#000" text-anchor="end" textLength="38.0" lengthAdjust="spacingAndGlyphs">113.898</text>
<rect x="1377" y="276" width="79" height="24" fill="#aaffaa"/>
<text x="1453.3" y="292.5" font-family="'Liberation Sans', sans-serif" font-size="12" font-weight="bold" fill="#000" text-anchor="end" textLength="15.9" lengthAdjust="spacingAndGlyphs">1.0</text>
<text x="1453.3" y="317.5" font-family="'Liberation Sans', sans-serif" font-size="12" fill="#000" text-anchor="end" textLength="32.9" lengthAdjust="spacingAndGlyphs">0.0051</text>
<text x="1453.3" y="342.5" font-family="'Liberation Sans', sans-serif" font-size="12" fill="#000" text-anchor="end" textLength="31.0" lengthAdjust="spacingAndGlyphs">-0.7 %</text>
<rect x="1457" y="179" width="78" height="21" fill="#e6a02e"/>
<rect x="1535" y="179" width="1" height="21" fill="#b4b4b4"/>
<rect x="1536" y="179" width="1" height="21" fill="#fff"/>
<text x="1496.5" y="194" font-family="'Liberation Sans', sans-serif" font-size="12" font-weight="bold" fill="#000" text-anchor="middle" textLength="40.0" lengthAdjust="spacingAndGlyphs">Orange</text>
<rect x="1535" y="201" width="1" height="154" fill="#c8c8c8"/>
<text x="1533.3" y="217.5" font-family="'Liberation Sans', sans-serif" font-size="12" fill="#000" text-anchor="end" textLength="32.9" lengthAdjust="spacingAndGlyphs">0.4665</text>
<text x="1533.3" y="242.5" font-family="'Liberation Sans', sans-serif" font-size="12" fill="#000" text-anchor="end" textLength="32.9" lengthAdjust="spacingAndGlyphs">0.4461</text>
<text x="1533.3" y="267.5" font-family="'Liberation Sans', sans-serif" font-size="12" fill="#000" text-anchor="end" textLength="38.8" lengthAdjust="spacingAndGlyphs">106.642</text>
<rect x="1457" y="276" width="79" height="24" fill="#ffffaa"/>
<text x="1533.3" y="292.5" font-family="'Liberation Sans', sans-serif" font-size="12" font-weight="bold" fill="#000" text-anchor="end" textLength="15.9" lengthAdjust="spacingAndGlyphs">2.4</text>
<text x="1533.3" y="317.5" font-family="'Liberation Sans', sans-serif" font-size="12" fill="#000" text-anchor="end" textLength="32.9" lengthAdjust="spacingAndGlyphs">0.0091</text>
<text x="1533.3" y="342.5" font-family="'Liberation Sans', sans-serif" font-size="12" fill="#000" text-anchor="end" textLength="31.0" lengthAdjust="spacingAndGlyphs">-5.4 %</text>
<rect x="1537" y="179" width="78" height="21" fill="#343d94"/>
<rect x="1615" y="179" width="1" height="21" fill="#b4b4b4"/>
<rect x="1616" y="179" width="1" height="21" fill="#fff"/>
<text x="1576.5" y="194" font-family="'Liberation Sans', sans-serif" font-size="12" font-weight="bold" fill="#fff" text-anchor="middle" textLength="24.7" lengthAdjust="spacingAndGlyphs">Blue</text>
<rect x="1615" y="201" width="1" height="154" fill="#c8c8c8"/>
<text x="1613.3" y="217.5" font-family="'Liberation Sans', sans-serif" font-size="12" fill="#000" text-anchor="end" textLength="32.9" lengthAdjust="spacingAndGlyphs">0.1876</text>
<text x="1613.3" y="242.5" font-family="'Liberation Sans', sans-serif" font-size="12" fill="#000" text-anchor="end" textLength="32.9" lengthAdjust="spacingAndGlyphs">0.1373</text>
<text x="1613.3" y="267.5" font-family="'Liberation Sans', sans-serif" font-size="12" fill="#000" text-anchor="end" textLength="32.9" lengthAdjust="spacingAndGlyphs">17.381</text>
<rect x="1537" y="276" width="79" height="24" fill="#aaffaa"/>
<text x="1613.3" y="292.5" font-family="'Liberation Sans', sans-serif" font-size="12" font-weight="bold" fill="#000" text-anchor="end" textLength="15.9" lengthAdjust="spacingAndGlyphs">1.4</text>
<text x="1613.3" y="317.5" font-family="'Liberation Sans', sans-serif" font-size="12" fill="#000" text-anchor="end" textLength="32.9" lengthAdjust="spacingAndGlyphs">0.0025</text>
<text x="1613.3" y="342.5" font-family="'Liberation Sans', sans-serif" font-size="12" fill="#000" text-anchor="end" textLength="33.7" lengthAdjust="spacingAndGlyphs">+9.7 %</text>
<rect x="1617" y="179" width="78" height="21" fill="#469449"/>
<rect x="1695" y="179" width="1" height="21" fill="#b4b4b4"/>
<rect x="1696" y="179" width="1" height="21" fill="#fff"/>
<text x="1656.5" y="194" font-family="'Liberation Sans', sans-serif" font-size="12" font-weight="bold" fill="#fff" text-anchor="middle" textLength="33.0" lengthAdjust="spacingAndGlyphs">Green</text>
<rect x="1695" y="201" width="1" height="154" fill="#c8c8c8"/>
<text x="1693.3" y="217.5" font-family="'Liberation Sans', sans-serif" font-size="12" fill="#000" text-anchor="end" textLength="32.9" lengthAdjust="spacingAndGlyphs">0.3057</text>
<text x="1693.3" y="242.5" font-family="'Liberation Sans', sans-serif" font-size="12" fill="#000" text-anchor="end" textLength="32.9" lengthAdjust="spacingAndGlyphs">0.4920</text>
<text x="1693.3" y="267.5" font-family="'Liberation Sans', sans-serif" font-size="12" fill="#000" text-anchor="end" textLength="32.9" lengthAdjust="spacingAndGlyphs">63.086</text>
<rect x="1617" y="276" width="79" height="24" fill="#aaffaa"/>
<text x="1693.3" y="292.5" font-family="'Liberation Sans', sans-serif" font-size="12" font-weight="bold" fill="#000" text-anchor="end" textLength="15.9" lengthAdjust="spacingAndGlyphs">0.7</text>
<text x="1693.3" y="317.5" font-family="'Liberation Sans', sans-serif" font-size="12" fill="#000" text-anchor="end" textLength="32.9" lengthAdjust="spacingAndGlyphs">0.0029</text>
<text x="1693.3" y="342.5" font-family="'Liberation Sans', sans-serif" font-size="12" fill="#000" text-anchor="end" textLength="33.7" lengthAdjust="spacingAndGlyphs">+3.2 %</text>
<rect x="1697" y="179" width="78" height="21" fill="#b03038"/>
<rect x="1775" y="179" width="1" height="21" fill="#b4b4b4"/>
<rect x="1776" y="179" width="1" height="21" fill="#fff"/>
<text x="1736.5" y="194" font-family="'Liberation Sans', sans-serif" font-size="12" font-weight="bold" fill="#fff" text-anchor="middle" textLength="21.6" lengthAdjust="spacingAndGlyphs">Red</text>
<rect x="1775" y="201" width="1" height="154" fill="#c8c8c8"/>
<text x="1773.3" y="217.5" font-family="'Liberation Sans', sans-serif" font-size="12" fill="#000" text-anchor="end" textLength="32.9" lengthAdjust="spacingAndGlyphs">0.5377</text>
<text x="1773.3" y="242.5" font-family="'Liberation Sans', sans-serif" font-size="12" fill="#000" text-anchor="end" textLength="32.9" lengthAdjust="spacingAndGlyphs">0.3174</text>
<text x="1773.3" y="267.5" font-family="'Liberation Sans', sans-serif" font-size="12" fill="#000" text-anchor="end" textLength="32.9" lengthAdjust="spacingAndGlyphs">28.095</text>
<rect x="1697" y="276" width="79" height="24" fill="#aaffaa"/>
<text x="1773.3" y="292.5" font-family="'Liberation Sans', sans-serif" font-size="12" font-weight="bold" fill="#000" text-anchor="end" textLength="15.9" lengthAdjust="spacingAndGlyphs">1.8</text>
<text x="1773.3" y="317.5" font-family="'Liberation Sans', sans-serif" font-size="12" fill="#000" text-anchor="end" textLength="32.9" lengthAdjust="spacingAndGlyphs">0.0104</text>
<text x="1773.3" y="342.5" font-family="'Liberation Sans', sans-serif" font-size="12" fill="#000" text-anchor="end" textLength="31.0" lengthAdjust="spacingAndGlyphs">-7.5 %</text>
</g>
<rect x="1771" y="179" width="18" height="176" fill="#f0f0f0"/>
<rect x="1779" y="195" width="2" height="128" fill="#868686"/>
<rect x="11" y="355" width="1778" height="17" fill="#f0f0f0"/>
<rect x="27" y="363" width="1509" height="2" fill="#868686"/>
<rect x="1812" y="159" width="85" height="222" fill="#ebebeb"/>
<rect x="1812" y="159" width="85" height="105" fill="#fff"/>
<rect x="1809" y="159" width="2" height="221" fill="#fff"/>
<rect x="1811" y="159" width="1" height="221" fill="#707070"/>
<rect x="1814" y="161" width="82" height="101" fill="#fff"/>
<path d="M1815 167Q1815 162 1820 162H1890Q1895 162 1895 167V261H1815Z" fill="#808080" shape-rendering="geometricPrecision"/>
<path d="M1815 162h6l-6 6zM1895 162h-6l6 6z" fill="#808080" shape-rendering="geometricPrecision"/>
<path d="M1816 168Q1816 163 1821 163H1889Q1894 163 1894 168V180H1816Z" fill="url(#gHdr)" shape-rendering="geometricPrecision"/>
<rect x="1816" y="180" width="78" height="1" fill="#9c9c9c"/>
<rect x="1816" y="181" width="78" height="79" fill="#ebebeb"/>
<text x="1822.8" y="176" font-family="'DejaVu Sans', sans-serif" font-size="11" font-weight="bold" fill="#464646" textLength="46.6" lengthAdjust="spacingAndGlyphs">Display</text>
<rect x="1816" y="163" width="1" height="97" fill="#808080"/>
<rect x="1893" y="163" width="1" height="97" fill="#808080"/>
<rect x="1815" y="259" width="80" height="1" fill="#808080"/>
<rect x="1822" y="180" width="66" height="15" fill="#f0f0f0"/>
<g shape-rendering="geometricPrecision"><circle cx="1828.7" cy="187.2" r="5.5" fill="#f0f0f0"/><path d="M1824.5 191.39999999999998A6 6 0 0 1 1832.9 183.0" stroke="#696969" stroke-width="1.2" fill="none"/><path d="M1824.5 191.39999999999998A6 6 0 0 0 1832.9 183.0" stroke="#fff" stroke-width="1.2" fill="none"/><path d="M1825.4 190.5A4.7 4.7 0 0 1 1832.0 183.89999999999998" stroke="#a0a0a0" stroke-width="1" fill="none"/></g>
<text x="1841.7" y="192.2" font-family="'DejaVu Sans', sans-serif" font-size="12.5" fill="#a0a0a0" textLength="43.0" lengthAdjust="spacingAndGlyphs">Sensor</text>
<rect x="1822" y="196" width="66" height="15" fill="#f0f0f0"/>
<g shape-rendering="geometricPrecision"><circle cx="1828.7" cy="203" r="5.5" fill="#fff"/><path d="M1824.5 207.2A6 6 0 0 1 1832.9 198.8" stroke="#696969" stroke-width="1.2" fill="none"/><path d="M1824.5 207.2A6 6 0 0 0 1832.9 198.8" stroke="#fff" stroke-width="1.2" fill="none"/><path d="M1825.4 206.3A4.7 4.7 0 0 1 1832.0 199.7" stroke="#a0a0a0" stroke-width="1" fill="none"/></g>
<text x="1841.7" y="208.3" font-family="'DejaVu Sans', sans-serif" font-size="12.5" fill="#000" textLength="24.5" lengthAdjust="spacingAndGlyphs">RGB</text>
<rect x="1822" y="212" width="66" height="15" fill="#f0f0f0"/>
<g shape-rendering="geometricPrecision"><circle cx="1828.7" cy="219.2" r="5.5" fill="#fff"/><path d="M1824.5 223.39999999999998A6 6 0 0 1 1832.9 215.0" stroke="#696969" stroke-width="1.2" fill="none"/><path d="M1824.5 223.39999999999998A6 6 0 0 0 1832.9 215.0" stroke="#fff" stroke-width="1.2" fill="none"/><path d="M1825.4 222.5A4.7 4.7 0 0 1 1832.0 215.89999999999998" stroke="#a0a0a0" stroke-width="1" fill="none"/></g>
<text x="1841.7" y="224.4" font-family="'DejaVu Sans', sans-serif" font-size="12.5" fill="#000" textLength="22.5" lengthAdjust="spacingAndGlyphs">XYZ</text>
<rect x="1822" y="228" width="66" height="15" fill="#f0f0f0"/>
<g shape-rendering="geometricPrecision"><circle cx="1828.7" cy="235" r="5.5" fill="#fff"/><path d="M1824.5 239.2A6 6 0 0 1 1832.9 230.8" stroke="#696969" stroke-width="1.2" fill="none"/><path d="M1824.5 239.2A6 6 0 0 0 1832.9 230.8" stroke="#fff" stroke-width="1.2" fill="none"/><path d="M1825.4 238.3A4.7 4.7 0 0 1 1832.0 231.7" stroke="#a0a0a0" stroke-width="1" fill="none"/></g>
<text x="1841.7" y="240" font-family="'DejaVu Sans', sans-serif" font-size="12.5" fill="#000" textLength="20.5" lengthAdjust="spacingAndGlyphs">xyz</text>
<rect x="1822" y="243" width="66" height="13" fill="#f0f0f0"/>
<g shape-rendering="geometricPrecision"><circle cx="1828.7" cy="250" r="5.5" fill="#fff"/><path d="M1824.5 254.2A6 6 0 0 1 1832.9 245.8" stroke="#696969" stroke-width="1.2" fill="none"/><path d="M1824.5 254.2A6 6 0 0 0 1832.9 245.8" stroke="#fff" stroke-width="1.2" fill="none"/><path d="M1825.4 253.3A4.7 4.7 0 0 1 1832.0 246.7" stroke="#a0a0a0" stroke-width="1" fill="none"/><circle cx="1828.7" cy="250" r="2" fill="#000"/></g>
<text x="1841.7" y="254.4" font-family="'DejaVu Sans', sans-serif" font-size="12.5" fill="#000" textLength="20.5" lengthAdjust="spacingAndGlyphs">xyY</text>
<rect x="1812" y="264" width="84" height="30" fill="#ebebeb"/>
<rect x="1812" y="264" width="83" height="1" fill="#fff"/>
<rect x="1812" y="264" width="1" height="29" fill="#fff"/>
<rect x="1812" y="293" width="84" height="1" fill="#808080"/>
<rect x="1895" y="264" width="1" height="30" fill="#808080"/>
<rect x="1813" y="292" width="82" height="1" fill="#c0c0c0"/>
<rect x="1894" y="265" width="1" height="28" fill="#c0c0c0"/>
<text x="1863" y="284.6" font-family="'DejaVu Sans', sans-serif" font-size="12.5" fill="#000" textLength="16.6" lengthAdjust="spacingAndGlyphs">Go</text>
<rect x="1812" y="294" width="84" height="30" fill="#ebebeb"/>
<rect x="1812" y="294" width="83" height="1" fill="#fff"/>
<rect x="1812" y="294" width="1" height="29" fill="#fff"/>
<rect x="1812" y="323" width="84" height="1" fill="#808080"/>
<rect x="1895" y="294" width="1" height="30" fill="#808080"/>
<rect x="1813" y="322" width="82" height="1" fill="#c0c0c0"/>
<rect x="1894" y="295" width="1" height="28" fill="#c0c0c0"/>
<text x="1851.4" y="314" font-family="'DejaVu Sans', sans-serif" font-size="12.5" fill="#000" textLength="40.6" lengthAdjust="spacingAndGlyphs">Delete</text>
<rect x="1812" y="324" width="84" height="30" fill="#ebebeb"/>
<rect x="1812" y="324" width="83" height="1" fill="#fff"/>
<rect x="1812" y="324" width="1" height="29" fill="#fff"/>
<rect x="1812" y="353" width="84" height="1" fill="#808080"/>
<rect x="1895" y="324" width="1" height="30" fill="#808080"/>
<rect x="1813" y="352" width="82" height="1" fill="#c0c0c0"/>
<rect x="1894" y="325" width="1" height="28" fill="#c0c0c0"/>
<text x="1858" y="343.8" font-family="'DejaVu Sans', sans-serif" font-size="12.5" fill="#000" textLength="27.0" lengthAdjust="spacingAndGlyphs">Refs</text>
<rect x="1812" y="354" width="89" height="29" fill="#888"/>
<rect x="1896" y="264" width="5" height="90" fill="#888"/>
<rect x="1818" y="358" width="56" height="18" fill="#ebebeb"/>
<rect x="1819" y="360" width="12" height="12" fill="#fff"/>
<rect x="1819" y="360" width="12" height="1" fill="#696969"/>
<rect x="1819" y="360" width="1" height="12" fill="#696969"/>
<rect x="1820" y="361" width="10" height="1" fill="#a0a0a0"/>
<rect x="1820" y="361" width="1" height="10" fill="#a0a0a0"/>
<rect x="1819" y="371" width="12" height="1" fill="#fff"/>
<rect x="1830" y="360" width="1" height="12" fill="#fff"/>
<rect x="1820" y="370" width="10" height="1" fill="#e3e3e3"/>
<rect x="1829" y="361" width="1" height="10" fill="#e3e3e3"/>
<text x="1837" y="370.4" font-family="'DejaVu Sans', sans-serif" font-size="12.5" fill="#000" textLength="24.0" lengthAdjust="spacingAndGlyphs">Edit</text>
<g shape-rendering="geometricPrecision">
<path d="M1818 268L1826 266.5L1831 269L1838 267L1850 271V293L1838 290L1831 292.5L1826 290L1818 291.5Z" fill="#8c8c8c" stroke="#2a2a2a" stroke-width="0.8"/>
<rect x="1818.5" y="268" width="1.6" height="1.6" fill="#222"/><rect x="1847.8" y="270" width="1.6" height="1.6" fill="#222"/>
<rect x="1818.5" y="271" width="1.6" height="1.6" fill="#222"/><rect x="1847.8" y="273" width="1.6" height="1.6" fill="#222"/>
<rect x="1818.5" y="274" width="1.6" height="1.6" fill="#222"/><rect x="1847.8" y="276" width="1.6" height="1.6" fill="#222"/>
<rect x="1818.5" y="277" width="1.6" height="1.6" fill="#222"/><rect x="1847.8" y="279" width="1.6" height="1.6" fill="#222"/>
<rect x="1818.5" y="280" width="1.6" height="1.6" fill="#222"/><rect x="1847.8" y="282" width="1.6" height="1.6" fill="#222"/>
<rect x="1818.5" y="283" width="1.6" height="1.6" fill="#222"/><rect x="1847.8" y="285" width="1.6" height="1.6" fill="#222"/>
<rect x="1818.5" y="286" width="1.6" height="1.6" fill="#222"/><rect x="1847.8" y="288" width="1.6" height="1.6" fill="#222"/>
<rect x="1818.5" y="289" width="1.6" height="1.6" fill="#222"/><rect x="1847.8" y="291" width="1.6" height="1.6" fill="#222"/>
<path d="M1821 272Q1824 270 1826 273Q1828 276 1825 277Q1821 278 1822 281Q1824 284 1827 282" fill="none" stroke="#d8d8d8" stroke-width="1.6"/>
<path d="M1842 274Q1845 273 1846 276Q1846 279 1843 279Q1840 280 1841 283Q1843 285 1846 284" fill="none" stroke="#d8d8d8" stroke-width="1.6"/>
<path d="M1826 267.5L1838 266.5L1841 273L1829 276Z" fill="#e01010" stroke="#400" stroke-width="0.6"/>
<path d="M1829 276.5L1840 273.5L1842 284L1832 287Z" fill="#18b040" stroke="#203060" stroke-width="1.4"/>
<path d="M1832 288L1842 284.5L1848 288L1838 293H1834Z" fill="#4890f0" stroke="#102080" stroke-width="1.4"/>
<path d="M1819.5 300Q1832 295.5 1846.5 297L1844 318Q1834 323 1824.5 320.5Z" fill="url(#gBin)" stroke="#9cc4ea" stroke-width="0.8"/>
<path d="M1819.5 300Q1832 295.5 1846.5 297Q1834 299 1819.5 300Z" fill="#e8f4ff"/>
<path d="M1836.5 303.5A5 5 0 0 1 1842 308.5L1843.8 308.5L1840.8 312L1838 308.5L1839.8 308.5A3 3 0 0 0 1836.5 305.8ZM1839.5 316.5A5 5 0 0 1 1832.5 311.5L1830.7 311.5L1833.7 308L1836.5 311.5L1834.7 311.5A3 3 0 0 0 1839.5 314.2Z" fill="#18a838"/>
<path d="M1818 351V340L1821 337L1823 332L1825 335L1828 337L1831 338L1834 334L1836 330H1838L1840 333L1843 336L1846 337L1848 339H1850V351Z" fill="#ffff00"/>
<rect x="1818" y="341.5" width="2" height="9.5" fill="#ff00ff"/>
<rect x="1820" y="334.5" width="6" height="16.5" fill="#0000ff"/>
<rect x="1826" y="339.5" width="4" height="11.5" fill="#00ffff"/>
<rect x="1830" y="340.5" width="4" height="10.5" fill="#00ff00"/>
<rect x="1834" y="331.5" width="6" height="19.5" fill="#ffff00"/>
<rect x="1840" y="335.5" width="4" height="15.5" fill="#800000"/>
<rect x="1844" y="339.5" width="6" height="11.5" fill="#ff0000"/>
</g>
<rect x="2" y="380" width="1899" height="1" fill="#a0a0a0"/>
<rect x="2" y="381" width="1899" height="3" fill="#707070"/>
<rect x="2" y="384" width="1899" height="3" fill="#fff"/>
<rect x="4" y="386" width="380" height="630" fill="#fff"/>
<path d="M5 392Q5 387 10 387H378Q383 387 383 392V1015H5Z" fill="#7a7a7a" shape-rendering="geometricPrecision"/>
<path d="M5 387h6l-6 6zM383 387h-6l6 6z" fill="#7a7a7a" shape-rendering="geometricPrecision"/>
<path d="M6 393Q6 388 11 388H377Q382 388 382 393V405H6Z" fill="url(#gHdr)" shape-rendering="geometricPrecision"/>
<rect x="6" y="405" width="376" height="1" fill="#9c9c9c"/>
<rect x="6" y="406" width="376" height="608" fill="#ebebeb"/>
<text x="12" y="401" font-family="'DejaVu Sans', sans-serif" font-size="11" font-weight="bold" fill="#464646" textLength="93.0" lengthAdjust="spacingAndGlyphs">Selected color</text>
<rect x="385" y="384" width="3" height="634" fill="#707070"/>
<rect x="384" y="384" width="1" height="633" fill="#c8c8c8"/>
<rect x="388" y="384" width="3" height="634" fill="#fff"/>
<rect x="18" y="409" width="109" height="14" fill="#f0f0f0"/>
<text x="18" y="420.6" font-family="'DejaVu Sans', sans-serif" font-size="12.5" fill="#000" textLength="69.0" lengthAdjust="spacingAndGlyphs">RGB Levels</text>
<rect x="230" y="407" width="128" height="14" fill="#f0f0f0"/>
<text x="241.5" y="419" font-family="'DejaVu Sans', sans-serif" font-size="12.5" fill="#000" textLength="105.5" lengthAdjust="spacingAndGlyphs">Current Measure</text>
<rect x="14" y="433" width="200" height="87" fill="#f0f0f0"/>
<rect x="14" y="477" width="3" height="1" fill="#808080"/>
<rect x="20" y="477" width="3" height="1" fill="#808080"/>
<rect x="26" y="477" width="3" height="1" fill="#808080"/>
<rect x="32" y="477" width="3" height="1" fill="#808080"/>
<rect x="38" y="477" width="3" height="1" fill="#808080"/>
<rect x="44" y="477" width="3" height="1" fill="#808080"/>
<rect x="50" y="477" width="3" height="1" fill="#808080"/>
<rect x="56" y="477" width="3" height="1" fill="#808080"/>
<rect x="62" y="477" width="3" height="1" fill="#808080"/>
<rect x="68" y="477" width="3" height="1" fill="#808080"/>
<rect x="74" y="477" width="3" height="1" fill="#808080"/>
<rect x="80" y="477" width="3" height="1" fill="#808080"/>
<rect x="86" y="477" width="3" height="1" fill="#808080"/>
<rect x="92" y="477" width="3" height="1" fill="#808080"/>
<rect x="98" y="477" width="3" height="1" fill="#808080"/>
<rect x="104" y="477" width="3" height="1" fill="#808080"/>
<rect x="110" y="477" width="3" height="1" fill="#808080"/>
<rect x="116" y="477" width="3" height="1" fill="#808080"/>
<rect x="122" y="477" width="3" height="1" fill="#808080"/>
<rect x="128" y="477" width="3" height="1" fill="#808080"/>
<rect x="134" y="477" width="3" height="1" fill="#808080"/>
<rect x="140" y="477" width="3" height="1" fill="#808080"/>
<rect x="146" y="477" width="3" height="1" fill="#808080"/>
<rect x="152" y="477" width="3" height="1" fill="#808080"/>
<rect x="158" y="477" width="3" height="1" fill="#808080"/>
<rect x="164" y="477" width="3" height="1" fill="#808080"/>
<rect x="170" y="477" width="3" height="1" fill="#808080"/>
<rect x="176" y="477" width="3" height="1" fill="#808080"/>
<rect x="182" y="477" width="3" height="1" fill="#808080"/>
<rect x="188" y="477" width="3" height="1" fill="#808080"/>
<rect x="194" y="477" width="3" height="1" fill="#808080"/>
<rect x="200" y="477" width="3" height="1" fill="#808080"/>
<rect x="206" y="477" width="3" height="1" fill="#808080"/>
<rect x="212" y="477" width="2" height="1" fill="#808080"/>
<rect x="14" y="514" width="200" height="5" fill="#000"/>
<g shape-rendering="geometricPrecision" stroke="#000" stroke-width="1">
<path d="M14.0 515Q26.5 509.5 33 509H45Q51.5 509.5 64.0 515Z" fill="#aa0000"/>
<path d="M65.0 515Q77.5 509.5 84 509H96Q102.5 509.5 115.0 515Z" fill="#00aa00"/>
<path d="M116.0 515Q128.5 509.5 135 509H147Q153.5 509.5 166.0 515Z" fill="#0000aa"/>
<path d="M167.0 515Q179.5 509.5 186 509H198Q204.5 509.5 217.0 515Z" fill="#c08a10"/>
</g>
<rect x="214" y="505" width="4" height="16" fill="#ebebeb"/>
<text x="26.3" y="505.7" font-family="'Liberation Serif', serif" font-size="11.5" font-weight="bold" fill="#000" textLength="25.0" lengthAdjust="spacingAndGlyphs">0.0%</text>
<text x="77.3" y="505.7" font-family="'Liberation Serif', serif" font-size="11.5" font-weight="bold" fill="#000" textLength="25.0" lengthAdjust="spacingAndGlyphs">0.0%</text>
<text x="128.2" y="505.7" font-family="'Liberation Serif', serif" font-size="11.5" font-weight="bold" fill="#000" textLength="25.0" lengthAdjust="spacingAndGlyphs">0.0%</text>
<text x="175.6" y="505.7" font-family="'Liberation Serif', serif" font-size="11.5" font-weight="bold" fill="#000" textLength="33.0" lengthAdjust="spacingAndGlyphs">dE 0.0</text>
<rect x="16" y="533" width="192" height="75" fill="#f0f0f0"/>
<text x="35.6" y="545.6" font-family="'Liberation Sans', sans-serif" font-size="12.5" font-weight="bold" fill="#000" textLength="55.5" lengthAdjust="spacingAndGlyphs">Measure</text>
<text x="127" y="545.6" font-family="'Liberation Sans', sans-serif" font-size="12.5" font-weight="bold" fill="#000" textLength="65.0" lengthAdjust="spacingAndGlyphs">Reference</text>
<rect x="18" y="622" width="42" height="14" fill="#f0f0f0"/>
<text x="18" y="634" font-family="'DejaVu Sans', sans-serif" font-size="12.5" fill="#000" textLength="40.0" lengthAdjust="spacingAndGlyphs">Target</text>
<rect x="220" y="430" width="153" height="579" fill="#f0f0f0"/>
<rect x="220" y="430" width="153" height="2" fill="#808080"/>
<rect x="220" y="430" width="2" height="578" fill="#808080"/>
<rect x="220" y="1008" width="153" height="1" fill="#fff"/>
<rect x="372" y="430" width="1" height="579" fill="#fff"/>
<rect x="222" y="432" width="55" height="22" fill="#f0f0f0"/>
<rect x="222" y="432" width="55" height="1" fill="#fff"/>
<rect x="222" y="454" width="55" height="1" fill="#5a5a5a"/>
<rect x="278" y="432" width="76" height="22" fill="#fff"/>
<rect x="278" y="454" width="76" height="1" fill="#c8c8c8"/>
<text x="249.5" y="448" font-family="'Liberation Sans', sans-serif" font-size="12" font-weight="bold" fill="#000" text-anchor="middle" textLength="41.0" lengthAdjust="spacingAndGlyphs">Y cd/m²</text>
<rect x="222" y="455" width="55" height="22" fill="#f0f0f0"/>
<rect x="222" y="455" width="55" height="1" fill="#fff"/>
<rect x="222" y="477" width="55" height="1" fill="#5a5a5a"/>
<rect x="278" y="455" width="76" height="22" fill="#fff"/>
<rect x="278" y="477" width="76" height="1" fill="#c8c8c8"/>
<text x="249.5" y="471" font-family="'Liberation Sans', sans-serif" font-size="12" font-weight="bold" fill="#000" text-anchor="middle" textLength="25.1" lengthAdjust="spacingAndGlyphs">Y ftL</text>
<rect x="222" y="478" width="55" height="22" fill="#f0f0f0"/>
<rect x="222" y="478" width="55" height="1" fill="#fff"/>
<rect x="222" y="500" width="55" height="1" fill="#5a5a5a"/>
<rect x="278" y="478" width="76" height="22" fill="#fff"/>
<rect x="278" y="500" width="76" height="1" fill="#c8c8c8"/>
<text x="249.5" y="494" font-family="'Liberation Sans', sans-serif" font-size="12" font-weight="bold" fill="#000" text-anchor="middle" textLength="11.5" lengthAdjust="spacingAndGlyphs">T°</text>
<rect x="222" y="501" width="55" height="22" fill="#f0f0f0"/>
<rect x="222" y="501" width="55" height="1" fill="#fff"/>
<rect x="222" y="523" width="55" height="1" fill="#5a5a5a"/>
<rect x="278" y="501" width="76" height="22" fill="#e0e0e0"/>
<rect x="278" y="523" width="76" height="1" fill="#c8c8c8"/>
<text x="249.5" y="517" font-family="'Liberation Sans', sans-serif" font-size="12" font-weight="bold" fill="#000" text-anchor="middle" textLength="7.6" lengthAdjust="spacingAndGlyphs">X</text>
<rect x="222" y="524" width="55" height="22" fill="#f0f0f0"/>
<rect x="222" y="524" width="55" height="1" fill="#fff"/>
<rect x="222" y="546" width="55" height="1" fill="#5a5a5a"/>
<rect x="278" y="524" width="76" height="22" fill="#e0e0e0"/>
<rect x="278" y="546" width="76" height="1" fill="#c8c8c8"/>
<text x="249.5" y="540" font-family="'Liberation Sans', sans-serif" font-size="12" font-weight="bold" fill="#000" text-anchor="middle" textLength="7.6" lengthAdjust="spacingAndGlyphs">Y</text>
<rect x="222" y="547" width="55" height="22" fill="#f0f0f0"/>
<rect x="222" y="547" width="55" height="1" fill="#fff"/>
<rect x="222" y="569" width="55" height="1" fill="#5a5a5a"/>
<rect x="278" y="547" width="76" height="22" fill="#e0e0e0"/>
<rect x="278" y="569" width="76" height="1" fill="#c8c8c8"/>
<text x="249.5" y="563" font-family="'Liberation Sans', sans-serif" font-size="12" font-weight="bold" fill="#000" text-anchor="middle" textLength="7.0" lengthAdjust="spacingAndGlyphs">Z</text>
<rect x="222" y="570" width="55" height="22" fill="#f0f0f0"/>
<rect x="222" y="570" width="55" height="1" fill="#fff"/>
<rect x="222" y="592" width="55" height="1" fill="#5a5a5a"/>
<rect x="278" y="570" width="76" height="22" fill="#fff"/>
<rect x="278" y="592" width="76" height="1" fill="#c8c8c8"/>
<text x="249.5" y="586" font-family="'Liberation Sans', sans-serif" font-size="12" font-weight="bold" fill="#000" text-anchor="middle" textLength="8.2" lengthAdjust="spacingAndGlyphs">R</text>
<rect x="222" y="593" width="55" height="22" fill="#f0f0f0"/>
<rect x="222" y="593" width="55" height="1" fill="#fff"/>
<rect x="222" y="615" width="55" height="1" fill="#5a5a5a"/>
<rect x="278" y="593" width="76" height="22" fill="#fff"/>
<rect x="278" y="615" width="76" height="1" fill="#c8c8c8"/>
<text x="249.5" y="609" font-family="'Liberation Sans', sans-serif" font-size="12" font-weight="bold" fill="#000" text-anchor="middle" textLength="8.9" lengthAdjust="spacingAndGlyphs">G</text>
<rect x="222" y="616" width="55" height="22" fill="#f0f0f0"/>
<rect x="222" y="616" width="55" height="1" fill="#fff"/>
<rect x="222" y="638" width="55" height="1" fill="#5a5a5a"/>
<rect x="278" y="616" width="76" height="22" fill="#fff"/>
<rect x="278" y="638" width="76" height="1" fill="#c8c8c8"/>
<text x="249.5" y="632" font-family="'Liberation Sans', sans-serif" font-size="12" font-weight="bold" fill="#000" text-anchor="middle" textLength="8.2" lengthAdjust="spacingAndGlyphs">B</text>
<rect x="222" y="639" width="55" height="22" fill="#f0f0f0"/>
<rect x="222" y="639" width="55" height="1" fill="#fff"/>
<rect x="222" y="661" width="55" height="1" fill="#5a5a5a"/>
<rect x="278" y="639" width="76" height="22" fill="#e0e0e0"/>
<rect x="278" y="661" width="76" height="1" fill="#c8c8c8"/>
<text x="249.5" y="655" font-family="'Liberation Sans', sans-serif" font-size="12" font-weight="bold" fill="#000" text-anchor="middle" textLength="6.3" lengthAdjust="spacingAndGlyphs">x</text>
<rect x="222" y="662" width="55" height="22" fill="#f0f0f0"/>
<rect x="222" y="662" width="55" height="1" fill="#fff"/>
<rect x="222" y="684" width="55" height="1" fill="#5a5a5a"/>
<rect x="278" y="662" width="76" height="22" fill="#e0e0e0"/>
<rect x="278" y="684" width="76" height="1" fill="#c8c8c8"/>
<text x="249.5" y="678" font-family="'Liberation Sans', sans-serif" font-size="12" font-weight="bold" fill="#000" text-anchor="middle" textLength="6.3" lengthAdjust="spacingAndGlyphs">y</text>
<rect x="222" y="685" width="55" height="22" fill="#f0f0f0"/>
<rect x="222" y="685" width="55" height="1" fill="#fff"/>
<rect x="222" y="707" width="55" height="1" fill="#5a5a5a"/>
<rect x="278" y="685" width="76" height="22" fill="#e0e0e0"/>
<rect x="278" y="707" width="76" height="1" fill="#c8c8c8"/>
<text x="249.5" y="701" font-family="'Liberation Sans', sans-serif" font-size="12" font-weight="bold" fill="#000" text-anchor="middle" textLength="7.6" lengthAdjust="spacingAndGlyphs">Y</text>
<rect x="222" y="708" width="55" height="22" fill="#f0f0f0"/>
<rect x="222" y="708" width="55" height="1" fill="#fff"/>
<rect x="222" y="730" width="55" height="1" fill="#5a5a5a"/>
<rect x="278" y="708" width="76" height="22" fill="#fff"/>
<rect x="278" y="730" width="76" height="1" fill="#c8c8c8"/>
<text x="249.5" y="724" font-family="'Liberation Sans', sans-serif" font-size="12" font-weight="bold" fill="#000" text-anchor="middle" textLength="6.3" lengthAdjust="spacingAndGlyphs">x</text>
<rect x="222" y="731" width="55" height="22" fill="#f0f0f0"/>
<rect x="222" y="731" width="55" height="1" fill="#fff"/>
<rect x="222" y="753" width="55" height="1" fill="#5a5a5a"/>
<rect x="278" y="731" width="76" height="22" fill="#fff"/>
<rect x="278" y="753" width="76" height="1" fill="#c8c8c8"/>
<text x="249.5" y="747" font-family="'Liberation Sans', sans-serif" font-size="12" font-weight="bold" fill="#000" text-anchor="middle" textLength="6.3" lengthAdjust="spacingAndGlyphs">y</text>
<rect x="222" y="754" width="55" height="22" fill="#f0f0f0"/>
<rect x="222" y="754" width="55" height="1" fill="#fff"/>
<rect x="222" y="776" width="55" height="1" fill="#5a5a5a"/>
<rect x="278" y="754" width="76" height="22" fill="#fff"/>
<rect x="278" y="776" width="76" height="1" fill="#c8c8c8"/>
<text x="249.5" y="770" font-family="'Liberation Sans', sans-serif" font-size="12" font-weight="bold" fill="#000" text-anchor="middle" textLength="5.7" lengthAdjust="spacingAndGlyphs">z</text>
<rect x="222" y="777" width="55" height="22" fill="#f0f0f0"/>
<rect x="222" y="777" width="55" height="1" fill="#fff"/>
<rect x="222" y="799" width="55" height="1" fill="#5a5a5a"/>
<rect x="278" y="777" width="76" height="22" fill="#e0e0e0"/>
<rect x="278" y="799" width="76" height="1" fill="#c8c8c8"/>
<text x="249.5" y="793" font-family="'Liberation Sans', sans-serif" font-size="12" font-weight="bold" fill="#000" text-anchor="middle" textLength="7.0" lengthAdjust="spacingAndGlyphs">L</text>
<rect x="222" y="800" width="55" height="22" fill="#f0f0f0"/>
<rect x="222" y="800" width="55" height="1" fill="#fff"/>
<rect x="222" y="822" width="55" height="1" fill="#5a5a5a"/>
<rect x="278" y="800" width="76" height="22" fill="#e0e0e0"/>
<rect x="278" y="822" width="76" height="1" fill="#c8c8c8"/>
<text x="249.5" y="816" font-family="'Liberation Sans', sans-serif" font-size="12" font-weight="bold" fill="#000" text-anchor="middle" textLength="6.3" lengthAdjust="spacingAndGlyphs">a</text>
<rect x="222" y="823" width="55" height="22" fill="#f0f0f0"/>
<rect x="222" y="823" width="55" height="1" fill="#fff"/>
<rect x="222" y="845" width="55" height="1" fill="#5a5a5a"/>
<rect x="278" y="823" width="76" height="22" fill="#e0e0e0"/>
<rect x="278" y="845" width="76" height="1" fill="#c8c8c8"/>
<text x="249.5" y="839" font-family="'Liberation Sans', sans-serif" font-size="12" font-weight="bold" fill="#000" text-anchor="middle" textLength="7.0" lengthAdjust="spacingAndGlyphs">b</text>
<rect x="222" y="846" width="55" height="22" fill="#f0f0f0"/>
<rect x="222" y="846" width="55" height="1" fill="#fff"/>
<rect x="222" y="868" width="55" height="1" fill="#5a5a5a"/>
<rect x="278" y="846" width="76" height="22" fill="#fff"/>
<rect x="278" y="868" width="76" height="1" fill="#c8c8c8"/>
<text x="249.5" y="862" font-family="'Liberation Sans', sans-serif" font-size="12" font-weight="bold" fill="#000" text-anchor="middle" textLength="7.0" lengthAdjust="spacingAndGlyphs">L</text>
<rect x="222" y="869" width="55" height="22" fill="#f0f0f0"/>
<rect x="222" y="869" width="55" height="1" fill="#fff"/>
<rect x="222" y="891" width="55" height="1" fill="#5a5a5a"/>
<rect x="278" y="869" width="76" height="22" fill="#fff"/>
<rect x="278" y="891" width="76" height="1" fill="#c8c8c8"/>
<text x="249.5" y="885" font-family="'Liberation Sans', sans-serif" font-size="12" font-weight="bold" fill="#000" text-anchor="middle" textLength="8.2" lengthAdjust="spacingAndGlyphs">C</text>
<rect x="222" y="892" width="55" height="22" fill="#f0f0f0"/>
<rect x="222" y="892" width="55" height="1" fill="#fff"/>
<rect x="222" y="914" width="55" height="1" fill="#5a5a5a"/>
<rect x="278" y="892" width="76" height="22" fill="#fff"/>
<rect x="278" y="914" width="76" height="1" fill="#c8c8c8"/>
<text x="249.5" y="908" font-family="'Liberation Sans', sans-serif" font-size="12" font-weight="bold" fill="#000" text-anchor="middle" textLength="8.2" lengthAdjust="spacingAndGlyphs">H</text>
<rect x="222" y="915" width="55" height="22" fill="#f0f0f0"/>
<rect x="222" y="915" width="55" height="1" fill="#fff"/>
<rect x="222" y="937" width="55" height="1" fill="#5a5a5a"/>
<rect x="278" y="915" width="76" height="22" fill="#e0e0e0"/>
<rect x="278" y="937" width="76" height="1" fill="#c8c8c8"/>
<text x="249.5" y="931" font-family="'Liberation Sans', sans-serif" font-size="12" font-weight="bold" fill="#000" text-anchor="middle" textLength="7.0" lengthAdjust="spacingAndGlyphs">L</text>
<rect x="222" y="938" width="55" height="22" fill="#f0f0f0"/>
<rect x="222" y="938" width="55" height="1" fill="#fff"/>
<rect x="222" y="960" width="55" height="1" fill="#5a5a5a"/>
<rect x="278" y="938" width="76" height="22" fill="#e0e0e0"/>
<rect x="278" y="960" width="76" height="1" fill="#c8c8c8"/>
<text x="249.5" y="954" font-family="'Liberation Sans', sans-serif" font-size="12" font-weight="bold" fill="#000" text-anchor="middle" textLength="9.5" lengthAdjust="spacingAndGlyphs">M</text>
<rect x="222" y="961" width="55" height="22" fill="#f0f0f0"/>
<rect x="222" y="961" width="55" height="1" fill="#fff"/>
<rect x="222" y="983" width="55" height="1" fill="#5a5a5a"/>
<rect x="278" y="961" width="76" height="22" fill="#e0e0e0"/>
<rect x="278" y="983" width="76" height="1" fill="#c8c8c8"/>
<text x="249.5" y="977" font-family="'Liberation Sans', sans-serif" font-size="12" font-weight="bold" fill="#000" text-anchor="middle" textLength="7.6" lengthAdjust="spacingAndGlyphs">S</text>
<rect x="277" y="432" width="1" height="552" fill="#5a5a5a"/>
<rect x="354" y="432" width="1" height="552" fill="#c8c8c8"/>
<rect x="222" y="984" width="133" height="24" fill="#a0a0a0"/>
<path d="M359.5 444.5L364 438L368.5 444.5Z" fill="#a6a6a6" shape-rendering="geometricPrecision"/>
<path d="M359.5 996L364 1002.5L368.5 996Z" fill="#a6a6a6" shape-rendering="geometricPrecision"/>
<rect x="390" y="386" width="1506" height="630" fill="#fff"/>
<path d="M391 392Q391 387 396 387H1890Q1895 387 1895 392V1015H391Z" fill="#7a7a7a" shape-rendering="geometricPrecision"/>
<path d="M391 387h6l-6 6zM1895 387h-6l6 6z" fill="#7a7a7a" shape-rendering="geometricPrecision"/>
<path d="M392 393Q392 388 397 388H1889Q1894 388 1894 393V405H392Z" fill="url(#gHdr)" shape-rendering="geometricPrecision"/>
<rect x="392" y="405" width="1502" height="1" fill="#9c9c9c"/>
<rect x="392" y="406" width="1502" height="608" fill="#ebebeb"/>
<text x="398.3" y="401" font-family="'DejaVu Sans', sans-serif" font-size="11" font-weight="bold" fill="#464646" textLength="77.4" lengthAdjust="spacingAndGlyphs">Information</text>
<rect x="396" y="409" width="302" height="23" fill="#fff"/>
<rect x="396" y="409" width="302" height="1" fill="#696969"/>
<rect x="396" y="409" width="1" height="23" fill="#696969"/>
<rect x="397" y="410" width="300" height="1" fill="#a0a0a0"/>
<rect x="397" y="410" width="1" height="21" fill="#a0a0a0"/>
<rect x="396" y="431" width="302" height="1" fill="#fff"/>
<rect x="697" y="409" width="1" height="23" fill="#fff"/>
<rect x="397" y="430" width="300" height="1" fill="#e3e3e3"/>
<rect x="696" y="410" width="1" height="21" fill="#e3e3e3"/>
<rect x="679" y="411" width="17" height="19" fill="#f0f0f0"/>
<rect x="679" y="411" width="17" height="1" fill="#fff"/>
<rect x="679" y="411" width="1" height="19" fill="#fff"/>
<rect x="679" y="429" width="17" height="1" fill="#696969"/>
<rect x="695" y="411" width="1" height="19" fill="#696969"/>
<rect x="680" y="428" width="15" height="1" fill="#a0a0a0"/>
<rect x="694" y="412" width="1" height="17" fill="#a0a0a0"/>
<rect x="684" y="419" width="7" height="1" fill="#000"/>
<rect x="685" y="420" width="5" height="1" fill="#000"/>
<rect x="686" y="421" width="3" height="1" fill="#000"/>
<rect x="687" y="422" width="1" height="1" fill="#000"/>
<rect x="399" y="412" width="279" height="17" fill="#0078d7"/>
<text x="400" y="426" font-family="'DejaVu Sans', sans-serif" font-size="12.5" fill="#fff" textLength="138.3" lengthAdjust="spacingAndGlyphs">Target - RGB - Gamma</text>
<rect x="398" y="438" width="498" height="1" fill="#fff"/>
<rect x="398" y="439" width="498" height="570" fill="#000"/>
<clipPath id="clipBig"><rect x="399" y="440" width="496" height="569"/></clipPath><g clip-path="url(#clipBig)">
<foreignObject x="399" y="440" width="496" height="569"><div style="width:496px;height:569px;background:conic-gradient(from 0deg at 50% 50%, rgb(64,255,0) 0.00deg, rgb(112,239,0) 12.29deg, rgb(160,224,0) 23.55deg, rgb(207,208,0) 33.18deg, rgb(255,192,0) 41.08deg, rgb(255,144,0) 49.29deg, rgb(255,96,0) 60.16deg, rgb(255,48,0) 74.00deg, rgb(255,0,0) 90.00deg, rgb(255,0,32) 106.00deg, rgb(255,0,64) 119.84deg, rgb(255,0,96) 130.71deg, rgb(255,0,128) 138.92deg, rgb(223,0,144) 146.82deg, rgb(192,0,160) 156.45deg, rgb(160,0,176) 167.71deg, rgb(128,0,192) 180.00deg, rgb(96,0,208) 192.29deg, rgb(64,0,224) 203.55deg, rgb(32,0,239) 213.18deg, rgb(0,0,255) 221.08deg, rgb(0,32,239) 229.29deg, rgb(0,64,224) 240.16deg, rgb(0,96,208) 254.00deg, rgb(0,128,192) 270.00deg, rgb(0,160,176) 286.00deg, rgb(0,192,160) 299.84deg, rgb(0,223,144) 310.71deg, rgb(0,255,128) 318.92deg, rgb(16,255,96) 326.82deg, rgb(32,255,64) 336.45deg, rgb(48,255,32) 347.71deg, rgb(64,255,0) 360deg)"></div></foreignObject>
</g>
<rect x="398" y="1009" width="498" height="1" fill="#fff"/>
<g shape-rendering="geometricPrecision">
<rect x="472.5" y="524.5" width="349" height="399" rx="11" ry="11" fill="#000" stroke="#fff" stroke-width="1"/>
</g><g shape-rendering="crispEdges" stroke="#fff" stroke-width="1" fill="none" stroke-dasharray="3 3">
<path d="M647.5 497V952"/><path d="M452 724.5H844"/>
</g><ellipse cx="647" cy="724" rx="97.5" ry="114" fill="none" stroke="#fff" stroke-width="1" stroke-dasharray="3 3" shape-rendering="geometricPrecision"/>
<rect x="50" y="638" width="116" height="89" fill="#000"/>
<clipPath id="clipSm"><rect x="51" y="639" width="114" height="88"/></clipPath><g clip-path="url(#clipSm)">
<foreignObject x="51" y="639" width="114" height="88"><div style="width:114px;height:88px;background:conic-gradient(from 0deg at 50% 50%, rgb(64,255,0) 0.00deg, rgb(112,239,0) 17.95deg, rgb(160,224,0) 32.93deg, rgb(207,208,0) 44.17deg, rgb(255,192,0) 52.33deg, rgb(255,144,0) 59.93deg, rgb(255,96,0) 68.90deg, rgb(255,48,0) 79.08deg, rgb(255,0,0) 90.00deg, rgb(255,0,32) 100.92deg, rgb(255,0,64) 111.10deg, rgb(255,0,96) 120.07deg, rgb(255,0,128) 127.67deg, rgb(223,0,144) 135.83deg, rgb(192,0,160) 147.07deg, rgb(160,0,176) 162.05deg, rgb(128,0,192) 180.00deg, rgb(96,0,208) 197.95deg, rgb(64,0,224) 212.93deg, rgb(32,0,239) 224.17deg, rgb(0,0,255) 232.33deg, rgb(0,32,239) 239.93deg, rgb(0,64,224) 248.90deg, rgb(0,96,208) 259.08deg, rgb(0,128,192) 270.00deg, rgb(0,160,176) 280.92deg, rgb(0,192,160) 291.10deg, rgb(0,223,144) 300.07deg, rgb(0,255,128) 307.67deg, rgb(16,255,96) 315.83deg, rgb(32,255,64) 327.07deg, rgb(48,255,32) 342.05deg, rgb(64,255,0) 360deg)"></div></foreignObject>
</g>
<rect x="67.5" y="651.5" width="81" height="62" rx="7" ry="7" fill="#000" stroke="#fff" stroke-width="1" shape-rendering="geometricPrecision"/>
<g shape-rendering="crispEdges" stroke="#fff" stroke-width="1" fill="none" stroke-dasharray="3 2"><path d="M108.5 651V715"/><path d="M65 682.5H152"/></g>
<ellipse cx="108" cy="682" rx="21.4" ry="15.8" fill="none" stroke="#fff" stroke-width="1" stroke-dasharray="3 3" shape-rendering="geometricPrecision"/>
<rect x="896" y="438" width="498" height="571" fill="#fff"/>
<rect x="896" y="439" width="494" height="1" fill="#8c8c8c"/>
<rect x="896" y="440" width="494" height="569" fill="#a0a0a0"/>
<rect x="897" y="440" width="493" height="569" fill="#696969"/>
<rect x="898" y="441" width="492" height="568" fill="#a0a0a0"/>
<rect x="899" y="442" width="491" height="1" fill="#696969"/>
<rect x="896" y="1005" width="498" height="4" fill="#fff"/>
<rect x="1394" y="438" width="498" height="571" fill="#fff"/>
<rect x="1394" y="439" width="494" height="1" fill="#8c8c8c"/>
<rect x="1394" y="440" width="494" height="569" fill="#a0a0a0"/>
<rect x="1395" y="440" width="493" height="569" fill="#696969"/>
<rect x="1396" y="441" width="492" height="568" fill="#a0a0a0"/>
<rect x="1397" y="442" width="491" height="1" fill="#696969"/>
<rect x="1394" y="1005" width="498" height="4" fill="#fff"/>
<rect x="900" y="443" width="490" height="562" fill="url(#gCh1)"/>
<rect x="1398" y="443" width="490" height="562" fill="url(#gCh2)"/>
<clipPath id="clipC1"><rect x="900" y="443" width="490" height="562"/></clipPath>
<clipPath id="clipC2"><rect x="1398" y="443" width="490" height="562"/></clipPath>
<rect x="900" y="443" width="1" height="562" fill="#004545"/>
<rect x="949" y="443" width="1" height="562" fill="#004545"/>
<rect x="998" y="443" width="1" height="562" fill="#004545"/>
<rect x="1047" y="443" width="1" height="562" fill="#004545"/>
<rect x="1096" y="443" width="1" height="562" fill="#004545"/>
<rect x="1145" y="443" width="1" height="562" fill="#004545"/>
<rect x="1194" y="443" width="1" height="562" fill="#004545"/>
<rect x="1243" y="443" width="1" height="562" fill="#004545"/>
<rect x="1292" y="443" width="1" height="562" fill="#004545"/>
<rect x="1341" y="443" width="1" height="562" fill="#004545"/>
<rect x="900" y="471" width="490" height="1" fill="#004545"/>
<rect x="900" y="499" width="490" height="1" fill="#004545"/>
<rect x="900" y="527" width="490" height="1" fill="#004545"/>
<rect x="900" y="555" width="490" height="1" fill="#004545"/>
<rect x="900" y="583" width="490" height="1" fill="#004545"/>
<rect x="900" y="611" width="490" height="1" fill="#004545"/>
<rect x="900" y="639" width="490" height="1" fill="#004545"/>
<rect x="900" y="667" width="490" height="1" fill="#004545"/>
<rect x="900" y="695" width="490" height="1" fill="#004545"/>
<rect x="900" y="780" width="490" height="1" fill="#004545"/>
<rect x="900" y="836" width="490" height="1" fill="#004545"/>
<rect x="900" y="892" width="490" height="1" fill="#004545"/>
<rect x="900" y="948" width="490" height="1" fill="#004545"/>
<rect x="1398" y="443" width="1" height="562" fill="#004545"/>
<rect x="1447" y="443" width="1" height="562" fill="#004545"/>
<rect x="1496" y="443" width="1" height="562" fill="#004545"/>
<rect x="1545" y="443" width="1" height="562" fill="#004545"/>
<rect x="1594" y="443" width="1" height="562" fill="#004545"/>
<rect x="1643" y="443" width="1" height="562" fill="#004545"/>
<rect x="1692" y="443" width="1" height="562" fill="#004545"/>
<rect x="1741" y="443" width="1" height="562" fill="#004545"/>
<rect x="1790" y="443" width="1" height="562" fill="#004545"/>
<rect x="1839" y="443" width="1" height="562" fill="#004545"/>
<rect x="1398" y="471" width="490" height="1" fill="#004545"/>
<rect x="1398" y="499" width="490" height="1" fill="#004545"/>
<rect x="1398" y="527" width="490" height="1" fill="#004545"/>
<rect x="1398" y="555" width="490" height="1" fill="#004545"/>
<rect x="1398" y="583" width="490" height="1" fill="#004545"/>
<rect x="1398" y="611" width="490" height="1" fill="#004545"/>
<rect x="1398" y="639" width="490" height="1" fill="#004545"/>
<rect x="1398" y="667" width="490" height="1" fill="#004545"/>
<rect x="1398" y="695" width="490" height="1" fill="#004545"/>
<rect x="1398" y="724" width="490" height="1" fill="#004545"/>
<rect x="1398" y="752" width="490" height="1" fill="#004545"/>
<rect x="1398" y="780" width="490" height="1" fill="#004545"/>
<rect x="1398" y="808" width="490" height="1" fill="#004545"/>
<rect x="1398" y="836" width="490" height="1" fill="#004545"/>
<rect x="1398" y="864" width="490" height="1" fill="#004545"/>
<rect x="1398" y="892" width="490" height="1" fill="#004545"/>
<rect x="1398" y="920" width="490" height="1" fill="#004545"/>
<rect x="1398" y="948" width="490" height="1" fill="#004545"/>
<rect x="1398" y="976" width="490" height="1" fill="#004545"/>
<text x="902.5" y="466.65000000000003" font-family="'Liberation Serif', serif" font-size="13" fill="#e8e8e8" textLength="32.1" lengthAdjust="spacingAndGlyphs">140%</text>
<text x="902.5" y="494.70000000000005" font-family="'Liberation Serif', serif" font-size="13" fill="#e8e8e8" textLength="32.1" lengthAdjust="spacingAndGlyphs">130%</text>
<text x="902.5" y="522.75" font-family="'Liberation Serif', serif" font-size="13" fill="#e8e8e8" textLength="32.1" lengthAdjust="spacingAndGlyphs">120%</text>
<text x="902.5" y="550.8000000000001" font-family="'Liberation Serif', serif" font-size="13" fill="#e8e8e8" textLength="31.6" lengthAdjust="spacingAndGlyphs">110%</text>
<text x="902.5" y="578.85" font-family="'Liberation Serif', serif" font-size="13" fill="#e8e8e8" textLength="32.1" lengthAdjust="spacingAndGlyphs">100%</text>
<text x="902.5" y="606.9" font-family="'Liberation Serif', serif" font-size="13" fill="#e8e8e8" textLength="25.3" lengthAdjust="spacingAndGlyphs">90%</text>
<text x="902.5" y="634.95" font-family="'Liberation Serif', serif" font-size="13" fill="#e8e8e8" textLength="25.3" lengthAdjust="spacingAndGlyphs">80%</text>
<text x="902.5" y="663.0" font-family="'Liberation Serif', serif" font-size="13" fill="#e8e8e8" textLength="25.3" lengthAdjust="spacingAndGlyphs">70%</text>
<text x="902.5" y="691.0500000000001" font-family="'Liberation Serif', serif" font-size="13" fill="#e8e8e8" textLength="25.3" lengthAdjust="spacingAndGlyphs">60%</text>
<text x="902.5" y="775.7" font-family="'Liberation Serif', serif" font-size="13" fill="#e8e8e8" textLength="6.9" lengthAdjust="spacingAndGlyphs">8</text>
<text x="902.5" y="831.7" font-family="'Liberation Serif', serif" font-size="13" fill="#e8e8e8" textLength="6.9" lengthAdjust="spacingAndGlyphs">6</text>
<text x="902.5" y="887.7" font-family="'Liberation Serif', serif" font-size="13" fill="#e8e8e8" textLength="6.9" lengthAdjust="spacingAndGlyphs">4</text>
<text x="902.5" y="943.7" font-family="'Liberation Serif', serif" font-size="13" fill="#e8e8e8" textLength="6.9" lengthAdjust="spacingAndGlyphs">2</text>
<g clip-path="url(#clipC1)">
<text x="952.0" y="720" font-family="'Liberation Serif', serif" font-size="13" fill="#e6e6e6" textLength="62.1" lengthAdjust="spacingAndGlyphs">10% White</text>
<text x="1050.0" y="720" font-family="'Liberation Serif', serif" font-size="13" fill="#b3b3b3" textLength="62.1" lengthAdjust="spacingAndGlyphs">30% White</text>
<text x="1148.0" y="720" font-family="'Liberation Serif', serif" font-size="13" fill="#858585" textLength="62.1" lengthAdjust="spacingAndGlyphs">50% White</text>
<text x="1246.0" y="720" font-family="'Liberation Serif', serif" font-size="13" fill="#4c4c4c" textLength="62.1" lengthAdjust="spacingAndGlyphs">70% White</text>
<text x="1344.0" y="720" font-family="'Liberation Serif', serif" font-size="13" fill="#191919" textLength="62.1" lengthAdjust="spacingAndGlyphs">90% White</text>
</g>
<g clip-path="url(#clipC1)">
<text x="952.0" y="1001" font-family="'Liberation Serif', serif" font-size="13" fill="#e6e6e6" textLength="62.1" lengthAdjust="spacingAndGlyphs">10% White</text>
<text x="1050.0" y="1001" font-family="'Liberation Serif', serif" font-size="13" fill="#b3b3b3" textLength="62.1" lengthAdjust="spacingAndGlyphs">30% White</text>
<text x="1148.0" y="1001" font-family="'Liberation Serif', serif" font-size="13" fill="#858585" textLength="62.1" lengthAdjust="spacingAndGlyphs">50% White</text>
<text x="1246.0" y="1001" font-family="'Liberation Serif', serif" font-size="13" fill="#4c4c4c" textLength="62.1" lengthAdjust="spacingAndGlyphs">70% White</text>
<text x="1344.0" y="1001" font-family="'Liberation Serif', serif" font-size="13" fill="#191919" textLength="62.1" lengthAdjust="spacingAndGlyphs">90% White</text>
</g>
<text x="1400.3" y="466.65000000000003" font-family="'Liberation Serif', serif" font-size="13" fill="#e8e8e8" textLength="17.2" lengthAdjust="spacingAndGlyphs">2.9</text>
<text x="1400.3" y="494.70000000000005" font-family="'Liberation Serif', serif" font-size="13" fill="#e8e8e8" textLength="17.2" lengthAdjust="spacingAndGlyphs">2.8</text>
<text x="1400.3" y="522.75" font-family="'Liberation Serif', serif" font-size="13" fill="#e8e8e8" textLength="17.2" lengthAdjust="spacingAndGlyphs">2.7</text>
<text x="1400.3" y="550.8000000000001" font-family="'Liberation Serif', serif" font-size="13" fill="#e8e8e8" textLength="17.2" lengthAdjust="spacingAndGlyphs">2.6</text>
<text x="1400.3" y="578.85" font-family="'Liberation Serif', serif" font-size="13" fill="#e8e8e8" textLength="17.2" lengthAdjust="spacingAndGlyphs">2.5</text>
<text x="1400.3" y="606.9" font-family="'Liberation Serif', serif" font-size="13" fill="#e8e8e8" textLength="17.2" lengthAdjust="spacingAndGlyphs">2.4</text>
<text x="1400.3" y="634.95" font-family="'Liberation Serif', serif" font-size="13" fill="#e8e8e8" textLength="17.2" lengthAdjust="spacingAndGlyphs">2.3</text>
<text x="1400.3" y="663.0" font-family="'Liberation Serif', serif" font-size="13" fill="#e8e8e8" textLength="17.2" lengthAdjust="spacingAndGlyphs">2.2</text>
<text x="1400.3" y="691.0500000000001" font-family="'Liberation Serif', serif" font-size="13" fill="#e8e8e8" textLength="17.2" lengthAdjust="spacingAndGlyphs">2.1</text>
<text x="1400.3" y="719.1" font-family="'Liberation Serif', serif" font-size="13" fill="#e8e8e8" textLength="6.9" lengthAdjust="spacingAndGlyphs">2</text>
<text x="1400.3" y="747.15" font-family="'Liberation Serif', serif" font-size="13" fill="#e8e8e8" textLength="17.2" lengthAdjust="spacingAndGlyphs">1.9</text>
<text x="1400.3" y="775.2" font-family="'Liberation Serif', serif" font-size="13" fill="#e8e8e8" textLength="17.2" lengthAdjust="spacingAndGlyphs">1.8</text>
<text x="1400.3" y="803.2500000000001" font-family="'Liberation Serif', serif" font-size="13" fill="#e8e8e8" textLength="17.2" lengthAdjust="spacingAndGlyphs">1.7</text>
<text x="1400.3" y="831.3000000000001" font-family="'Liberation Serif', serif" font-size="13" fill="#e8e8e8" textLength="17.2" lengthAdjust="spacingAndGlyphs">1.6</text>
<text x="1400.3" y="859.35" font-family="'Liberation Serif', serif" font-size="13" fill="#e8e8e8" textLength="17.2" lengthAdjust="spacingAndGlyphs">1.5</text>
<text x="1400.3" y="887.4" font-family="'Liberation Serif', serif" font-size="13" fill="#e8e8e8" textLength="17.2" lengthAdjust="spacingAndGlyphs">1.4</text>
<text x="1400.3" y="915.45" font-family="'Liberation Serif', serif" font-size="13" fill="#e8e8e8" textLength="17.2" lengthAdjust="spacingAndGlyphs">1.3</text>
<text x="1400.3" y="943.5000000000001" font-family="'Liberation Serif', serif" font-size="13" fill="#e8e8e8" textLength="17.2" lengthAdjust="spacingAndGlyphs">1.2</text>
<text x="1400.3" y="971.5500000000001" font-family="'Liberation Serif', serif" font-size="13" fill="#e8e8e8" textLength="17.2" lengthAdjust="spacingAndGlyphs">1.1</text>
<g clip-path="url(#clipC2)">
<text x="1450.0" y="1001" font-family="'Liberation Serif', serif" font-size="13" fill="#e6e6e6" textLength="62.1" lengthAdjust="spacingAndGlyphs">10% White</text>
<text x="1548.0" y="1001" font-family="'Liberation Serif', serif" font-size="13" fill="#b3b3b3" textLength="62.1" lengthAdjust="spacingAndGlyphs">30% White</text>
<text x="1646.0" y="1001" font-family="'Liberation Serif', serif" font-size="13" fill="#858585" textLength="62.1" lengthAdjust="spacingAndGlyphs">50% White</text>
<text x="1744.0" y="1001" font-family="'Liberation Serif', serif" font-size="13" fill="#4c4c4c" textLength="62.1" lengthAdjust="spacingAndGlyphs">70% White</text>
<text x="1842.0" y="1001" font-family="'Liberation Serif', serif" font-size="13" fill="#191919" textLength="62.1" lengthAdjust="spacingAndGlyphs">90% White</text>
</g>
<text x="1156.5" y="456.5" font-family="'Liberation Sans', sans-serif" font-size="14" font-weight="bold" fill="#dede00" text-anchor="middle" textLength="205.0" lengthAdjust="spacingAndGlyphs">Gray Scale Balance w/gamma</text>
<text x="1655.5" y="456.5" font-family="'Liberation Sans', sans-serif" font-size="14" font-weight="bold" fill="#dede00" text-anchor="middle" textLength="103.0" lengthAdjust="spacingAndGlyphs">EOTF(Gamma)</text>
<text x="1225.6" y="962.5" font-family="'Liberation Sans', sans-serif" font-size="16" font-weight="bold" fill="#8e8e8e" textLength="154.4" lengthAdjust="spacingAndGlyphs" opacity="0.75">hcfr.sourceforge.net</text>
<text x="1723.6" y="962.5" font-family="'Liberation Sans', sans-serif" font-size="16" font-weight="bold" fill="#8e8e8e" textLength="154.4" lengthAdjust="spacingAndGlyphs" opacity="0.75">hcfr.sourceforge.net</text>
<g clip-path="url(#clipC1)">
<rect x="903" y="583" width="3" height="1" fill="#fff"/>
<rect x="909" y="583" width="3" height="1" fill="#fff"/>
<rect x="915" y="583" width="3" height="1" fill="#fff"/>
<rect x="921" y="583" width="3" height="1" fill="#fff"/>
<rect x="927" y="583" width="3" height="1" fill="#fff"/>
<rect x="933" y="583" width="3" height="1" fill="#fff"/>
<rect x="939" y="583" width="3" height="1" fill="#fff"/>
<rect x="945" y="583" width="3" height="1" fill="#fff"/>
<rect x="951" y="583" width="3" height="1" fill="#fff"/>
<rect x="957" y="583" width="3" height="1" fill="#fff"/>
<rect x="963" y="583" width="3" height="1" fill="#fff"/>
<rect x="969" y="583" width="3" height="1" fill="#fff"/>
<rect x="975" y="583" width="3" height="1" fill="#fff"/>
<rect x="981" y="583" width="3" height="1" fill="#fff"/>
<rect x="987" y="583" width="3" height="1" fill="#fff"/>
<rect x="993" y="583" width="3" height="1" fill="#fff"/>
<rect x="999" y="583" width="3" height="1" fill="#fff"/>
<rect x="1005" y="583" width="3" height="1" fill="#fff"/>
<rect x="1011" y="583" width="3" height="1" fill="#fff"/>
<rect x="1017" y="583" width="3" height="1" fill="#fff"/>
<rect x="1023" y="583" width="3" height="1" fill="#fff"/>
<rect x="1029" y="583" width="3" height="1" fill="#fff"/>
<rect x="1035" y="583" width="3" height="1" fill="#fff"/>
<rect x="1041" y="583" width="3" height="1" fill="#fff"/>
<rect x="1047" y="583" width="3" height="1" fill="#fff"/>
<rect x="1053" y="583" width="3" height="1" fill="#fff"/>
<rect x="1059" y="583" width="3" height="1" fill="#fff"/>
<rect x="1065" y="583" width="3" height="1" fill="#fff"/>
<rect x="1071" y="583" width="3" height="1" fill="#fff"/>
<rect x="1077" y="583" width="3" height="1" fill="#fff"/>
<rect x="1083" y="583" width="3" height="1" fill="#fff"/>
<rect x="1089" y="583" width="3" height="1" fill="#fff"/>
<rect x="1095" y="583" width="3" height="1" fill="#fff"/>
<rect x="1101" y="583" width="3" height="1" fill="#fff"/>
<rect x="1107" y="583" width="3" height="1" fill="#fff"/>
<rect x="1113" y="583" width="3" height="1" fill="#fff"/>
<rect x="1119" y="583" width="3" height="1" fill="#fff"/>
<rect x="1125" y="583" width="3" height="1" fill="#fff"/>
<rect x="1131" y="583" width="3" height="1" fill="#fff"/>
<rect x="1137" y="583" width="3" height="1" fill="#fff"/>
<rect x="1143" y="583" width="3" height="1" fill="#fff"/>
<rect x="1149" y="583" width="3" height="1" fill="#fff"/>
<rect x="1155" y="583" width="3" height="1" fill="#fff"/>
<rect x="1161" y="583" width="3" height="1" fill="#fff"/>
<rect x="1167" y="583" width="3" height="1" fill="#fff"/>
<rect x="1173" y="583" width="3" height="1" fill="#fff"/>
<rect x="1179" y="583" width="3" height="1" fill="#fff"/>
<rect x="1185" y="583" width="3" height="1" fill="#fff"/>
<rect x="1191" y="583" width="3" height="1" fill="#fff"/>
<rect x="1197" y="583" width="3" height="1" fill="#fff"/>
<rect x="1203" y="583" width="3" height="1" fill="#fff"/>
<rect x="1209" y="583" width="3" height="1" fill="#fff"/>
<rect x="1215" y="583" width="3" height="1" fill="#fff"/>
<rect x="1221" y="583" width="3" height="1" fill="#fff"/>
<rect x="1227" y="583" width="3" height="1" fill="#fff"/>
<rect x="1233" y="583" width="3" height="1" fill="#fff"/>
<rect x="1239" y="583" width="3" height="1" fill="#fff"/>
<rect x="1245" y="583" width="3" height="1" fill="#fff"/>
<rect x="1251" y="583" width="3" height="1" fill="#fff"/>
<rect x="1257" y="583" width="3" height="1" fill="#fff"/>
<rect x="1263" y="583" width="3" height="1" fill="#fff"/>
<rect x="1269" y="583" width="3" height="1" fill="#fff"/>
<rect x="1275" y="583" width="3" height="1" fill="#fff"/>
<rect x="1281" y="583" width="3" height="1" fill="#fff"/>
<rect x="1287" y="583" width="3" height="1" fill="#fff"/>
<rect x="1293" y="583" width="3" height="1" fill="#fff"/>
<rect x="1299" y="583" width="3" height="1" fill="#fff"/>
<rect x="1305" y="583" width="3" height="1" fill="#fff"/>
<rect x="1311" y="583" width="3" height="1" fill="#fff"/>
<rect x="1317" y="583" width="3" height="1" fill="#fff"/>
<rect x="1323" y="583" width="3" height="1" fill="#fff"/>
<rect x="1329" y="583" width="3" height="1" fill="#fff"/>
<rect x="1335" y="583" width="3" height="1" fill="#fff"/>
<rect x="1341" y="583" width="3" height="1" fill="#fff"/>
<rect x="1347" y="583" width="3" height="1" fill="#fff"/>
<rect x="1353" y="583" width="3" height="1" fill="#fff"/>
<rect x="1359" y="583" width="3" height="1" fill="#fff"/>
<rect x="1365" y="583" width="3" height="1" fill="#fff"/>
<rect x="1371" y="583" width="3" height="1" fill="#fff"/>
<rect x="1377" y="583" width="3" height="1" fill="#fff"/>
<rect x="1383" y="583" width="3" height="1" fill="#fff"/>
<rect x="1389" y="583" width="3" height="1" fill="#fff"/>
<rect x="900" y="579" width="3" height="8" fill="#e8e8e8"/>
<path d="M921.5 414L946 572.5 L971 571 L996 557.75 L1020 585 L1045 582 L1070 586 L1094 584 L1119 591 L1143 586 L1168 586 L1193 585 L1217 586 L1242 587 L1266 586 L1291 586 L1316 586 L1340 589 L1365 592 L1390 594" fill="none" stroke="#ff0000" stroke-width="2" stroke-linejoin="round" shape-rendering="crispEdges"/>
<rect x="942" y="568" width="8" height="8" fill="#ff0000"/>
<rect x="967" y="567" width="8" height="8" fill="#ff0000"/>
<rect x="992" y="554" width="8" height="8" fill="#ff0000"/>
<rect x="1016" y="581" width="8" height="8" fill="#ff0000"/>
<rect x="1041" y="578" width="8" height="8" fill="#ff0000"/>
<rect x="1066" y="582" width="8" height="8" fill="#ff0000"/>
<rect x="1090" y="580" width="8" height="8" fill="#ff0000"/>
<rect x="1115" y="587" width="8" height="8" fill="#ff0000"/>
<rect x="1139" y="582" width="8" height="8" fill="#ff0000"/>
<rect x="1164" y="582" width="8" height="8" fill="#ff0000"/>
<rect x="1189" y="581" width="8" height="8" fill="#ff0000"/>
<rect x="1213" y="582" width="8" height="8" fill="#ff0000"/>
<rect x="1238" y="583" width="8" height="8" fill="#ff0000"/>
<rect x="1262" y="582" width="8" height="8" fill="#ff0000"/>
<rect x="1287" y="582" width="8" height="8" fill="#ff0000"/>
<rect x="1312" y="582" width="8" height="8" fill="#ff0000"/>
<rect x="1336" y="585" width="8" height="8" fill="#ff0000"/>
<rect x="1361" y="588" width="8" height="8" fill="#ff0000"/>
<rect x="1386" y="590" width="8" height="8" fill="#ff0000"/>
<path d="M921.5 414L946 572 L971 553 L996 548 L1020 567 L1045 563.75 L1070 561 L1094 567.5 L1119 572.5 L1143 569 L1168 570 L1193 571 L1217 572 L1242 573 L1266 575 L1291 575 L1316 574 L1340 575 L1365 578 L1390 580" fill="none" stroke="#00ff00" stroke-width="2" stroke-linejoin="round" shape-rendering="crispEdges"/>
<rect x="942" y="568" width="8" height="8" fill="#00ff00"/>
<rect x="967" y="549" width="8" height="8" fill="#00ff00"/>
<rect x="992" y="544" width="8" height="8" fill="#00ff00"/>
<rect x="1016" y="563" width="8" height="8" fill="#00ff00"/>
<rect x="1041" y="560" width="8" height="8" fill="#00ff00"/>
<rect x="1066" y="557" width="8" height="8" fill="#00ff00"/>
<rect x="1090" y="564" width="8" height="8" fill="#00ff00"/>
<rect x="1115" y="568" width="8" height="8" fill="#00ff00"/>
<rect x="1139" y="565" width="8" height="8" fill="#00ff00"/>
<rect x="1164" y="566" width="8" height="8" fill="#00ff00"/>
<rect x="1189" y="567" width="8" height="8" fill="#00ff00"/>
<rect x="1213" y="568" width="8" height="8" fill="#00ff00"/>
<rect x="1238" y="569" width="8" height="8" fill="#00ff00"/>
<rect x="1262" y="571" width="8" height="8" fill="#00ff00"/>
<rect x="1287" y="571" width="8" height="8" fill="#00ff00"/>
<rect x="1312" y="570" width="8" height="8" fill="#00ff00"/>
<rect x="1336" y="571" width="8" height="8" fill="#00ff00"/>
<rect x="1361" y="574" width="8" height="8" fill="#00ff00"/>
<rect x="1386" y="576" width="8" height="8" fill="#00ff00"/>
<path d="M921.5 399L946 565 L971 553.75 L996 550.6 L1020 568.75 L1045 557 L1070 562 L1094 562 L1119 566 L1143 566 L1168 563.75 L1193 563.75 L1217 566 L1242 567 L1266 568 L1291 568 L1316 571 L1340 573 L1365 576 L1390 578" fill="none" stroke="#0000ff" stroke-width="2" stroke-linejoin="round" shape-rendering="crispEdges"/>
<rect x="942" y="561" width="8" height="8" fill="#0000ff"/>
<rect x="967" y="550" width="8" height="8" fill="#0000ff"/>
<rect x="992" y="547" width="8" height="8" fill="#0000ff"/>
<rect x="1016" y="565" width="8" height="8" fill="#0000ff"/>
<rect x="1041" y="553" width="8" height="8" fill="#0000ff"/>
<rect x="1066" y="558" width="8" height="8" fill="#0000ff"/>
<rect x="1090" y="558" width="8" height="8" fill="#0000ff"/>
<rect x="1115" y="562" width="8" height="8" fill="#0000ff"/>
<rect x="1139" y="562" width="8" height="8" fill="#0000ff"/>
<rect x="1164" y="560" width="8" height="8" fill="#0000ff"/>
<rect x="1189" y="560" width="8" height="8" fill="#0000ff"/>
<rect x="1213" y="562" width="8" height="8" fill="#0000ff"/>
<rect x="1238" y="563" width="8" height="8" fill="#0000ff"/>
<rect x="1262" y="564" width="8" height="8" fill="#0000ff"/>
<rect x="1287" y="564" width="8" height="8" fill="#0000ff"/>
<rect x="1312" y="567" width="8" height="8" fill="#0000ff"/>
<rect x="1336" y="569" width="8" height="8" fill="#0000ff"/>
<rect x="1361" y="572" width="8" height="8" fill="#0000ff"/>
<rect x="1386" y="574" width="8" height="8" fill="#0000ff"/>
<path d="M922 995 L946 998.75 L971 976.6 L996 975 L1020 966.6 L1045 958.75 L1070 939.75 L1094 954.75 L1119 948.75 L1143 945.6 L1168 947.75 L1193 949.75 L1217 949.75 L1242 947.75 L1266 952.9 L1291 948.75 L1316 945.6 L1340 939.7 L1365 931 L1390 931" fill="none" stroke="#ff00ff" stroke-width="2" stroke-linejoin="round" shape-rendering="crispEdges"/>
<rect x="918" y="991" width="8" height="8" fill="#ff00ff"/>
<rect x="942" y="995" width="8" height="8" fill="#ff00ff"/>
<rect x="967" y="973" width="8" height="8" fill="#ff00ff"/>
<rect x="992" y="971" width="8" height="8" fill="#ff00ff"/>
<rect x="1016" y="963" width="8" height="8" fill="#ff00ff"/>
<rect x="1041" y="955" width="8" height="8" fill="#ff00ff"/>
<rect x="1066" y="936" width="8" height="8" fill="#ff00ff"/>
<rect x="1090" y="951" width="8" height="8" fill="#ff00ff"/>
<rect x="1115" y="945" width="8" height="8" fill="#ff00ff"/>
<rect x="1139" y="942" width="8" height="8" fill="#ff00ff"/>
<rect x="1164" y="944" width="8" height="8" fill="#ff00ff"/>
<rect x="1189" y="946" width="8" height="8" fill="#ff00ff"/>
<rect x="1213" y="946" width="8" height="8" fill="#ff00ff"/>
<rect x="1238" y="944" width="8" height="8" fill="#ff00ff"/>
<rect x="1262" y="949" width="8" height="8" fill="#ff00ff"/>
<rect x="1287" y="945" width="8" height="8" fill="#ff00ff"/>
<rect x="1312" y="942" width="8" height="8" fill="#ff00ff"/>
<rect x="1336" y="936" width="8" height="8" fill="#ff00ff"/>
<rect x="1361" y="927" width="8" height="8" fill="#ff00ff"/>
<rect x="1386" y="927" width="8" height="8" fill="#ff00ff"/>
</g>
<g clip-path="url(#clipC2)">
<path d="M1420 709 L1444 673 L1469 680 L1494 686 L1518 676 L1543 681 L1568 682 L1592 681 L1617 676 L1641 682 L1666 684 L1691 686 L1715 686 L1740 688 L1764 688 L1789 695 L1814 706 L1838 713 L1863 714" fill="none" stroke="#ffff00" stroke-width="2" stroke-linejoin="round" shape-rendering="crispEdges"/>
<rect x="1416" y="705" width="8" height="8" fill="#ffff00"/>
<rect x="1440" y="669" width="8" height="8" fill="#ffff00"/>
<rect x="1465" y="676" width="8" height="8" fill="#ffff00"/>
<rect x="1490" y="682" width="8" height="8" fill="#ffff00"/>
<rect x="1514" y="672" width="8" height="8" fill="#ffff00"/>
<rect x="1539" y="677" width="8" height="8" fill="#ffff00"/>
<rect x="1564" y="678" width="8" height="8" fill="#ffff00"/>
<rect x="1588" y="677" width="8" height="8" fill="#ffff00"/>
<rect x="1613" y="672" width="8" height="8" fill="#ffff00"/>
<rect x="1637" y="678" width="8" height="8" fill="#ffff00"/>
<rect x="1662" y="680" width="8" height="8" fill="#ffff00"/>
<rect x="1687" y="682" width="8" height="8" fill="#ffff00"/>
<rect x="1711" y="682" width="8" height="8" fill="#ffff00"/>
<rect x="1736" y="684" width="8" height="8" fill="#ffff00"/>
<rect x="1760" y="684" width="8" height="8" fill="#ffff00"/>
<rect x="1785" y="691" width="8" height="8" fill="#ffff00"/>
<rect x="1810" y="702" width="8" height="8" fill="#ffff00"/>
<rect x="1834" y="709" width="8" height="8" fill="#ffff00"/>
<rect x="1859" y="710" width="8" height="8" fill="#ffff00"/>
<rect x="1422" y="667" width="3" height="1" fill="#fff"/>
<rect x="1428" y="667" width="3" height="1" fill="#fff"/>
<rect x="1434" y="667" width="3" height="1" fill="#fff"/>
<rect x="1440" y="667" width="3" height="1" fill="#fff"/>
<rect x="1446" y="667" width="3" height="1" fill="#fff"/>
<rect x="1452" y="667" width="3" height="1" fill="#fff"/>
<rect x="1458" y="667" width="3" height="1" fill="#fff"/>
<rect x="1464" y="667" width="3" height="1" fill="#fff"/>
<rect x="1470" y="667" width="3" height="1" fill="#fff"/>
<rect x="1476" y="667" width="3" height="1" fill="#fff"/>
<rect x="1482" y="667" width="3" height="1" fill="#fff"/>
<rect x="1488" y="667" width="3" height="1" fill="#fff"/>
<rect x="1494" y="667" width="3" height="1" fill="#fff"/>
<rect x="1500" y="667" width="3" height="1" fill="#fff"/>
<rect x="1506" y="667" width="3" height="1" fill="#fff"/>
<rect x="1512" y="667" width="3" height="1" fill="#fff"/>
<rect x="1518" y="667" width="3" height="1" fill="#fff"/>
<rect x="1524" y="667" width="3" height="1" fill="#fff"/>
<rect x="1530" y="667" width="3" height="1" fill="#fff"/>
<rect x="1536" y="667" width="3" height="1" fill="#fff"/>
<rect x="1542" y="667" width="3" height="1" fill="#fff"/>
<rect x="1548" y="667" width="3" height="1" fill="#fff"/>
<rect x="1554" y="667" width="3" height="1" fill="#fff"/>
<rect x="1560" y="667" width="3" height="1" fill="#fff"/>
<rect x="1566" y="667" width="3" height="1" fill="#fff"/>
<rect x="1572" y="667" width="3" height="1" fill="#fff"/>
<rect x="1578" y="667" width="3" height="1" fill="#fff"/>
<rect x="1584" y="667" width="3" height="1" fill="#fff"/>
<rect x="1590" y="667" width="3" height="1" fill="#fff"/>
<rect x="1596" y="667" width="3" height="1" fill="#fff"/>
<rect x="1602" y="667" width="3" height="1" fill="#fff"/>
<rect x="1608" y="667" width="3" height="1" fill="#fff"/>
<rect x="1614" y="667" width="3" height="1" fill="#fff"/>
<rect x="1620" y="667" width="3" height="1" fill="#fff"/>
<rect x="1626" y="667" width="3" height="1" fill="#fff"/>
<rect x="1632" y="667" width="3" height="1" fill="#fff"/>
<rect x="1638" y="667" width="3" height="1" fill="#fff"/>
<rect x="1644" y="667" width="3" height="1" fill="#fff"/>
<rect x="1650" y="667" width="3" height="1" fill="#fff"/>
<rect x="1656" y="667" width="3" height="1" fill="#fff"/>
<rect x="1662" y="667" width="3" height="1" fill="#fff"/>
<rect x="1668" y="667" width="3" height="1" fill="#fff"/>
<rect x="1674" y="667" width="3" height="1" fill="#fff"/>
<rect x="1680" y="667" width="3" height="1" fill="#fff"/>
<rect x="1686" y="667" width="3" height="1" fill="#fff"/>
<rect x="1692" y="667" width="3" height="1" fill="#fff"/>
<rect x="1698" y="667" width="3" height="1" fill="#fff"/>
<rect x="1704" y="667" width="3" height="1" fill="#fff"/>
<rect x="1710" y="667" width="3" height="1" fill="#fff"/>
<rect x="1716" y="667" width="3" height="1" fill="#fff"/>
<rect x="1722" y="667" width="3" height="1" fill="#fff"/>
<rect x="1728" y="667" width="3" height="1" fill="#fff"/>
<rect x="1734" y="667" width="3" height="1" fill="#fff"/>
<rect x="1740" y="667" width="3" height="1" fill="#fff"/>
<rect x="1746" y="667" width="3" height="1" fill="#fff"/>
<rect x="1752" y="667" width="3" height="1" fill="#fff"/>
<rect x="1758" y="667" width="3" height="1" fill="#fff"/>
<rect x="1764" y="667" width="3" height="1" fill="#fff"/>
<rect x="1770" y="667" width="3" height="1" fill="#fff"/>
<rect x="1776" y="667" width="3" height="1" fill="#fff"/>
<rect x="1782" y="667" width="3" height="1" fill="#fff"/>
<rect x="1788" y="667" width="3" height="1" fill="#fff"/>
<rect x="1794" y="667" width="3" height="1" fill="#fff"/>
<rect x="1800" y="667" width="3" height="1" fill="#fff"/>
<rect x="1806" y="667" width="3" height="1" fill="#fff"/>
<rect x="1812" y="667" width="3" height="1" fill="#fff"/>
<rect x="1818" y="667" width="3" height="1" fill="#fff"/>
<rect x="1824" y="667" width="3" height="1" fill="#fff"/>
<rect x="1830" y="667" width="3" height="1" fill="#fff"/>
<rect x="1836" y="667" width="3" height="1" fill="#fff"/>
<rect x="1842" y="667" width="3" height="1" fill="#fff"/>
<rect x="1848" y="667" width="3" height="1" fill="#fff"/>
<rect x="1854" y="667" width="3" height="1" fill="#fff"/>
<rect x="1860" y="667" width="3" height="1" fill="#fff"/>
<rect x="1416" y="663" width="8" height="8" fill="#e8e8e8"/>
<rect x="1440" y="663" width="8" height="8" fill="#e8e8e8"/>
<rect x="1465" y="663" width="8" height="8" fill="#e8e8e8"/>
<rect x="1490" y="663" width="8" height="8" fill="#e8e8e8"/>
<rect x="1514" y="663" width="8" height="8" fill="#e8e8e8"/>
<rect x="1539" y="663" width="8" height="8" fill="#e8e8e8"/>
<rect x="1564" y="663" width="8" height="8" fill="#e8e8e8"/>
<rect x="1588" y="663" width="8" height="8" fill="#e8e8e8"/>
<rect x="1613" y="663" width="8" height="8" fill="#e8e8e8"/>
<rect x="1637" y="663" width="8" height="8" fill="#e8e8e8"/>
<rect x="1662" y="663" width="8" height="8" fill="#e8e8e8"/>
<rect x="1687" y="663" width="8" height="8" fill="#e8e8e8"/>
<rect x="1711" y="663" width="8" height="8" fill="#e8e8e8"/>
<rect x="1736" y="663" width="8" height="8" fill="#e8e8e8"/>
<rect x="1760" y="663" width="8" height="8" fill="#e8e8e8"/>
<rect x="1785" y="663" width="8" height="8" fill="#e8e8e8"/>
<rect x="1810" y="663" width="8" height="8" fill="#e8e8e8"/>
<rect x="1834" y="663" width="8" height="8" fill="#e8e8e8"/>
<rect x="1859" y="663" width="8" height="8" fill="#e8e8e8"/>
</g>
<rect x="2" y="1015" width="1899" height="2" fill="#fff"/>
<rect x="2" y="1017" width="1899" height="1" fill="#707070"/>
<rect x="2" y="1018" width="1899" height="1" fill="#707070"/>
<rect x="2" y="1019" width="1899" height="3" fill="#b0b0b0"/>
<rect x="0" y="1022" width="1920" height="20" fill="#f0f0f0"/>
<rect x="2" y="1022" width="1899" height="1" fill="#fff"/>
<rect x="0" y="1021" width="1" height="21" fill="#a0a0a0"/>
<rect x="1" y="1021" width="1" height="17" fill="#707070"/>
<rect x="19" y="1030" width="1825" height="2" fill="#868686"/>
<rect x="0" y="1041" width="1920" height="1" fill="#fff"/>
<rect x="0" y="1042" width="1920" height="1" fill="#000"/>
<rect x="0" y="1043" width="1920" height="18" fill="#f0f0f0"/>
<rect x="0" y="1042" width="54" height="19" fill="#000"/>
<rect x="1" y="1043" width="16" height="17" fill="#f0f0f0"/>
<rect x="1" y="1043" width="16" height="1" fill="#fff"/>
<rect x="1" y="1043" width="1" height="17" fill="#fff"/>
<rect x="1" y="1059" width="17" height="1" fill="#a0a0a0"/>
<rect x="16" y="1043" width="1" height="17" fill="#a0a0a0"/>
<rect x="18" y="1043" width="16" height="17" fill="#f0f0f0"/>
<rect x="18" y="1043" width="16" height="1" fill="#fff"/>
<rect x="18" y="1043" width="1" height="17" fill="#fff"/>
<rect x="18" y="1059" width="17" height="1" fill="#a0a0a0"/>
<rect x="33" y="1043" width="1" height="17" fill="#a0a0a0"/>
<rect x="35" y="1043" width="17" height="17" fill="#f0f0f0"/>
<rect x="35" y="1043" width="16" height="1" fill="#fff"/>
<rect x="35" y="1043" width="1" height="17" fill="#fff"/>
<rect x="35" y="1059" width="17" height="1" fill="#a0a0a0"/>
<rect x="51" y="1043" width="1" height="17" fill="#a0a0a0"/>
<path d="M5.5 1047.5L13 1055M13 1047.5L5.5 1055" stroke="#000" stroke-width="1.3" shape-rendering="geometricPrecision"/>
<path d="M28.5 1047.5V1055.5L24 1051.5Z" fill="#000" shape-rendering="geometricPrecision"/>
<path d="M41.5 1047.5V1055.5L46 1051.5Z" fill="#000" shape-rendering="geometricPrecision"/>
<g shape-rendering="geometricPrecision">
<path d="M54 1043H122L116 1060H62Z" fill="#fff"/>
<path d="M54.5 1042.5L62.5 1060.5H118.5" stroke="#000" stroke-width="1" fill="none"/>
<path d="M128.3 1042.5L119.7 1060.5" stroke="#000" stroke-width="1" fill="none"/>
<path d="M123.2 1052.3L127.2 1060.5H171.3L174.7 1051.7" stroke="#000" stroke-width="1" fill="none"/>
<path d="M170.7 1042.5L178.7 1060.5H239.2L243.1 1051.7" stroke="#000" stroke-width="1" fill="none"/>
<path d="M238.9 1042.5L246.9 1060.5H312.7L321.3 1042.5" stroke="#000" stroke-width="1" fill="none"/>
</g>
<rect x="119" y="1042" width="203" height="1" fill="#000"/>
<text x="66" y="1054.5" font-family="'DejaVu Sans', sans-serif" font-size="10.5" font-weight="bold" fill="#000" textLength="50.0" lengthAdjust="spacingAndGlyphs">Measures</text>
<text x="131.5" y="1054.5" font-family="'DejaVu Sans', sans-serif" font-size="10.5" fill="#000" textLength="33.5" lengthAdjust="spacingAndGlyphs">Gamma</text>
<text x="186" y="1054.5" font-family="'DejaVu Sans', sans-serif" font-size="10.5" fill="#000" textLength="45.0" lengthAdjust="spacingAndGlyphs">Luminance</text>
<text x="255" y="1054.5" font-family="'DejaVu Sans', sans-serif" font-size="10.5" fill="#000" textLength="50.0" lengthAdjust="spacingAndGlyphs">RGB Levels</text>
<g shape-rendering="crispEdges"><path d="M1751 1044h14v8h-1v3h-1v2h-3v-2h-1v-2h-2v2h-1v2h-3v-2h-1v-3h-1z" fill="#000"/><path d="M1752 1045h12v7h-1v3h-2v-4h-6v4h-2v-3h-1z" fill="#7a7a00"/><rect x="1755" y="1046" width="6" height="5" fill="#e81c24"/><rect x="1755" y="1047" width="3" height="2" fill="#fff"/><rect x="1759" y="1053" width="4" height="4" fill="#f8f000"/></g>
<rect x="1847" y="1044" width="12" height="12" fill="#fff"/>
<rect x="1847" y="1044" width="12" height="1" fill="#696969"/>
<rect x="1847" y="1044" width="1" height="12" fill="#696969"/>
<rect x="1848" y="1045" width="10" height="1" fill="#a0a0a0"/>
<rect x="1848" y="1045" width="1" height="10" fill="#a0a0a0"/>
<rect x="1847" y="1055" width="12" height="1" fill="#fff"/>
<rect x="1858" y="1044" width="1" height="12" fill="#fff"/>
<rect x="1848" y="1054" width="10" height="1" fill="#e3e3e3"/>
<rect x="1857" y="1045" width="1" height="10" fill="#e3e3e3"/>
<text x="1864" y="1054.4" font-family="'Liberation Sans', sans-serif" font-size="11" fill="#000" textLength="50.0" lengthAdjust="spacingAndGlyphs">Reference</text>
<rect x="0" y="1061" width="1920" height="19" fill="#e4eaf5"/>
<text x="2" y="1075" font-family="'Liberation Sans', sans-serif" font-size="12" fill="#000" textLength="31.0" lengthAdjust="spacingAndGlyphs">Ready</text>
<rect x="1742" y="1062" width="75" height="18" fill="#eef2fa"/>
<rect x="1742" y="1062" width="75" height="1" fill="#9fb4d4"/>
<rect x="1742" y="1062" width="1" height="18" fill="#9fb4d4"/>
<rect x="1816" y="1063" width="1" height="17" fill="#fff"/>
<rect x="1820" y="1062" width="28" height="18" fill="#eef2fa"/>
<rect x="1820" y="1062" width="28" height="1" fill="#9fb4d4"/>
<rect x="1820" y="1062" width="1" height="18" fill="#9fb4d4"/>
<rect x="1847" y="1063" width="1" height="17" fill="#fff"/>
<rect x="1851" y="1062" width="33" height="18" fill="#eef2fa"/>
<rect x="1851" y="1062" width="33" height="1" fill="#9fb4d4"/>
<rect x="1851" y="1062" width="1" height="18" fill="#9fb4d4"/>
<rect x="1883" y="1063" width="1" height="17" fill="#fff"/>
<rect x="1887" y="1062" width="32" height="18" fill="#eef2fa"/>
<rect x="1887" y="1062" width="32" height="1" fill="#9fb4d4"/>
<rect x="1887" y="1062" width="1" height="18" fill="#9fb4d4"/>
<rect x="1918" y="1063" width="1" height="17" fill="#fff"/>
<text x="1853" y="1076" font-family="'Liberation Sans', sans-serif" font-size="12" fill="#000" textLength="28.0" lengthAdjust="spacingAndGlyphs">NUM</text>
</svg>
</body></html>
